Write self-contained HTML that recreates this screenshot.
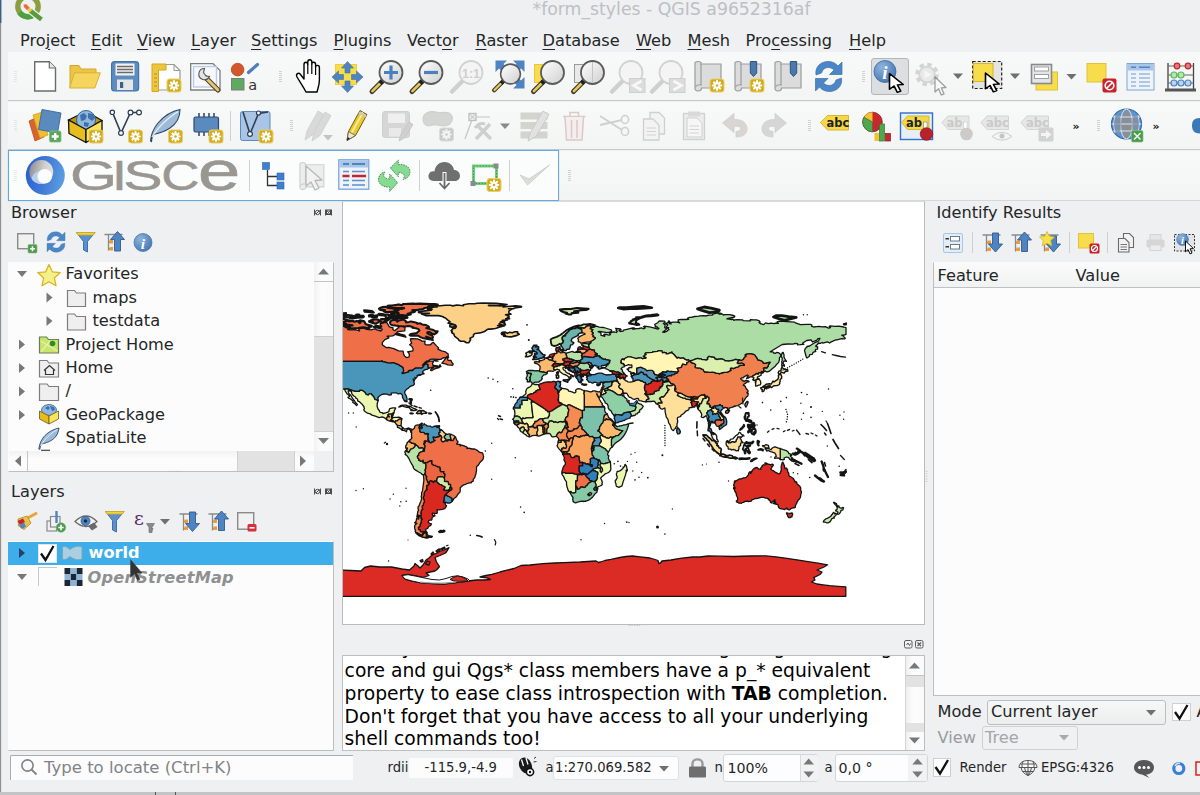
<!DOCTYPE html>
<html><head><meta charset="utf-8"><title>QGIS</title>
<style>
html,body{margin:0;padding:0}
body{width:1200px;height:795px;position:relative;overflow:hidden;background:#eff0f1;font-family:"DejaVu Sans","Liberation Sans",sans-serif;font-size:16.2px;color:#232627}
.a{position:absolute}
.t{position:absolute;white-space:nowrap;line-height:1}
svg{position:absolute;left:0;top:0;overflow:visible}
u{text-decoration-thickness:1px;text-underline-offset:3px}
.view{position:absolute;background:#fcfcfc;border:1px solid #bcbebf;box-sizing:border-box}
.tb{position:absolute;background:linear-gradient(#f8f9f9,#f3f4f4)}
.dots{position:absolute;width:3px;height:11px;background:repeating-linear-gradient(#cfd1d2 0 1px,transparent 1px 2px)}
.sep{position:absolute;width:1px;background:#cfd0d1}
</style></head><body>
<svg width="0" height="0"><defs>
<linearGradient id="gLens" x1="0" y1="0" x2="1" y2="1"><stop offset="0" stop-color="#ffffff"/><stop offset="1" stop-color="#cfcfcf"/></linearGradient>
<linearGradient id="gScroll" x1="0" y1="0" x2="1" y2="0"><stop offset="0" stop-color="#c9c9c9"/><stop offset=".3" stop-color="#ececec"/><stop offset="1" stop-color="#d6d6d6"/></linearGradient>
<radialGradient id="gBlue" cx=".35" cy=".3" r=".8"><stop offset="0" stop-color="#8fb4dc"/><stop offset="1" stop-color="#3f73b0"/></radialGradient>
<g id="star"><rect x="0" y="0" width="14" height="13" rx="2.5" fill="#d4ad1e" stroke="#e8cf6a" stroke-width="1"/><g stroke="#fff" stroke-width="2.2" stroke-linecap="round"><path d="M7 2.2V10.8M2.8 6.5H11.2M4 3.5L10 9.5M10 3.5L4 9.5"/></g><circle cx="7" cy="6.5" r="1.3" fill="#d4ad1e"/></g>
<g id="starg"><rect x="0" y="0" width="14" height="13" rx="2.5" fill="#c9c9c9" stroke="#dcdcdc" stroke-width="1"/><g stroke="#f4f4f4" stroke-width="2.2" stroke-linecap="round"><path d="M7 2.2V10.8M2.8 6.5H11.2M4 3.5L10 9.5M10 3.5L4 9.5"/></g><circle cx="7" cy="6.5" r="1.3" fill="#c9c9c9"/></g>
<g id="mag"><path d="M-8.5 8.5L-19 19" stroke="#3a3a3a" stroke-width="5" stroke-linecap="round"/><path d="M-10.5 10.5L-18.6 18.6" stroke="#ecc94a" stroke-width="2.6" stroke-linecap="round"/><path d="M-8 8L-11 11" stroke="#222" stroke-width="4.5"/><circle r="11.5" fill="url(#gLens)" stroke="#5a5a5a" stroke-width="1.8"/></g>
<g id="magg"><path d="M-8.5 8.5L-19 19" stroke="#cfcfcf" stroke-width="4.5" stroke-linecap="round"/><circle r="11.5" fill="#f4f4f4" stroke="#d2d2d2" stroke-width="1.8"/></g>
<path id="dd" d="M-5 -2.5H5L0 3Z" fill="#6d6f71"/>
<g id="scroll"><path d="M1 1.5Q4 -.5 7 1.5V3H27V27H7.5Q7.5 30 4 30Q.5 30 1 26Z" fill="#dcdcdc" stroke="#9c9c9c" stroke-width="1.2"/><path d="M7 3V24Q3 23 1.3 26" fill="none" stroke="#9c9c9c" stroke-width="1.2"/></g>
<g id="curs"><path d="M0 0L0 15L3.6 11.8L6.3 18L9 16.8L6.3 10.8L11 10.5Z" fill="#fff" stroke="#000" stroke-width="1.3" stroke-linejoin="round"/></g>
</defs></svg>
<!-- left edge strip -->
<div class="a" style="left:0;top:0;width:1px;height:795px;background:#8e9092"></div>
<div class="a" style="left:1px;top:0;width:1px;height:795px;background:#e1e2e3"></div>
<div class="a" style="left:0;top:0;width:1px;height:23px;background:#3d5f86"></div>
<div class="a" style="left:1px;top:0;width:1px;height:23px;background:#9fb0c5"></div>
<!-- bottom strip -->
<div class="a" style="left:0;top:792px;width:1200px;height:3px;background:#c2c4c5"></div>
<!-- title -->
<div class="t" id="title" style="left:532.5px;top:.8px;font-size:17.3px;color:#bcc0c3">*form_styles - QGIS a9652316af</div>
<!-- menubar -->
<div id="menu">
<span class="t" style="left:20px;top:32.8px">Pro<u>j</u>ect</span>
<span class="t" style="left:91px;top:32.8px"><u>E</u>dit</span>
<span class="t" style="left:137px;top:32.8px"><u>V</u>iew</span>
<span class="t" style="left:191px;top:32.8px"><u>L</u>ayer</span>
<span class="t" style="left:251px;top:32.8px"><u>S</u>ettings</span>
<span class="t" style="left:333.5px;top:32.8px"><u>P</u>lugins</span>
<span class="t" style="left:407px;top:32.8px">Vect<u>o</u>r</span>
<span class="t" style="left:475.5px;top:32.8px"><u>R</u>aster</span>
<span class="t" style="left:542.5px;top:32.8px"><u>D</u>atabase</span>
<span class="t" style="left:636px;top:32.8px"><u>W</u>eb</span>
<span class="t" style="left:687.5px;top:32.8px"><u>M</u>esh</span>
<span class="t" style="left:745.5px;top:32.8px">Pro<u>c</u>essing</span>
<span class="t" style="left:849px;top:32.8px"><u>H</u>elp</span>
</div>
<!-- toolbars bg -->
<div class="tb" style="left:8px;top:52px;width:1192px;height:48px"></div>
<div class="a" style="left:8px;top:100px;width:1192px;height:1px;background:#c8c9ca"></div>
<div class="tb" style="left:8px;top:102px;width:1192px;height:47px"></div>
<div class="a" style="left:8px;top:149px;width:1192px;height:1px;background:#c8c9ca"></div>
<div class="tb" style="left:8px;top:151px;width:1192px;height:49px"></div>
<div class="a" style="left:8px;top:200px;width:1192px;height:1px;background:#d6d7d8"></div>

<!-- Q LOGO -->
<svg width="1200" height="795" viewBox="0 0 1200 795">
<defs><clipPath id="qc"><rect x="0" y="0" width="60" height="22"/></clipPath></defs>
<g clip-path="url(#qc)">
<circle cx="28" cy="6.500" r="10.200" fill="none" stroke="#8a9f3f" stroke-width="5.400"/>
<path d="M19.500 12.500A10.200 10.200 0 0 0 33.500 15" fill="none" stroke="#4da040" stroke-width="5.400"/>
<path d="M29.500 10L42 20" stroke="#eff0f1" stroke-width="6.800"/>
<path d="M30 10.500L41.500 19.500" stroke="#5a9a3c" stroke-width="4.600"/>
<path d="M27.500 8L31 11.300" stroke="#f3c846" stroke-width="3.600"/>
<path d="M24.800 5.400L28.300 8.700" stroke="#ee6a3a" stroke-width="3.600"/>
<path d="M23.500 4.200L26 4.600L24 6.600Z" fill="#ee6a3a"/>
</g>
</svg>

<!-- TOOLBAR 1 -->
<div class="dots" style="opacity:.45;left:14px;top:71px"></div>
<div class="dots" style="left:279px;top:71px"></div>
<div class="dots" style="left:862px;top:71px"></div>
<div class="a" style="left:871px;top:58px;width:38px;height:37px;box-sizing:border-box;background:#dddee0;border:1px solid #b4b6b8;border-radius:3px"></div>
<svg width="1200" height="795" viewBox="0 0 1200 795">
<!-- new -->
<path d="M34.7 61.7H49.3L55.5 68V91H34.7Z" fill="#fff" stroke="#6b6b6b" stroke-width="1.4"/><path d="M49.3 61.7V68H55.5" fill="#e8e8e8" stroke="#6b6b6b" stroke-width="1.2"/>
<!-- open -->
<path d="M70 87V65.5H79L81 69H96V74" fill="#ecc545" stroke="#d3a82a" stroke-width="1"/><path d="M69.6 88L74.5 72.8H100.3L94.8 88Z" fill="#f5d55e" stroke="#d9b033" stroke-width="1"/>
<!-- save -->
<rect x="111.6" y="61.6" width="27" height="29.4" rx="3" fill="#5d8cc0" stroke="#4672a6" stroke-width="1.2"/><rect x="115.5" y="63.5" width="19" height="12" fill="#f2f2f2"/><path d="M117 66.5H133M117 69.5H133M117 72.5H133" stroke="#6a6a6a" stroke-width="1.3"/><rect x="117" y="79.5" width="16" height="10.5" fill="#e6e6e6"/><rect x="120" y="82" width="3.2" height="6" fill="#3c5f8f"/>
<!-- new layout -->
<path d="M154 64.5H174L180 70.5V90H154Z" fill="#fff" stroke="#9a9a9a" stroke-width="1.2"/><path d="M174 64.5V70.5H180" fill="none" stroke="#9a9a9a"/><path d="M152 64H166V70H158.5V91.5H152Z" fill="#ecc63e" stroke="#d4a820" stroke-width="1"/><path d="M154 74h3M154 78h3M154 82h3M154 86h3" stroke="#b8901a" stroke-width="1"/><use href="#star" x="167" y="79"/>
<!-- layout manager -->
<path d="M190.7 63.7H213L220 70.5V90H190.7Z" fill="#fff" stroke="#7c7c7c" stroke-width="1.3"/><rect x="193.5" y="66.5" width="23" height="20.5" fill="#f6f8fb" stroke="#b8cbe6" stroke-width="1.4"/><path d="M206 78L218 90" stroke="#4a4234" stroke-width="5.2" stroke-linecap="round"/><path d="M206.5 78.5L217.8 89.8" stroke="#e8c66e" stroke-width="3" stroke-linecap="round"/><path d="M204.5 68.5A5.6 5.6 0 1 0 209.5 76.5L206 76L203.5 72.5Z" fill="#e4e4e4" stroke="#555" stroke-width="1.1"/>
<!-- style manager -->
<circle cx="237.6" cy="69.6" r="6.3" fill="#d2572b" stroke="#b8441f" stroke-width=".8"/><path d="M248.5 72.5L257.5 64.5" stroke="#4d7fb8" stroke-width="3.2" stroke-linecap="round"/><rect x="231.5" y="78.5" width="12.5" height="11.5" fill="#5eab60" stroke="#7c7c7c" stroke-width="1"/>
<text x="248.3" y="89.6" font-size="14.5" fill="#333" font-family="DejaVu Sans,Liberation Sans,sans-serif">a</text>
<!-- hand -->
<path d="M306 92C303 86 300 82 297 77C295.5 74 298.5 72 300.5 74.5L304 79V64.5C304 61.5 307.8 61.5 307.8 64.5V62C307.8 59 311.8 59 311.8 62V64C311.8 61.5 315.6 61.5 315.6 64.5V67C315.6 64.8 319.4 64.8 319.4 67.5V80C319.4 85 318 88 317 92Z" fill="#fff" stroke="#000" stroke-width="1.4" stroke-linejoin="round"/><path d="M307.8 64.5V74M311.8 64V74M315.6 67V75" stroke="#000" stroke-width="1.2"/>
<!-- pan to selection -->
<rect x="335.5" y="64.5" width="21" height="20" fill="#f7dc4b" stroke="#f0cf3a"/><g fill="#4f84c2" stroke="#3f70ab" stroke-width=".6"><path d="M347.5 61.5L353.5 68H350V73H345V68H341.5Z"/><path d="M347.5 92.5L353.5 86H350V81H345V86H341.5Z"/><path d="M332 77L338.5 71V74.5H343.5V79.5H338.5V83Z"/><path d="M363 77L356.5 71V74.5H351.5V79.5H356.5V83Z"/></g>
<!-- zoom in -->
<use href="#mag" x="391" y="72.5"/><path d="M391 65.5V79.5M384 72.5H398" stroke="#4a7fc0" stroke-width="3.2"/>
<!-- zoom out -->
<use href="#mag" x="431" y="72.5"/><path d="M424 72.5H438" stroke="#4a7fc0" stroke-width="3.2"/>
<!-- zoom 1:1 disabled -->
<use href="#magg" x="471" y="72.5"/><text x="471" y="77.5" text-anchor="middle" font-size="12.5" font-weight="bold" fill="#cfcfcf" font-family="Liberation Sans,sans-serif">1:1</text>
<!-- zoom full -->
<g fill="#4f84c2"><path d="M495.5 60.5H507L503.5 64L507.5 68L503 72.500L499 68.500L495.500 72Z"/><path d="M524.500 60.500H513L516.500 64L512.500 68L517 72.500L521 68.500L524.500 72Z"/><path d="M524.500 88.500H513L516.500 85L512.500 81L517 76.500L521 80.500L524.500 77Z"/></g>
<g transform="translate(510.5 74) scale(.86)"><use href="#mag"/></g>
<!-- zoom selection -->
<rect x="534.5" y="64.5" width="14" height="18" fill="#f7dc4b" stroke="#e8c83a"/><use href="#mag" x="552.5" y="72.5"/>
<!-- zoom layer -->
<rect x="574.5" y="64.5" width="16" height="18" fill="#e9e9e9" stroke="#9a9a9a"/><use href="#mag" x="592.5" y="72.5"/><path d="M592.5 62V83" stroke="#c4c4c4" stroke-width="1"/>
<!-- zoom last / next -->
<use href="#magg" x="631" y="72.5"/><rect x="629.5" y="78.5" width="15.5" height="14" fill="#dcdcdc" stroke="#cfcfcf"/><path d="M641.5 81L633.5 85.5L641.5 90" fill="none" stroke="#f8f8f8" stroke-width="2.6"/>
<use href="#magg" x="671" y="72.5"/><rect x="669.5" y="78.5" width="15.5" height="14" fill="#dcdcdc" stroke="#cfcfcf"/><path d="M673.5 81L681.5 85.5L673.5 90" fill="none" stroke="#f8f8f8" stroke-width="2.6"/>
<!-- new map view -->
<use href="#scroll" x="694" y="61"/><use href="#star" x="710" y="79"/>
<!-- new bookmark -->
<use href="#scroll" x="734" y="61"/><path d="M750.3 61.5H756.7V73L753.5 76.5L750.3 73Z" fill="#4a78ad" stroke="#2f5480" stroke-width="1"/><use href="#star" x="750" y="79"/>
<!-- bookmarks -->
<use href="#scroll" x="774" y="61"/><path d="M790.3 61.5H796.7V73L793.5 76.5L790.3 73Z" fill="#4a78ad" stroke="#2f5480" stroke-width="1"/>
<!-- refresh -->
<g fill="#4b86c6" stroke="#3c70aa" stroke-width=".7"><path d="M816 75C814.5 66 822 61 829 61.5C833 61.8 836 63.5 838 66L842 62V74.5H829.5L834 70C831 66.5 823.5 66 821.5 73Z"/><path d="M841.5 78C843 87 835.5 92 828.5 91.5C824.5 91.2 821.5 89.5 819.5 87L815.5 91V78.5H828L823.5 83C826.5 86.5 834 87 836 80Z"/></g>
<!-- identify -->
<circle cx="885" cy="71.5" r="11" fill="url(#gBlue)" stroke="#3a6aa3" stroke-width=".8"/><text x="885" y="79" text-anchor="middle" font-size="19" font-style="italic" font-weight="bold" fill="#fff" font-family="Liberation Serif,serif">i</text><g transform="translate(889.5 73.5) scale(1.25 1.05)"><use href="#curs"/></g>
<!-- feature action disabled -->
<g fill="none" stroke="#d4d4d4"><circle cx="927" cy="74.5" r="9.5" stroke-width="4.5" stroke-dasharray="4.2 3.26"/><circle cx="927" cy="74.5" r="7.8" stroke-width="1.8" fill="#e9e9e9"/></g><path d="M924.5 70.5L931.5 74.5L924.5 78.5Z" fill="#f6f6f6"/><g opacity=".35"><use href="#curs" x="935" y="77"/></g>
<use href="#dd" x="958" y="76"/>
<!-- select -->
<rect x="972.7" y="61.5" width="29" height="27" fill="#e4e4e4" stroke="#222" stroke-width="1.2" stroke-dasharray="3 2"/><rect x="973.5" y="63.5" width="19.5" height="18" fill="#f7dc4b" stroke="#d8b52c"/><g transform="translate(985.5 73) scale(1.25 1.05)"><use href="#curs"/></g>
<use href="#dd" x="1015" y="76"/>
<!-- select by value -->
<rect x="1036" y="72" width="21.5" height="18" fill="#f7dc4b" stroke="#e3c23a"/><rect x="1031.5" y="64.5" width="20" height="19" fill="#e2e6ea" stroke="#8a8a8a" stroke-width="1.6"/><rect x="1034.5" y="67" width="14" height="4" fill="#fff" stroke="#8a8a8a" stroke-width=".8"/><rect x="1034.5" y="74.5" width="14" height="4" fill="#fff" stroke="#8a8a8a" stroke-width=".8"/>
<use href="#dd" x="1071.5" y="76.5"/>
<!-- deselect -->
<rect x="1087" y="63.5" width="19" height="18.5" fill="#f7dc4b" stroke="#e3c23a"/><rect x="1102.5" y="78.5" width="14" height="14" rx="2" fill="#c8232c"/><circle cx="1109.5" cy="85.5" r="4.3" fill="none" stroke="#fff" stroke-width="1.6"/><path d="M1106.5 88.5L1112.5 82.5" stroke="#fff" stroke-width="1.6"/>
<!-- attribute table -->
<rect x="1127" y="63.5" width="27" height="26.5" fill="#eef3f9" stroke="#7ea6d3" stroke-width="1"/><rect x="1127.5" y="64" width="26" height="6.5" fill="#a9c6e8"/><path d="M1131 67.2H1136M1139 67.2H1150" stroke="#4f84c2" stroke-width="1.6"/><path d="M1131 74H1136M1139 74H1150M1131 78H1136M1139 78H1150M1131 82H1136M1139 82H1150M1131 86H1136M1139 86H1150" stroke="#6c9bd0" stroke-width="1.1"/>
<!-- statistics abacus -->
<path d="M1168 63V89M1193.5 63V89" stroke="#444" stroke-width="1.3"/><path d="M1168 66H1193.5M1168 75H1193.5M1168 83H1193.5" stroke="#666" stroke-width="1"/><rect x="1165" y="88.5" width="31" height="3" fill="#555"/><g stroke-width="1.2"><circle cx="1177" cy="66" r="2.8" fill="#e8767a" stroke="#c0272d"/><circle cx="1188" cy="66" r="2.8" fill="#e8767a" stroke="#c0272d"/><circle cx="1174" cy="75" r="3" fill="#b5e6b0" stroke="#5cb85c"/><circle cx="1181" cy="75" r="3" fill="#b5e6b0" stroke="#5cb85c"/><circle cx="1174" cy="83" r="3" fill="#b9d4ee" stroke="#4f84c2"/><circle cx="1181" cy="83" r="3" fill="#b9d4ee" stroke="#4f84c2"/><circle cx="1188" cy="83" r="3" fill="#b9d4ee" stroke="#4f84c2"/></g>
</svg>

<!-- TOOLBAR 2 -->
<div class="dots" style="opacity:.45;left:14px;top:120px"></div>
<div class="dots" style="left:290px;top:120px"></div>
<div class="dots" style="left:808px;top:120px"></div>
<div class="dots" style="left:1097px;top:120px"></div>
<div class="sep" style="left:230px;top:111px;height:30px"></div>
<svg width="1200" height="795" viewBox="0 0 1200 795">
<!-- data source manager -->
<path d="M29 121L38 117L44 137L35 141Z" fill="#d9632c" stroke="#b84e1e" stroke-width=".8"/><path d="M33 115L41 112.5L48 135L40 138Z" fill="#f0bf2f" stroke="#d3a320" stroke-width=".8"/><path d="M42 109.5L61 113L57.5 133L38.5 129.5Z" fill="#5b8abf" stroke="#426f9f" stroke-width="1"/><rect x="49.5" y="131" width="11.5" height="11" rx="1.5" fill="#5aa55a" stroke="#7fbf7f" stroke-width=".8"/><path d="M55.2 133V140M51.7 136.5H58.7" stroke="#fff" stroke-width="2.4"/>
<!-- new geopackage -->
<path d="M68.500 120L86 111.500L102 120.500L86 129.500Z" fill="#b8960f" stroke="#111" stroke-width="1.200"/><circle cx="86" cy="120" r="9.500" fill="#8fb8e0" stroke="#3a5f8c" stroke-width="1"/><path d="M80 115l4-2l3 3l-2 4l-4 1zM88 113l5 1l2 4l-3 3l-4-3zM84 122l5 1l-1 4l-4-1z" fill="#3f6fa8"/><path d="M68.5 120L86 129.5V142.5L69 133.5Z" fill="#e6bd1c" stroke="#111" stroke-width="1.3" stroke-linejoin="round"/><path d="M86 129.5L102 120.5V133L86 142.5Z" fill="#f8e55c" stroke="#111" stroke-width="1.3" stroke-linejoin="round"/><use href="#star" x="89" y="130"/>
<!-- new shapefile -->
<path d="M112.5 112.5L121 133L130.5 112.5H139" fill="none" stroke="#2b3f57" stroke-width="1.6"/><g fill="#fff" stroke="#2b3f57" stroke-width="1.2"><circle cx="112.3" cy="112.3" r="2.2"/><circle cx="130.5" cy="112.5" r="2.4"/><circle cx="139" cy="112.5" r="2.4"/><circle cx="121" cy="133" r="2.4"/></g><use href="#star" x="128.5" y="130"/>
<!-- new spatialite feather -->
<path d="M150.5 141C151 134 154 128 158 123C164 116 172 111 180 109.5C180 117 176 124 170 128C164 132 158 133.5 153.5 134.5C152 137 151.5 139 151.5 141.5Z" fill="#9dbbd8" stroke="#2e4a68" stroke-width="1.1"/><path d="M152 137C158 127 168 118 178 111.5" fill="none" stroke="#e9f1f8" stroke-width="1.2"/><use href="#star" x="168.5" y="130"/>
<!-- scratch layer chip -->
<path d="M199 113V117M204 113V117M209 113V117M214 113V117M199 132V136M204 132V136M209 132V136M214 132V136" stroke="#23364f" stroke-width="1.4"/><rect x="194" y="117" width="24.5" height="15" rx="1.5" fill="#5b8abf" stroke="#2d4a6e" stroke-width="1.2"/><use href="#star" x="209" y="130"/>
<!-- virtual layer -->
<rect x="240.5" y="111.5" width="29.5" height="29" rx="2" fill="#a9c4e4" stroke="#5b8abf" stroke-width="1"/><path d="M243 112L250 134L258.5 113.5L268 112" fill="none" stroke="#2b3f57" stroke-width="1.6"/><g fill="#fff" stroke="#2b3f57" stroke-width="1.2"><circle cx="250" cy="134" r="2.4"/><circle cx="258.5" cy="113" r="2"/></g><use href="#star" x="259" y="130"/>
<!-- current edits disabled -->
<g fill="#d9d9d9" stroke="#cdcdcd" stroke-width=".8"><path d="M305 140L307 131L318 111L324 114.5L313 134.5Z"/><path d="M312 141L314 132L325 112L331 115.5L320 135.5Z"/></g><path d="M323 135H333L328 140.5Z" fill="#c4c4c4"/>
<!-- toggle editing -->
<path d="M347 140.5L348.5 131.5L360 110.5L367 114.5L355.5 135.5Z" fill="#ecc92e" stroke="#6b5a14" stroke-width="1"/><path d="M351.5 133L363 112.5" stroke="#fbf0a0" stroke-width="1.6"/><path d="M347 140.5L348.5 131.5L355.5 135.5Z" fill="#f2e6c8" stroke="#555" stroke-width=".8"/><path d="M347 140.5L347.6 137L350 138.6Z" fill="#222"/><path d="M359 112.5L366 116.5" stroke="#c8c8c8" stroke-width="2.5"/>
<!-- save edits disabled -->
<rect x="382.5" y="111.5" width="27" height="26" rx="2.5" fill="#d6d6d6" stroke="#cfcfcf"/><rect x="388" y="113.5" width="17" height="9.5" fill="#efefef"/><rect x="389" y="128" width="12" height="8.5" fill="#e9e9e9"/><path d="M399 141L400.5 135L409 122L413 124.5L404.5 138Z" fill="#d0d0d0" stroke="#c4c4c4" stroke-width=".8"/>
<!-- add feature disabled -->
<path d="M423 119C423 113 429 110.5 436 112C442 113.5 446 111 450 113.5C454 116 453 124 447 125.5C441 127 437 123.500 431 125.500C426 127 423 124 423 119Z" fill="#d3d6d3" stroke="#cdcdcd"/><use href="#starg" x="439.500" y="128"/>
<!-- vertex tool disabled -->
<rect x="469" y="113.500" width="7" height="7" fill="#efefef" stroke="#bdbdbd" stroke-width="1.300"/><path d="M470 114.500L475 119.500M475 114.500L470 119.500" stroke="#bdbdbd"/><path d="M476 117H490M471.500 121L465 139" stroke="#c4c4c4" stroke-width="1.200"/><path d="M476 139L490 124M478 126L491 139" stroke="#cfcfcf" stroke-width="3.500"/><path d="M475 128Q479 122 485 124" stroke="#cdcdcd" stroke-width="3" fill="none"/>
<use href="#dd" x="505" y="126" opacity=".8"/>
<!-- modify attributes disabled -->
<g fill="#d4d4cf"><rect x="520.500" y="112.500" width="27" height="7"/><rect x="520.500" y="122" width="27" height="7"/><rect x="520.500" y="131.500" width="27" height="7"/></g><path d="M528 141L530 133L543 111L549 114.500L536 136.500Z" fill="#e2e2e2" stroke="#c6c6c6" stroke-width=".9"/>
<!-- trash disabled -->
<g fill="none" stroke="#d9c9c9" stroke-width="1.500"><path d="M563 116.500H585.500M570 116V112.500H578.500V116"/><path d="M565 117L566.500 140H582L583.500 117" fill="#f4eeee"/><path d="M571.500 120V138M577 120V138"/></g>
<!-- scissors disabled -->
<path d="M600 116L622 130M600 125L622 120" stroke="#cfcfcf" stroke-width="1.800"/><ellipse cx="625" cy="131.500" rx="3.600" ry="4" fill="none" stroke="#cfcfcf" stroke-width="1.600"/><ellipse cx="625" cy="119.500" rx="3.600" ry="4" fill="none" stroke="#cfcfcf" stroke-width="1.600"/>
<!-- copy disabled -->
<g fill="#f3f3f3" stroke="#cfcfcf" stroke-width="1.300"><path d="M650 112.500H659L664.500 118V134H650Z"/><path d="M643.500 119H653L659 125V140H643.500Z"/></g><path d="M646.500 128H656M646.500 131.500H656M646.500 135H656" stroke="#d4d4d4" stroke-width="1.200"/>
<!-- paste disabled -->
<rect x="683.500" y="113.500" width="21" height="26" fill="#ececec" stroke="#cfcfcf" stroke-width="1.300"/><rect x="688" y="111.500" width="12" height="5" fill="#d9d9d9"/><path d="M687 118H697L702 123V137H687Z" fill="#f6f6f6" stroke="#cfcfcf"/><path d="M689.500 126H699M689.500 129.500H699M689.500 133H699" stroke="#d4d4d4" stroke-width="1.200"/>
<!-- undo / redo disabled -->
<path d="M722.500 123L734 113.500V119.500C742 119 747 123 747 129C747 134 743 137 736 137V131.500C739 131.500 740.500 130 740.500 128.500C740.500 126.500 738 126 734 126.500V132.500Z" fill="#d9d5d5" stroke="#cfcaca" stroke-width=".7"/>
<path d="M786.500 123L775 113.500V119.500C767 119 762 123 762 129C762 134 766 137 773 137V131.500C770 131.500 768.500 130 768.500 128.500C768.500 126.500 771 126 775 126.500V132.500Z" fill="#d6d6d6" stroke="#cccccc" stroke-width=".7"/>
<!-- label abc -->
<path d="M820.500 122.500L827.500 115.500H848.500V130H827.500Z" fill="#f4d84a" stroke="#d9b62a" stroke-width="1"/><text x="837.800" y="127.200" text-anchor="middle" font-size="11.500" font-weight="bold" fill="#222" font-family="DejaVu Sans,Liberation Sans,sans-serif">abc</text>
<!-- diagram -->
<circle cx="872.500" cy="122" r="9.800" fill="#c8272d" stroke="#8a1a1f" stroke-width=".8"/><path d="M872.500 122V112.200A9.800 9.800 0 0 0 864 117.200Z" fill="#f2c22f"/><path d="M872.500 122L864 117.200A9.800 9.800 0 0 0 872.500 131.800Z" fill="#4fa84f" stroke="#2e7a2e" stroke-width=".6"/><rect x="874.500" y="133" width="4.500" height="8" fill="#f2c22f"/><rect x="879.500" y="124" width="5" height="17" fill="#4fa84f" stroke="#2e7a2e" stroke-width=".7"/><rect x="885.500" y="133.500" width="5" height="7.500" fill="#c8272d" stroke="#8a1a1f" stroke-width=".7"/>
<!-- pinned labels highlight -->
<rect x="900.500" y="113" width="32" height="26.500" fill="#e6eef8" stroke="#2f6fd0" stroke-width="1.400"/><path d="M901.500 122.500L907.500 116H929V129.500H907.500Z" fill="#f4d84a" stroke="#d9b62a" stroke-width="1"/><text x="906" y="127" font-size="11.500" font-weight="bold" fill="#222" font-family="DejaVu Sans,Liberation Sans,sans-serif">ab</text><rect x="923.500" y="122" width="3.600" height="7" fill="#fff" stroke="#888" stroke-width=".7"/><circle cx="926.500" cy="134" r="6.300" fill="#b8232a" stroke="#8a1a1f" stroke-width=".7"/>
<!-- disabled pin -->
<path d="M942 122.500L948 116H969V129.500H948Z" fill="#e7e7e7" stroke="#d4d4d4"/><text x="946.500" y="127" font-size="11.500" font-weight="bold" fill="#cacaca" font-family="DejaVu Sans,Liberation Sans,sans-serif">ab</text><rect x="963.500" y="122" width="3.600" height="7" fill="#fff" stroke="#ccc" stroke-width=".7"/><circle cx="966.500" cy="134" r="6.300" fill="#cfcaca"/>
<!-- disabled show/hide -->
<path d="M981 122.500L987 116H1008.500V129.500H987Z" fill="#e7e7e7" stroke="#d4d4d4"/><text x="997.500" y="127" text-anchor="middle" font-size="11.500" font-weight="bold" fill="#cacaca" font-family="DejaVu Sans,Liberation Sans,sans-serif">abc</text><path d="M992 136.500Q1002 128 1012 136.500Q1002 144 992 136.500Z" fill="#f4f4f4" stroke="#cdcdcd"/><circle cx="1002" cy="136" r="2.500" fill="#c4c4c4"/>
<!-- disabled move -->
<path d="M1021 122.500L1027 116H1048.500V129.500H1027Z" fill="#e7e7e7" stroke="#d4d4d4"/><text x="1037.500" y="127" text-anchor="middle" font-size="11.500" font-weight="bold" fill="#cacaca" font-family="DejaVu Sans,Liberation Sans,sans-serif">abc</text><rect x="1038.500" y="127.500" width="15" height="14" rx="1.500" fill="#d2d2d2"/><path d="M1041 133H1046V130L1051.500 134.500L1046 139V136H1041Z" fill="#f4f4f4"/>
<!-- chevrons -->
<text x="1072.500" y="130" font-size="11" font-weight="bold" fill="#111" font-family="DejaVu Sans,Liberation Sans,sans-serif">»</text>
<text x="1152.500" y="130" font-size="11" font-weight="bold" fill="#111" font-family="DejaVu Sans,Liberation Sans,sans-serif">»</text>
<!-- metasearch globe -->
<circle cx="1126.500" cy="124" r="15" fill="#5a96d6" stroke="#2f66a8" stroke-width="1.200"/><ellipse cx="1126.500" cy="124" rx="6" ry="15" fill="#8a8f96" stroke="#d6e6f6" stroke-width="1"/><path d="M1115 115Q1112.500 124 1115 133M1138 115Q1140.500 124 1138 133" fill="none" stroke="#d6e6f6" stroke-width="1"/><path d="M1113 117H1140M1111.500 124H1141.500M1113 131H1140" stroke="#d6e6f6" stroke-width="1"/><ellipse cx="1117.500" cy="124" rx="3.500" ry="10" fill="#8a8f96" opacity=".7"/><ellipse cx="1135.500" cy="124" rx="3.500" ry="10" fill="#8a8f96" opacity=".7"/><rect x="1131.500" y="130.500" width="11.500" height="11.500" rx="1.500" fill="#4d9a4d" stroke="#7fbf7f" stroke-width=".7"/><path d="M1134 133L1140.500 139.500M1140.500 133L1134 139.500" stroke="#e8f5e8" stroke-width="1.600"/>
<!-- python partial -->
<path d="M1200 118C1194 118 1192 121 1192 125.500C1192 130 1194 133.500 1200 133.500Z" fill="#3b78b8"/>
</svg>

<!-- TOOLBAR 3 GISCE -->
<div class="a" style="left:8px;top:150px;width:551px;height:51px;box-sizing:border-box;background:#fbfcfc;border:1px solid #6aa7dc;box-shadow:0 0 1px #9cc6ea"></div>
<div class="dots" style="opacity:.45;left:14px;top:170px"></div>
<div class="dots" style="left:568px;top:170px"></div>
<div class="sep" style="left:249px;top:160px;height:31px"></div>
<div class="sep" style="left:419px;top:160px;height:31px"></div>
<div class="sep" style="left:509px;top:160px;height:31px"></div>
<svg width="1200" height="795" viewBox="0 0 1200 795">
<defs><linearGradient id="gSph" x1="0" y1=".4" x2="1" y2=".6"><stop offset="0" stop-color="#2a5fd0"/><stop offset=".45" stop-color="#3f78d8"/><stop offset="1" stop-color="#5c9fe0"/></linearGradient>
<linearGradient id="gRing" x1="0" y1=".3" x2="1" y2=".5"><stop offset="0" stop-color="#8e8e8e"/><stop offset=".6" stop-color="#cfcfcf"/><stop offset="1" stop-color="#e2e2e2"/></linearGradient></defs>
<circle cx="45.300" cy="175.500" r="19.500" fill="url(#gSph)"/>
<clipPath id="bowl"><circle cx="41.300" cy="172" r="11.900"/></clipPath><circle cx="41.300" cy="172" r="11.900" fill="url(#gRing)"/><g clip-path="url(#bowl)"><circle cx="40.500" cy="180" r="9" fill="#b5cff0"/></g>
<circle cx="44.700" cy="176.300" r="7.300" fill="#fbfcfc"/>
<text transform="translate(69.96 190.1) scale(1.427 1)" font-size="42.4" fill="#9a9792" stroke="#9a9792" stroke-width=".5" font-family="Liberation Sans,sans-serif">G</text>
<text transform="translate(112.05 190.1) scale(1.264 1)" font-size="42.4" fill="#9a9792" stroke="#9a9792" stroke-width=".5" font-family="Liberation Sans,sans-serif">I</text>
<text transform="translate(123.32 190.1) scale(1.393 1)" font-size="42.4" fill="#9a9792" stroke="#9a9792" stroke-width=".5" font-family="Liberation Sans,sans-serif">S</text>
<text transform="translate(161.31 190.1) scale(1.248 1)" font-size="42.4" fill="#9a9792" stroke="#9a9792" stroke-width=".5" font-family="Liberation Sans,sans-serif">C</text>
<text transform="translate(197.74 190.0) scale(1.400 1)" font-size="54.8" fill="#9a9792" stroke="#9a9792" stroke-width=".5" font-family="Liberation Sans,sans-serif">e</text>
<!-- tree icon -->
<path d="M267.500 170V185.500H277M267.500 176.500H277" fill="none" stroke="#333" stroke-width="1.300"/><g fill="#3f7fd0" stroke="#2f66b0" stroke-width=".6"><rect x="262.500" y="162.500" width="7" height="7"/><rect x="277" y="173" width="7" height="7"/><rect x="277" y="182" width="7" height="7"/></g>
<!-- disabled select cursor -->
<g opacity=".45"><use href="#scroll" x="299" y="162" transform="translate(299 162) scale(.92) translate(-299 -162)"/></g><path d="M306 166L306 186L311 182L315 190L319 188L315 180.500L322 180Z" fill="#f2f2f2" stroke="#b8b8b8" stroke-width="1.300" stroke-linejoin="round"/>
<!-- table red -->
<rect x="338.800" y="159.800" width="30" height="29.400" fill="#eef3f9" stroke="#6f9fd6" stroke-width="1.200"/><rect x="339.500" y="160.500" width="28.600" height="7" fill="#a9c6e8"/><path d="M343 164H349M352 164H365" stroke="#4f84c2" stroke-width="2"/><path d="M343 171.500H349M352 171.500H365M343 180.500H349M352 180.500H365M343 185H349M352 185H365" stroke="#5b8fd0" stroke-width="1.400"/><path d="M342.500 176H349.500M352 176H366" stroke="#c8232c" stroke-width="2.600"/>
<!-- green refresh -->
<g fill="#86db92" stroke="#4a8f58" stroke-width="1" stroke-dasharray="1.6 1" stroke-linejoin="round"><path d="M390.3 168L398.3 160V164.500C405 164 410 167 410 171.500C410 176 406.500 179 403 179.500C405 177 405.500 173 398.300 172.500V176.700Z"/><path d="M397.700 182.700L389.700 191.500V187C383 187.500 378.500 184 378.500 179.500C378.500 175.500 381.500 172.500 385 172C383 174.500 382.500 178.500 389.700 179V174Z"/></g>
<!-- cloud download -->
<path d="M434 181C429 181 427.500 177 429 174C430 171.500 433 171 434.500 171.500C435 166 439 162 444.500 162C450 162 453.500 166 454 170C457.500 170 460 172.500 460 176C460 179 457.500 181 454.500 181Z" fill="#6f6f6f"/><path d="M444.500 172V187M439.500 182.500L444.500 188L449.500 182.500" fill="none" stroke="#fbfcfc" stroke-width="4"/><path d="M444.500 173V188M439.500 183L444.500 188.500L449.500 183" fill="none" stroke="#6a6a6a" stroke-width="1.800"/>
<!-- green rect star -->
<rect x="473.500" y="166" width="23" height="17.500" fill="#fbfcfc" stroke="#6fcf7a" stroke-width="3"/><rect x="473.500" y="166" width="23" height="17.500" fill="none" stroke="#3d8a4a" stroke-width=".8" stroke-dasharray="1.500 1.500"/><rect x="493.500" y="163.500" width="5" height="5" fill="#8a8a8a"/><rect x="470.500" y="181" width="5" height="5" fill="#8a8a8a"/><use href="#star" x="487" y="178.500"/>
<!-- check disabled -->
<path d="M520 175L527.500 185L549.500 165L529 179Z" fill="#dcdcdc" stroke="#c9d6c9" stroke-width="1" stroke-linejoin="round"/>
</svg>

<!-- BROWSER -->
<div class="t" style="left:11px;top:204.500px">Browser</div>
<div class="view" style="left:8px;top:262px;width:326px;height:210px;border-color:#fcfcfc #bcbebf #bcbebf #fcfcfc"></div>
<!-- scrollbars -->
<div class="a" style="left:314px;top:262px;width:19px;height:189px;background:linear-gradient(90deg,#f2f2f2,#fdfdfd 40%,#fafafa)"></div>
<div class="a" style="left:314px;top:280.500px;width:19px;height:1px;background:#c4c4c4"></div>
<div class="a" style="left:314px;top:336px;width:19px;height:96px;background:#e2e2e2;border-top:1px solid #d0d0d0;border-bottom:1px solid #d0d0d0;box-sizing:border-box"></div>
<div class="a" style="left:9px;top:451px;width:305px;height:20px;background:linear-gradient(#f2f2f2,#fdfdfd 40%,#fafafa)"></div>
<div class="a" style="left:27px;top:451px;width:1px;height:20px;background:#c4c4c4"></div>
<div class="a" style="left:237px;top:451px;width:58px;height:20px;background:#e2e2e2;border-left:1px solid #d0d0d0;border-right:1px solid #d0d0d0;box-sizing:border-box"></div>
<div class="a" style="left:314px;top:451px;width:19px;height:20px;background:#eff0f1"></div>
<div class="t" style="left:65.500px;top:266.2px">Favorites</div>
<div class="t" style="left:92.500px;top:290.0px">maps</div>
<div class="t" style="left:92.500px;top:313.2px">testdata</div>
<div class="t" style="left:65.500px;top:336.5px">Project Home</div>
<div class="t" style="left:65.500px;top:359.9px">Home</div>
<div class="t" style="left:65.500px;top:383.4px">/</div>
<div class="t" style="left:65.500px;top:406.7px">GeoPackage</div>
<div class="t" style="left:65.500px;top:430.4px">SpatiaLite</div>
<div class="t" style="left:168px;top:466px;font-size:8px;color:#b0b2b3;letter-spacing:0">.....</div>
<svg width="1200" height="795" viewBox="0 0 1200 795">
<!-- float/close -->
<g fill="none" stroke="#4a4c4e" stroke-width="1"><path d="M314.500 209.500V215.500M320.500 209.500V215.500"/><circle cx="317.500" cy="212.500" r="2.200"/><path d="M316 214L319.500 210.500"/><path d="M325.500 209.500V215.500M331.500 209.500V215.500"/><path d="M326.500 210L330.500 215M330.500 210L326.500 215"/><rect x="326.500" y="210" width="4" height="4.500"/></g>
<!-- toolbar: add layer -->
<rect x="17.700" y="233.700" width="16" height="15" fill="#f1f1f1" stroke="#8a8a8a" stroke-width="1.400"/><rect x="28" y="244.500" width="9" height="8.500" rx="1.200" fill="#4d9a4d" stroke="#7fbf7f" stroke-width=".6"/><path d="M32.500 246.200V251.200M30 248.700H35" stroke="#fff" stroke-width="1.600"/>
<!-- refresh -->
<g fill="#4b86c6" stroke="#3c70aa" stroke-width=".5" transform="translate(56 242) scale(.68) translate(-828.700 -76.500)"><path d="M816 75C814.500 66 822 61 829 61.500C833 61.800 836 63.500 838 66L842 62V74.500H829.500L834 70C831 66.500 823.500 66 821.500 73Z"/><path d="M841.500 78C843 87 835.500 92 828.500 91.500C824.500 91.200 821.500 89.500 819.500 87L815.500 91V78.500H828L823.500 83C826.500 86.500 834 87 836 80Z"/></g>
<!-- filter -->
<path d="M76.500 232.500H95L87.500 241.500V252L83.500 250V241.500Z" fill="#5b8fd0" stroke="#3f70aa" stroke-width="1"/><path d="M76.500 232.500H95L93.500 235H78Z" fill="#f2d13a" stroke="#d3ae20" stroke-width=".8"/>
<!-- collapse all -->
<path d="M104.500 234.500H122.500M108.500 234.500V250.500M108.500 242H113M108.500 249H113" fill="none" stroke="#8a8a8a" stroke-width="1.300"/><rect x="109.500" y="240" width="3.500" height="3.500" fill="#f29a2e"/><rect x="109.500" y="247" width="3.500" height="3.500" fill="#f29a2e"/><path d="M117.500 231.500L124.500 239.500H120.500V251H114.500V239.500H110.500Z" fill="#4f84c2" stroke="#2f5a94" stroke-width=".9"/>
<!-- info -->
<circle cx="143" cy="242.500" r="9" fill="url(#gBlue)" stroke="#3a6aa3" stroke-width=".7"/><text x="143" y="248.500" text-anchor="middle" font-size="15.500" font-style="italic" font-weight="bold" fill="#fff" font-family="Liberation Serif,serif">i</text>
<!-- scrollbar arrows -->
<g fill="#76787a"><path d="M318 274.500H329L323.500 268.500Z"/><path d="M318 438H329L323.500 444Z"/><path d="M21 455.500V466.500L15 461Z"/><path d="M300 455.500V466.500L306 461Z"/></g>
<!-- tree arrows -->
<g fill="#76787a"><path d="M17 271H27L22 277Z"/><path d="M46.500 292.500V302.500L52.500 297.500Z"/><path d="M46.500 316V326L52.500 321Z"/><path d="M19 339.500V349.500L25 344.500Z"/><path d="M19 363V373L25 368Z"/><path d="M19 386.500V396.500L25 391.500Z"/><path d="M19 410V420L25 415Z"/></g>
<!-- star -->
<path d="M49 264.500L52.300 271.800L60.300 272.600L54.300 277.900L56 285.700L49 281.700L42 285.700L43.700 277.900L37.700 272.600L45.700 271.800Z" fill="#f6f08c" stroke="#d9b520" stroke-width="1.300" stroke-linejoin="round"/>
<!-- folders -->
<g fill="#efefef" stroke="#7d7d7d" stroke-width="1.200"><path d="M67.500 306.500V290.500H74.500L76.500 293H85.500V306.500Z"/><path d="M67.500 330V314H74.500L76.500 316.500H85.500V330Z"/><path d="M39.500 377V360.500H47L49 363H58.500V377Z"/><path d="M39.500 400.500V384H47L49 386.500H58.500V400.500Z"/></g>
<path d="M44 370.500L49.500 365.500L55 370.500M45.500 370V374.500H53.500V370" fill="none" stroke="#333" stroke-width="1.200"/>
<!-- project home -->
<path d="M39.500 353V337H46.500L48.500 339.500H58.500V353Z" fill="#c6e86a" stroke="#6f7a5a" stroke-width="1.200"/><path d="M40.500 341L57.500 351M41 352L50 341" stroke="#f4e8b0" stroke-width="1.300"/><circle cx="52.500" cy="343.500" r="2.800" fill="#2e8a2e"/>
<!-- geopackage -->
<ellipse cx="49" cy="410" rx="7.500" ry="5.500" fill="#8fb8e0" stroke="#3a5f8c" stroke-width=".8"/><path d="M45 408l3-2l2 2l-2 2zM50 406l4 1l1 3l-3 1z" fill="#3f6fa8"/><path d="M39.500 411L49 416V424L39.500 419Z" fill="#e6bd1c" stroke="#6b5a14" stroke-width=".8"/><path d="M49 416L58.500 411V419L49 424Z" fill="#f8e55c" stroke="#6b5a14" stroke-width=".8"/>
<!-- spatialite feather -->
<path d="M38.800 449C39.500 443 42 438.500 45 435.500C49 431.500 54 429 59 428C58.500 433 56 437.500 52 440C48 442.500 44 443.500 41.500 444C40.500 446 40 447.500 39.800 449.500Z" fill="#9dbbd8" stroke="#2e4a68" stroke-width=".9"/><path d="M40.500 446C45 438.500 51 433 57.500 429.500" fill="none" stroke="#e9f1f8" stroke-width=".9"/>
<path d="M41 450.300H50" stroke="#444" stroke-width="1.200"/>
</svg>

<!-- LAYERS -->
<div class="t" style="left:11px;top:483.700px">Layers</div>
<div class="view" style="left:8px;top:541px;width:326px;height:210px;border-color:#fcfcfc #bcbebf #bcbebf #fcfcfc"></div>
<div class="a" style="left:8px;top:541.500px;width:325px;height:23px;background:#3daee9"></div>
<div class="a" style="left:38px;top:543.500px;width:18.500px;height:19px;background:#fff;border:1px solid #e6e6e6;box-sizing:border-box"></div>
<div class="a" style="left:38px;top:567px;width:18.500px;height:19px;background:#fcfcfc;border-top:1px solid #c9c9c9;border-left:1px solid #c9c9c9;box-sizing:border-box"></div>
<div class="t" style="left:88.500px;top:544.500px;font-weight:bold;color:#fff">world</div>
<div class="t" style="left:87.500px;top:569.700px;font-weight:bold;font-style:italic;color:#8e9091;letter-spacing:.22px">OpenStreetMap</div>
<svg width="1200" height="795" viewBox="0 0 1200 795">
<g fill="none" stroke="#4a4c4e" stroke-width="1"><path d="M314.500 488.500V494.500M320.500 488.500V494.500"/><circle cx="317.500" cy="491.500" r="2.200"/><path d="M316 493L319.500 489.500"/><path d="M325.500 488.500V494.500M331.500 488.500V494.500"/><path d="M326.500 489L330.500 494M330.500 489L326.500 494"/><rect x="326.500" y="489" width="4" height="4.500"/></g>
<!-- style brush -->
<path d="M24 520L36 513.500" stroke="#e8a53a" stroke-width="3" stroke-linecap="round"/><path d="M18 519L27 516L31 523L24 529.500L18.500 526Z" fill="#e9c24a" stroke="#b8861e" stroke-width=".8"/><path d="M17.500 521L23 518.500L25 522L20 525Z" fill="#c8232c"/><path d="M19 525L24 522.500L26 526.500L22 529Z" fill="#4f84c2"/>
<!-- add group -->
<rect x="47" y="521" width="9.500" height="10" fill="#f1f1f1" stroke="#8a8a8a" stroke-width="1.200"/><rect x="50.500" y="516.500" width="9.500" height="10.500" fill="#f1f1f1" stroke="#8a8a8a" stroke-width="1.200"/><path d="M56.500 511V523" stroke="#4f84c2" stroke-width="2.400"/><circle cx="61" cy="527.500" r="4.800" fill="#4d9a4d" stroke="#7fbf7f" stroke-width=".6"/><path d="M61 524.800V530.200M58.300 527.500H63.700" stroke="#fff" stroke-width="1.600"/>
<!-- eye -->
<path d="M75 521.500Q86 510.500 97 521.500Q86 531.500 75 521.500Z" fill="#f4f4f4" stroke="#6a6a6a" stroke-width="1.300"/><circle cx="85.500" cy="521" r="4.500" fill="#4f84c2" stroke="#2f5a94" stroke-width=".8"/><circle cx="85.500" cy="521" r="1.800" fill="#1a2a40"/><path d="M88 526L94 522.500L97.500 527L92 530.500Z" fill="#6a6a6a"/>
<!-- filter -->
<path d="M105.500 511.500H124L116.500 520.500V532L112.500 530V520.500Z" fill="#5b8fd0" stroke="#3f70aa" stroke-width="1"/><path d="M105.500 511.500H124L122.500 514H107Z" fill="#f2d13a" stroke="#d3ae20" stroke-width=".8"/>
<!-- expression filter -->
<path d="M147.500 528H153.500L152 532H149V528" fill="#8a8a8a"/><path d="M146.500 523.500H154.500L152 527.500V532.500H149V527.500Z" fill="#8a8a8a" stroke="#6a6a6a" stroke-width=".6"/>
<use href="#dd" x="165" y="521.500"/>
<!-- expand all -->
<path d="M179.500 514H197.500M183.500 514V530.500M183.500 521.500H188M183.500 528.500H188" fill="none" stroke="#8a8a8a" stroke-width="1.300"/><rect x="184.500" y="519.500" width="3.500" height="3.500" fill="#f29a2e"/><rect x="184.500" y="526.500" width="3.500" height="3.500" fill="#f29a2e"/><path d="M192.500 531.500L199.500 523.500H195.500V512H189.500V523.500H185.500Z" fill="#4f84c2" stroke="#2f5a94" stroke-width=".9"/>
<!-- collapse all -->
<path d="M208.500 514H226.500M212.500 514V530.500M212.500 521.500H217M212.500 528.500H217" fill="none" stroke="#8a8a8a" stroke-width="1.300"/><rect x="213.500" y="519.500" width="3.500" height="3.500" fill="#f29a2e"/><rect x="213.500" y="526.500" width="3.500" height="3.500" fill="#f29a2e"/><path d="M221.500 511L228.500 519H224.500V530.500H218.500V519H214.500Z" fill="#4f84c2" stroke="#2f5a94" stroke-width=".9"/>
<!-- remove -->
<rect x="237.700" y="512.700" width="16" height="16.500" fill="#f1f1f1" stroke="#8a8a8a" stroke-width="1.400"/><rect x="247.500" y="524" width="9" height="7.500" rx="1.500" fill="#d62f3a"/><path d="M249.500 527.800H254.500" stroke="#fff" stroke-width="1.600"/>
<!-- tree arrows -->
<path d="M19 548V558L25 553Z" fill="#2a3f6a"/><path d="M17 574H27L22 580Z" fill="#76787a"/>
<!-- check -->
<path d="M41 553.500L45.500 560L53.500 546" fill="none" stroke="#111" stroke-width="2.300"/>
<!-- world icon -->
<path d="M62.500 547C65 545.500 67 547 70 549.500C73 547 78 545 82 547V559C78 561 73 559 70 556.500C67 559 65 560.500 62.500 559Z" fill="#a9cfe0" stroke="#7aa6bc" stroke-width="1"/>
<!-- osm checker -->
<g fill="#1d2733"><rect x="64.500" y="568" width="6" height="6"/><rect x="76.500" y="568" width="6" height="6"/><rect x="70.500" y="574" width="6" height="6"/><rect x="64.500" y="580" width="6" height="6"/><rect x="76.500" y="580" width="6" height="6"/></g><g fill="#8fb4dc"><rect x="70.500" y="568" width="6" height="6"/><rect x="64.500" y="574" width="6" height="6"/><rect x="76.500" y="574" width="6" height="6"/><rect x="70.500" y="580" width="6" height="6"/></g>
<!-- mouse cursor -->
<path d="M130.500 559.500V577.500L134.500 574L137.500 580.500L140 579.300L137 573H142Z" fill="#333" stroke="#444" stroke-width=".5"/>
</svg>
<div class="t" style="left:134px;top:509px;font-size:19px;color:#5a2a6a;font-family:'DejaVu Serif','Liberation Serif',serif">ε</div>

<!-- MAP -->
<div class="a" style="left:342px;top:201px;width:583px;height:424px;background:#fff;border:1px solid #b9bbbc;border-top-color:#d8dadb;box-sizing:border-box"></div>
<svg width="1200" height="795" viewBox="0 0 1200 795"><defs><clipPath id="mc"><rect x="343" y="202" width="581" height="422"/></clipPath></defs>
<g clip-path="url(#mc)" stroke="#141414" stroke-width="1.3" stroke-linejoin="round">
<path d="M329.5 361.4L381.5 361.4L382.2 360.9L382.5 361.7L385.2 362.1L387.7 362.9L391 363.1L393 362.6L398.9 364.9L399.6 365.6L401.1 366.3L402.9 367.6L403.6 370.5L402.9 372.2L401.9 373L402.6 373.7L408.8 371.9L408.5 370.8L409.4 370.5L412.6 370.5L413.4 369.5L415.6 368.1L421.5 368.1L422.7 367.5L423.5 366.1L424 365.3L425.4 364L427.1 364.2L427.8 364.6L427.8 367L428.9 368L430.8 367.6L432.8 367.1L433.5 367.6L431.1 369L430.6 370.3L431.8 370.7L433.8 369.3L435.3 368.6L439.2 367.6L437.7 366.6L435.9 366.8L433.3 366.1L432.8 364.8L432.5 363.2L433.7 361.7L432.3 361.1L429.9 361.2L426.6 362.4L423.7 364.8L422.4 365.1L424.2 363.1L426.4 361.2L428.8 360.5L430.1 359.4L432.5 359.2L434.5 359.2L438.1 359.5L440.9 359.4L442.9 358L445.8 357.3L448.2 356.2L448.2 354.1L445.5 351.9L441.6 350.9L437.9 349.1L438.6 347.9L436.5 345.9L433.2 342.3L432.1 343L430.5 344.8L426.7 344.8L425.2 344.7L424.7 342.5L425.2 341.1L421.7 341L421.2 340.3L417.6 338.8L411.5 338.6L410.4 338.9L410.9 341.5L411.7 343L409.7 344.8L411.7 346.2L413.1 348.7L412.9 350.8L407.5 351.8L408.7 352.8L409.5 355.3L408.7 357.2L406.5 357.5L404.8 356.2L403.6 354.1L403.1 351.1L398.7 350.8L393.7 348.7L388.8 347.4L386.4 347.7L382.3 344.7L382.3 342.7L384.9 339.6L388.9 337.8L387.1 336.2L390.3 336.1L392.8 335.9L394.8 334.7L397 332.7L397.4 331.7L404.8 330.8L405 327.3L402.8 326.4L397.9 326.1L398.9 327.6L397.9 328L394.7 330.7L392.8 329.5L393.1 327.8L389.4 326.8L386.9 322.7L383 322.6L380 323.9L381.5 326.4L379.3 328.5L382.3 329.1L381 331L376.1 329.7L375.8 328.6L370.9 329.9L366.6 329.3L363.3 328L358.5 328.8L359.6 331L355.2 329.7L349.9 329.8L347.6 329.5L349.9 328.6L347.6 327.8L344.2 326L339 327L334.4 326.6L329.5 326.8Z" fill="#ef7048"/>
<path d="M441.9 363.2L445.5 363.8L447.8 364.9L450.7 365.1L452.6 365.3L453.2 363.9L451.7 362.2L451 360.5L448 360.4L447.5 358.5L448.7 357L446.3 357.5L443.6 361.2Z" fill="#ef7048"/>
<path d="M433.5 365.3L437.5 365.8L436 366.5L434.2 365.8Z" fill="#ef7048"/>
<path d="M438.6 367.1L440.9 366.6L440.1 364.8L438.9 365.9Z" fill="#ef7048"/>
<path d="M433.3 359.9L437.9 361.2L435.9 361.1Z" fill="#ef7048"/>
<path d="M398.4 333.4L400.6 334.2L404.5 335.2L405.8 337.1L401.9 335.9L396.7 334.7L395.3 334L397.2 333.2Z" fill="#ef7048" stroke-width="1.6"/>
<path d="M433 340.1L430.8 339.4L427.4 338.9L422.4 337.9L420.3 337.1L418.3 335.7L415.9 335.4L411 335.7L409.5 335.1L410.7 333.9L416.8 333L417.5 332.2L419.5 330.5L418.5 329.1L415.9 328.3L412.4 327.8L413.6 327.5L410.2 326.3L408 326.1L405 326.4L398.9 326L395.2 325.4L392.5 325.3L391.1 324.6L390.4 323.9L389.9 322.2L391.3 320.7L393 320L397.4 319.5L396 320.5L397.4 321.7L398.9 320.4L403.3 319.5L406.1 321.4L406 322.4L409.2 321.9L410.9 321.4L414.6 322.2L417 322.9L417.1 323.7L420.3 323.2L422 324.4L426.1 325.1L427.6 325.8L429.2 327.3L426.1 328.1L430.1 329.1L432.6 329.7L435.2 331.2L437.7 331.2L437.2 332.4L434.3 334.4L432.3 333.7L429.6 332L427.4 332.2L427.2 333.2L428.9 334.2L431.3 335.1L432 335.4L433 337.1L432.5 338.3L430.3 337.9L426.1 336.6L428.4 337.9L430.3 338.9L430.5 339.6Z" fill="#ef7048" stroke-width="2"/>
<path d="M360.2 320.4L364.3 321.4L365.8 324.3L371.7 325.9L371.5 326.6L368.8 326.8L369.9 327.5L369.3 328L366.3 327.8L363.3 327.3L361.4 327.5L358.2 328L350.9 328.5L349.9 327.6L347.7 327.1L346.2 327.3L344.2 326L345.2 325.8L347.9 325.6L350.3 325.6L352.5 325.3L349.1 324.9L345.5 325.1L343.2 325.1L346.2 323.7L343.5 323.7L340.7 323.2L342 322.1L343.2 321.4L347.7 320.4L349.4 320.7L348.6 321.4L352.5 320.9L354.7 321.7L356.7 320.9L358.2 321.6L359.6 323.1L360.4 322.4L359.2 320.7Z" fill="#ef7048" stroke-width="2.2"/>
<path d="M334.6 318.7L331.4 318.7L329.5 322.7L331.2 324.3L333.6 323.7L336.3 323.4L340.7 323.2L344.7 321.7L347.7 320.4L343.9 318.9L339.5 318.9L337.1 318.5Z" fill="#ef7048" stroke-width="2.2"/>
<path d="M373.7 319.5L378.1 319.5L379.3 321.6L376.1 323.7L374.6 323.6L373.4 323.1L369.2 321.7L369.2 321.2L372.7 321.4L370.9 320.2Z" fill="#ef7048" stroke-width="2.2"/>
<path d="M384.9 321.2L383 322.6L381.2 322.4L380.2 320.2L381 319.2L386.2 319L389.4 319.4L386.9 320.9Z" fill="#ef7048" stroke-width="2.2"/>
<path d="M375.9 325.8L381.3 326.4L379.3 328L373.7 327Z" fill="#ef7048" stroke-width="2"/>
<path d="M359.6 315.5L361.8 315.8L363.4 315.9L363.8 316.7L362.8 317.5L357 317.7L352.8 318.5L350.3 318.5L349.9 318L353.5 317.2L345.9 317.5L343.5 317.2L345.9 315.5L347.4 315L352.1 315.6L355.2 316.7L358 316.7L355.7 315.1L357.2 314.5L359.1 314.6Z" fill="#ef7048" stroke-width="2.2"/>
<path d="M372.7 316.1L377.3 315.3L377.3 316.3L376.4 317.5L373.7 317.7L371.9 317.3L371.9 316.5L369.2 316.5L369 315.3L372.7 314.8Z" fill="#ef7048" stroke-width="2.2"/>
<path d="M382.3 314L384.2 314.5L387.6 314.5L389.1 315.1L388.6 315.6L390.6 316.1L391.6 316.5L394 316.5L396.4 316.7L399.1 316.3L402.4 316.1L405.3 316.3L407 317L407.5 317.7L406.3 318L404 318.5L401.8 318.2L396.9 318.5L393.3 318.5L390.6 318.3L386.2 317.8L385.6 316.8L385.4 316L383.7 315.3L380.2 315.1L378.3 314.5L379 313.8Z" fill="#ef7048" stroke-width="2.2"/>
<path d="M419.3 303.7L431.1 304L434.7 304.2L437.7 304.7L437.7 305L433.7 305.9L429.4 306.2L427.9 306.5L431.6 306.5L427.8 307.5L424.9 308L422 309.4L418.6 309.7L417.5 310.1L412.4 310.2L414.8 310.4L413.6 310.7L414.9 311.6L413.4 312.1L410.7 312.6L409.9 313.3L407.5 313.8L407.8 314.1L410.7 314.1L410.7 314.5L406.1 315.5L401.8 315L396.9 315.3L394.3 315.1L391.1 315L391 314.1L394 313.8L393.1 312.6L394.2 312.4L398.7 313.3L396.5 312.1L393.7 311.8L395 311.1L398 310.7L398.6 310.2L396.2 309.6L395.5 308.6L400.1 308.7L401.4 308.9L404.1 308.2L400.2 308L394.3 308.2L391.3 307.5L389.9 306.9L387.9 306.4L387.6 305.9L390.1 305.5L392.1 305.5L395.3 305.2L397.9 304.5L399.9 304.7L401.8 305.2L403.1 304.2L405.3 304L408.3 303.8L413.4 303.7L414.4 303.8Z" fill="#ef7048" stroke-width="2.2"/>
<path d="M386.2 306.9L388.4 307.9L391.1 308.2L394 308.6L395.3 309.6L397.4 310.2L395 310.7L392 311.9L388.9 312.1L385.4 311.9L383.6 311.2L383.7 310.6L385 310.1L381.8 310.1L380 309.6L379 308.7L380.2 308L381.3 307.5L383 307.4L382.3 307Z" fill="#ef7048" stroke-width="2.2"/>
<path d="M367.5 310.4L372 311.1L373.2 311.9L373.9 312.6L371.2 312.4L368.5 311.9L364.6 311.8L366.3 311.3L364.3 310.9L364.1 310.2Z" fill="#ef7048" stroke-width="2"/>
<path d="M337.6 314.3L341.2 313.3L343.7 313.3L346.1 313.1L345.9 314.3L344.5 315L343 315L339.8 315.6L337.1 316L334.7 315.6Z" fill="#ef7048" stroke-width="2"/>
<path d="M329.5 361.4L329.5 389.2L344.5 389.2L348.6 388.9L348.4 389.2L354.8 391.3L359.6 391.3L359.6 390.4L362.4 390.4L365.1 392.4L365.8 394.1L368.2 395.1L369.2 393.8L371 393.8L372.7 395.7L374.2 397.7L374.9 399.5L377.6 400.4L378.3 400.4L377.8 398L379.1 396.3L382.3 394.3L383.9 394L386.9 394.1L388.8 395L391.3 394.8L391.3 393.1L393 392.8L396.2 392.8L398.2 394L400.2 393.3L400.9 393.6L402.3 395L402.6 397.7L403.4 399L404.3 400.4L405.3 401.6L406.5 401.6L407 399.9L407 398.7L406.3 396L405 393.5L404.6 392.3L405.1 391.1L406.7 389.2L408.5 388.1L409.5 386.9L411.5 385.9L413.2 385.4L414.4 384L413.9 381.8L413.4 379.8L413.1 378.8L414.1 381.3L414.4 380.1L415.4 378.6L414.8 377.4L415.8 378.4L417 377.1L417.4 375.6L420.3 374.7L420.8 375.1L422.2 374L423 374L424 373.9L423.9 373.2L423 373.4L422.7 372.7L422.7 371.7L423.9 370.3L425.9 369.3L427.4 369.3L428.9 368L427.8 367L427.8 364.6L427.1 364.2L425.4 364L424 365.3L423.5 366.1L422.7 367.5L421.5 368.1L415.6 368.1L413.4 369.5L412.6 370.5L409.4 370.5L408.5 370.8L408.8 371.9L402.6 373.7L401.9 373L402.9 372.2L403.6 370.5L402.9 367.6L401.1 366.3L399.6 365.6L398.9 364.9L393 362.6L391 363.1L387.7 362.9L385.2 362.1L382.5 361.7L382.2 360.9L381.5 361.4Z" fill="#4a96bb"/>
<path d="M417.3 375.6L420.7 374.7L419.1 375.4Z" fill="#4a96bb" stroke-width="1.5"/>
<path d="M344.5 389.2L348.6 388.9L348.4 389.2L354.8 391.3L359.6 391.3L359.6 390.4L362.4 390.4L365.1 392.4L365.8 394.1L368.2 395.1L369.2 393.8L371 393.8L372.7 395.7L374.2 397.7L374.9 399.5L377.6 400.4L378.3 400.4L377.3 403.1L377.1 406.3L378.1 409.3L379.3 410.5L379.6 411.5L380.3 412.4L382.2 412.7L382.9 413.5L385.6 412.9L387.9 412.2L388.9 411.5L389.4 409.2L389.8 408.7L392.8 407.8L395.2 407.8L395.7 408.1L394.7 409.8L394.3 411L394 413.2L393.5 412.9L393.1 412.9L392.8 413.9L391.8 414.1L388.6 414.1L388.6 415L387.7 415L389.6 416.9L387.4 416.9L386.6 418.3L386.6 419.6L384.5 417.8L382.3 416.8L379.1 417.6L375.3 416.1L372 415.1L370.2 413.9L367.5 413.2L365 411.5L364.1 410.5L363.8 409.7L364.5 408.5L363.9 407.1L363.8 406.5L361.8 403.9L359.2 401.6L357.7 400.9L357.5 399L355.8 398.2L355.5 397L353.8 396L352.8 395.1L351.8 393.5L351.3 391.4L349.4 390.9L348.4 390.4L348.2 391.1L348.6 393.1L350.9 395.5L351.8 397.2L352.8 398.7L354.3 400.7L355.3 402.2L356.2 403.1L357.5 404.6L356.5 405.6L354.8 403.6L352.8 402.4L353 401.1L350.6 398.9L348.9 398.4L347.9 397.3L349.4 396.7L349.4 395.8L347.2 394.1L345.2 390.8Z" fill="#ebf7b1"/>
<path d="M386.6 419.6L386.6 418.3L387.4 416.9L389.6 416.9L387.7 415L388.6 415L388.6 414.1L391.8 414.1L391.6 417.3L392.6 417.6L393.3 417.6L391.8 418.8L391.3 419.8L390.1 421L388.3 420.6Z" fill="#fdb96e"/>
<path d="M391.8 414.1L392.8 413.9L393.1 412.9L393.5 413.2L393.1 415.4L392.1 417.3L391.6 417.3Z" fill="#ebf7b1"/>
<path d="M391.3 419.8L391.8 418.8L393.3 417.6L394.7 417.4L397 417.3L398.7 417.1L399.7 417.4L401.4 418.3L401.9 418.8L399.1 419.1L397.4 420.8L395.7 420.8L394.8 422.2L394 421.5L392.8 420.5Z" fill="#ebf7b1"/>
<path d="M390.1 421L391.3 419.8L392.8 420.5L394 421.5L392.8 421.8L391.5 421.3Z" fill="#fdb96e"/>
<path d="M394.8 422.2L395.7 420.8L397.4 420.8L399.1 419.1L401.9 418.8L401.3 421.1L401.3 423.2L400.9 425.7L398.9 425.6L397.5 425.4L396.2 424.2Z" fill="#fdb96e"/>
<path d="M397.5 425.4L398.9 425.6L400.9 425.7L402.9 427.9L402.3 428.1L402.3 430.4L401.1 429.2L399.2 427.9L397.5 427.4L397.4 426.5Z" fill="#cdeba7"/>
<path d="M402.3 428.1L402.9 427.9L404.8 429.2L407.3 428.4L408.8 428L411.5 429.4L411.9 430.8L410.7 431.9L410.2 430.1L408.7 428.9L407.8 429.1L406.8 430.1L406.5 431.8L405.3 430.9L403.6 430.3L402.3 430.4Z" fill="#cdeba7"/>
<path d="M398.9 407.1L400.4 405.8L402.4 405.3L404.8 405.1L406.1 405.1L408.3 406.3L410 406.1L412.1 407.5L413.6 408.3L414.6 408.7L417 409.8L414.6 410.5L410.9 410.5L412.1 409.7L410.4 409.2L409.4 407.6L406.8 407.3L404.1 406.6L402.4 405.8L400.6 406.6Z" fill="#fff6b6" stroke-width="1.4"/>
<path d="M409.9 413.4L410.9 412.9L413.2 413.4L412.4 413.9L410.9 413.9Z" fill="#ebf7b1" stroke-width="1.4"/>
<path d="M416.4 413.2L418.3 411L419.3 410.5L421.2 410.8L421.2 412.4L421.2 413.7L420 413.4L417.5 413.7Z" fill="#fdb96e" stroke-width="1.4"/>
<path d="M421.2 410.8L422.7 410.5L424.1 411L425.4 412L426.9 412.7L426.2 413.4L424 413.4L423.2 413.4L421.7 414.4L421.2 413.7Z" fill="#cdeba7" stroke-width="1.4"/>
<path d="M428.8 413L431.5 413.4L431.1 413.7L428.8 413.8Z" fill="#fdb96e" stroke-width="1.4"/>
<path d="M410.2 401.6L410.7 401.6L411.4 403.1L410.5 403.1Z" fill="#abdda4" stroke-width="1.6"/>
<path d="M410.9 398.7L412.2 399.2L411.9 400.4L410.7 398.9Z" fill="#abdda4" stroke-width="1.6"/>
<path d="M409 399.2L410.9 399.2L409.7 398.7Z" fill="#abdda4" stroke-width="1.6"/>
<path d="M438.1 425.9L439.4 425.7L439.4 427.1L437.9 427.2Z" fill="#fdb96e" stroke-width="1.5"/>
<path d="M463.2 304.7L468.9 303.7L474.8 303.7L477 303.2L483 303L496.5 303.2L507.1 304.5L503.9 305.2L497.5 305.2L488.4 305.3L489.2 305.7L495.1 305.5L500.3 306L503.5 305.5L504.9 306.2L503 307L507.4 306.5L515.5 305.9L520.6 306.2L521.6 306.9L514.7 308L513.7 308.6L508.4 308.7L512.3 308.9L510.3 310.1L508.9 311.1L508.9 313.1L511 314.1L508.4 314.3L505.6 314.8L508.8 315.6L509.1 317.2L507.3 317.2L509.5 318.7L505.7 318.9L507.8 319.5L507.1 320L504.7 320.4L502.4 320.4L504.6 321.6L504.6 322.2L501.2 321.6L500.3 322.1L502.7 322.4L504.9 323.4L505.4 324.8L502.5 325.1L501.2 324.4L499.2 323.6L499.7 324.6L497.6 325.6L502.2 325.6L504.6 325.8L500 327.1L495.4 328.5L490.4 329.1L488.5 329.1L486.8 329.8L484.5 331.5L480.8 332.7L479.7 332.9L477.4 333.2L475 333.5L473.5 334.7L473.5 335.9L472.7 336.9L470 338.3L470.6 339.6L469.8 341L468.9 342.7L466.6 342.8L464 341.3L460.7 341.3L459.2 340.5L458 338.8L455.1 336.7L454.3 335.6L453.9 334L451.6 332.5L452.2 331.3L451.1 330.7L452.8 328.6L455.3 328.1L455.9 327.5L456.3 326.1L454.4 326.6L453.4 327L451.9 327.1L449.9 326.6L449.8 325.4L450.4 324.6L452.1 324.6L455.4 324.9L452.6 323.9L451 323.4L449.4 323.6L448 323.1L449.9 321.6L448.9 320.9L447.5 319.9L445.5 318L443.3 317.3L443.3 316.7L438.7 315.6L435.2 315.5L430.6 315.6L426.6 315.6L424.5 315.1L421.7 314.1L426.1 313.6L429.4 313.4L422.4 313.1L418.5 312.4L418.6 311.8L425.1 310.9L431.3 310.1L432 309.4L427.4 308.9L428.8 308.2L434.7 307L437.2 306.9L436.4 306L440.4 305.7L445.6 305.3L450.9 305.3L452.7 305.9L457.1 305L461.2 305.5L463.5 305.7Z" fill="#fdd088" stroke-width="1.6"/>
<path d="M501.2 333.4L502.2 332.2L504.9 332L507.4 333.2L510 332.2L512.2 332.7L514.9 331.8L517.7 331.8L517.4 333L519.2 334.2L517 335.4L512.2 336.6L510.6 336.9L508.4 336.7L503.7 336.1L505.4 335.4L501.7 334.5L504.7 334.2L504.7 333.7Z" fill="#fdd088" stroke-width="1.6"/>
<path d="M411.5 429.4L412.6 429.6L414.4 428.2L414.8 426.2L415.8 425.4L417 425L418.3 425.2L420.3 424L421.8 423.2L422.2 423.7L420.8 424.5L419.8 425.4L419 427.7L419.5 428.7L420 429.9L420 431.6L420.8 432.3L423.9 432.3L425.1 433.8L427.9 433.5L428.6 433.8L427.8 436.5L428.6 438.2L427.8 439.4L428.8 440.2L429.3 441.9L428.9 442.2L427.6 441.2L424.4 441.2L424.4 442.2L425.4 442.4L425.1 443.1L424 443.3L424 444.4L424.7 444.9L425.1 446L424.2 451.4L423.4 450.5L422.9 450.3L424 448.7L422.7 448L421.7 448L420.2 448.2L418.8 448L417.8 446.3L417.1 445.8L414.9 444.4L415.3 444.1L414.2 443.9L413.4 443.4L411.5 443.4L411 442.7L409 441.7L408.8 441.2L409.5 441.1L409.9 439.7L410.7 439.5L412.1 437.7L411.4 437.2L411.7 435.7L411.4 434.6L411.7 432.6L410.7 431.9L411.9 430.8Z" fill="#f58b51"/>
<path d="M421.8 423.2L421.7 424.7L420.8 424.9L421.3 425.6L421.3 426.5L420.5 427.4L421.2 428.7L421.8 428.7L422.4 427.4L421.7 426.9L421.7 425.5L423.7 424.9L424.2 423.5L424.7 424.7L425.9 424.9L427.1 425.7L427.1 426.2L430.5 426.2L431.3 426.9L432.6 427.1L433.7 426.5L435.7 426L437.7 426L436.4 426.5L436.9 427.4L438.2 427.4L439.6 428.2L439.7 429.6L440.6 429.6L441.3 429.9L439.9 430.9L440.1 432.3L438.9 432.8L439.1 433.6L438.6 434L439.7 435.3L439.9 435.8L439.2 436.5L437.4 437L436.2 437.3L435.7 437.7L434.3 437.3L433.2 437.2L433.8 439.9L435.2 440.4L434 440.9L433.8 441.6L431.8 442.2L431.6 442.7L430.3 442.9L429.3 441.9L428.8 440.2L427.8 439.4L428.6 438.2L427.8 436.5L428.6 433.8L427.9 433.5L425.1 433.8L423.9 432.3L420.8 432.3L420 431.6L420 429.9L419.5 428.7L419 427.7L419.8 425.4L420.8 424.5L422.2 423.7Z" fill="#4a96bb"/>
<path d="M441.3 429.9L442.4 430.6L443.5 431.8L444.1 432.6L445.8 434L445.5 435.5L444.5 436L444.3 437.2L445 438.5L445.5 438.5L446.8 440.9L445.5 440.9L443.6 441.6L443.5 441.9L442.6 441.9L441.6 441.1L441.4 440.4L440.9 439.4L441.6 438L441.8 437.4L441.3 436.7L440.8 436.3L440.9 435.7L440.6 435.3L439.7 435.3L438.6 434L439.1 433.6L438.9 432.8L440.1 432.3L439.9 430.9Z" fill="#fdd088"/>
<path d="M445.8 434L447.8 434.3L448 434.1L449.4 434L451 434.3L450.2 435.8L450.4 437L451 438L450.7 438.7L450.5 439.5L450.2 440.2L449.2 439.9L448.3 440L447.7 439.9L447.5 440.4L447.7 441.1L446.8 440.9L445.5 438.5L445 438.5L444.3 437.2L444.5 436L445.5 435.5Z" fill="#86caa5"/>
<path d="M451 434.3L452.7 435L454.8 436.3L454.9 437L454.1 438.7L453.4 439.9L452.9 440.6L452.1 440.6L451.7 440.2L451.4 440L450.9 440.6L450.2 440.2L450.5 439.5L450.7 438.7L451 438L450.4 437L450.2 435.8Z" fill="#fdb96e"/>
<path d="M408.8 441.2L409 441.7L411 442.7L411.5 443.4L413.4 443.4L414.2 443.9L415.3 444.1L414.9 444.4L415.3 445.6L414.8 446.8L412.9 448.5L410.9 449.2L409.7 450.7L409.5 451.7L408.5 452.5L407.8 451.7L407.2 451.4L406.5 451.5L406.3 451L406.8 450.5L406.7 449.8L407.5 448.7L407.2 447.8L406.5 448.7L405.5 447.8L405.8 447.4L405.6 446L406.1 445.6L406.5 444.6L407.2 443.4L407 442.7Z" fill="#fdb96e"/>
<path d="M424.2 451.4L422.7 451.3L422.5 451.5L421.2 451.9L419.1 453L419 453.7L418.6 454.4L418.8 455.2L417.8 455.7L417.8 456.4L417.3 456.8L418 458.3L419 459.3L418.6 460.1L419.7 460.1L420.3 461.1L422.4 461.1L423.2 460.1L423.2 462.7L423.9 462.8L424.9 462.6L426.2 465.4L425.9 465.9L425.9 467.1L425.9 468.6L425.2 469.3L425.4 469.9L425.1 470.6L425.7 472L424.7 473.8L424.2 474.7L423.4 475L421.7 474.1L421.5 473.5L418.3 471.8L415.3 469.9L413.9 468.7L413.2 467.4L413.4 466.9L412.1 464.7L410.4 461.7L408.8 458.3L408.2 457.4L407.5 456.3L406.3 455.1L405.1 454.4L405.6 453.7L404.8 452L405.3 450.9L406.7 449.8L406.8 450.5L406.3 451L406.5 451.5L407.2 451.4L407.8 451.7L408.5 452.5L409.5 451.7L409.7 450.7L410.9 449.2L412.9 448.5L414.8 446.8L415.3 445.6L414.9 444.4L417.1 445.8L417.8 446.3L418.8 448L420.2 448.2L421.7 448L422.7 448L424 448.7L422.9 450.3L423.4 450.5Z" fill="#b9e3a6"/>
<path d="M424.9 462.6L426.1 462.7L426.9 462.7L427.4 462.2L428.8 461.5L429.8 460.8L432 460.6L431.8 461.8L432 462.5L431.8 463.7L433.7 465.2L435.5 465.4L436.2 466L437.4 466.4L438.1 466.9L439.1 466.9L440.1 467.4L440.1 468.4L440.4 468.7L440.5 469.6L440.1 469.6L440.6 471.6L444 471.6L443.6 472.6L443.8 473.3L444.8 473.8L445.1 474.8L444.8 476.1L444.5 477.8L444 478.2L444 477.7L442.4 476.8L440.9 476.7L437.9 477.2L437 478.7L437 479.7L436.4 481.6L436.2 481.2L434.2 481.2L433.5 482.6L432.5 481.4L430.3 480.9L428.9 482.4L427.8 482.8L427.1 480.4L426.1 478.5L426.7 476.8L425.8 476.1L425.6 475L424.7 473.8L425.7 472L425.1 470.6L425.4 469.9L425.2 469.3L425.9 468.6L425.9 467.1L425.9 465.9L426.2 465.4Z" fill="#ec6541"/>
<path d="M445 495.1L447.2 492.9L449 491.2L451.7 489.5L451.7 488.2L450.9 487.1L450 487.5L450.4 486.6L450.5 485.6L450.5 484.6L449.9 484.3L449.4 484.6L448.7 484.5L448.5 483.9L448.3 482.4L448 481.9L446.8 481.4L446.2 481.7L444.5 481.4L444.5 479L444 478.2L444.5 477.8L444.8 476.1L445.1 474.8L444.8 473.8L443.8 473.3L443.6 472.6L444 471.6L440.6 471.6L440.1 469.6L440.5 469.6L440.4 468.7L440.1 468.4L440.1 467.4L439.1 466.9L438.1 466.9L437.4 466.4L436.2 466L435.5 465.4L433.7 465.2L431.8 463.7L432 462.5L431.8 461.8L432 460.6L429.8 460.8L428.8 461.5L427.4 462.2L426.9 462.7L426.1 462.7L424.9 462.6L423.9 462.8L423.2 462.7L423.2 460.1L422.4 461.1L420.3 461.1L419.7 460.1L418.6 460.1L419 459.3L418 458.3L417.3 456.8L417.8 456.4L417.8 455.7L418.8 455.2L418.6 454.4L419 453.7L419.1 453L421.2 451.9L422.5 451.5L422.7 451.3L424.2 451.4L425.1 446L424.7 444.9L424 444.4L424 443.3L425.1 443.1L425.4 442.4L424.4 442.2L424.4 441.2L427.6 441.2L428.9 442.2L429.3 441.9L430.3 442.9L431.6 442.7L431.8 442.2L433.8 441.6L434 440.9L435.2 440.4L433.8 439.9L433.2 437.2L434.3 437.3L435.7 437.7L436.2 437.3L437.4 437L439.2 436.5L439.9 435.8L439.7 435.3L440.6 435.3L440.9 435.7L440.8 436.3L441.3 436.7L441.8 437.4L441.6 438L440.9 439.4L441.4 440.4L441.6 441.1L442.6 441.9L443.5 441.9L443.6 441.6L445.5 440.9L446.8 440.9L447.7 441.1L447.5 440.4L447.7 439.9L448.3 440L449.2 439.9L450.2 440.2L450.9 440.6L451.4 440L451.7 440.2L452.1 440.6L452.9 440.6L453.4 439.9L454.1 438.7L454.9 437L455.6 437L455.9 437.9L457 440.9L457.8 441.2L458 442.4L456.6 443.8L457.1 444.3L460.2 444.4L460.2 446.1L461.5 445.1L463.5 445.6L466.4 446.8L467.3 447.6L466.9 448.7L468.9 448.2L472.1 449L474.7 449L477.2 450.3L479.4 452.2L480.6 452.7L482.1 452.7L482.8 453.4L483.3 455.4L483.6 456.4L483 459.3L482.1 460.3L479.7 462.7L478.6 464.7L477.4 466L476.9 466.2L476.5 467.4L476.5 470.6L476 473.1L475.9 474.3L475.4 475L475 477.2L473.3 479.4L473.2 481.1L471.6 481.9L471.3 482.9L469.4 482.9L466.9 483.6L465.6 484.3L463.7 484.8L461.9 486.1L460.3 487.8L460.2 489L460.3 490L460 491.7L459.7 492.5L458.5 493.4L456.6 496.4L455.1 497.8L453.9 498.5L453.2 500.1L452.1 501.2L451.6 500.1L452.4 499.3L451.4 498.1L450 497.3L448.3 496.3L447.7 496.3L446 494.9Z" fill="#ef7048"/>
<path d="M436.4 481.6L437 479.7L437 478.7L437.9 477.2L440.9 476.7L442.4 476.8L444 477.7L444 478.2L444.5 479L444.5 481.4L446.2 481.7L446.8 481.4L448 481.9L448.3 482.4L448.5 483.9L448.7 484.5L449.4 484.6L449.9 484.3L450.5 484.6L450.5 485.6L450.4 486.6L450 487.5L449.7 489L448.2 490.4L446.8 490.5L445 490.4L443.3 489.8L445 487.3L444.6 486.6L442.9 486L440.9 484.6L439.6 484.4L436.4 481.6Z" fill="#cdeba7"/>
<path d="M445 495.1L446 494.9L447.7 496.3L448.3 496.3L450 497.3L451.4 498.1L452.4 499.3L451.6 500.1L452.1 501.2L451.4 502.2L449.5 503.1L448.2 502.8L447.3 503L445.8 502.2L444.6 502.3L443.6 501.3L443.8 500.3L444.1 499.8L444.1 498.1L444.5 496.4L445 495.1Z" fill="#4a96bb"/>
<path d="M432.5 481.4L433.5 482.6L434.2 481.2L436.2 481.2L436.4 481.6L439.6 484.4L440.9 484.6L442.9 486L444.6 486.6L445 487.3L443.3 489.8L445 490.4L446.8 490.5L448.2 490.4L449.7 489L450 487.5L450.9 487.1L451.7 488.2L451.7 489.5L449 491.2L447.2 492.9L445 495.1L444.5 496.4L444.1 498.1L444.1 499.8L443.8 500.3L443.5 502.2L445.6 503.7L445.3 504.8L446.5 505.5L446.3 506.4L444.8 508.6L442.3 509.4L438.9 509.8L437 509.6L437.4 510.6L437 512L437.4 512.8L436.4 513.3L434.5 513.6L433 513L432.3 513.5L432.5 515.2L433.7 515.7L434.5 515L435 516L433.5 516.5L432.1 517.5L432 519.2L431.5 520.1L429.9 520.1L428.6 521.1L428.1 522.3L429.8 523.4L431.5 523.8L430.8 525.3L428.8 526.3L427.8 528.3L426.2 529L425.6 529.7L426.1 531.5L427.2 532.4L426.4 532.4L424.9 532L420.8 531.9L420.2 530.9L420.2 529.7L419 529.7L418.5 529.2L418.3 527.3L419.7 526.6L420.2 525.5L420 524.6L420.8 523.3L421.3 521.1L421.2 520L422 519.7L421.8 519L421 518.7L421.5 518L420.8 517.4L420.5 515.5L421.2 515.2L420.8 513L421.2 511.3L421.7 509.8L422.7 509.3L422.2 507.6L422.2 506L423.4 504.9L423.4 503.5L424.4 501.8L424.4 500.3L423.9 500L423.2 497.1L424.2 495.2L424 493.7L424.5 492.2L425.7 490.5L426.9 489.5L426.4 488.8L426.7 488.3L426.7 485.5L428.6 484.6L429.1 482.9L428.9 482.4L430.3 480.9L432.5 481.4Z" fill="#d9281f"/>
<path d="M426.4 532.9L427 533.7L427.8 535L430 536L432.4 536.4L431.6 537.3L430 537.4L429.2 536.8L428.1 536.8L426.4 536.8Z" fill="#d9281f"/>
<path d="M424.7 473.8L425.6 475L425.8 476.1L426.7 476.8L426.1 478.5L427.1 480.4L427.8 482.8L428.9 482.4L429.1 482.9L428.6 484.6L426.7 485.5L426.7 488.3L426.4 488.8L426.9 489.5L425.7 490.5L424.5 492.2L424 493.7L424.2 495.2L423.2 497.1L423.9 500L424.4 500.3L424.4 501.8L423.4 503.5L423.4 504.9L422.2 506L422.2 507.6L422.7 509.3L421.7 509.8L421.2 511.3L420.8 513L421.2 515.2L420.5 515.5L420.8 517.4L421.5 518L421 518.7L421.8 519L422 519.7L421.2 520L421.3 521.1L420.8 523.3L420 524.6L420.2 525.5L419.7 526.6L418.3 527.3L418.5 529.2L419 529.7L420.2 529.7L420.2 530.9L420.8 531.9L424.9 532L426.4 532.4L424.9 532.4L424.2 532.7L422.7 533.4L422.4 534.9L421.7 535.1L419.7 534.4L417.8 533.2L415.8 532.4L415.1 531.2L415.6 530.2L414.8 529.2L414.6 526.3L415.3 524.6L417.1 523.3L414.6 522.8L416.1 521.4L416.6 518.5L418.6 519.2L419.5 515.7L418.3 515.2L417.8 517.4L416.8 517L417.3 514.7L417.8 511.5L418.6 510.4L418.1 508.8L418 506.9L418.6 506.7L419.7 504L420.8 501.3L421.7 498.8L421.2 496.3L421.7 494.9L421.5 492.9L422.5 490.7L422.9 487.5L423.4 483.9L423.9 480.2L423.7 477.5L423.4 475L424.2 474.7Z" fill="#f58b51"/>
<path d="M426.4 532.9L426.4 536.8L428.1 536.8L429.2 536.8L428.6 537.4L427.2 538L426.4 538L425.4 537.8L424.1 537.3L422.4 537.1L420.2 536.1L418.5 535.2L416.1 533.2L417.6 533.6L420 534.7L422.2 535.4L423 534.6L423.5 533.4L425.2 532.7Z" fill="#f58b51" stroke-width="1.6"/>
<path d="M438.9 531.6L440.9 530.6L442.4 531L443.4 530.4L444.7 531.1L444.2 531.7L441.9 532.2L441.2 531.6L439.7 532.4Z" fill="#d9281f" stroke-width="1.8"/>
<path d="M588.3 347L589 343.7L589.6 343.7L591.3 342.8L589.6 342L592.8 340.3L594.9 338.8L595.4 337.9L592.8 336.7L593.5 335.7L592 334.5L593.2 333L591.3 331.2L592.8 329.8L590.1 328.6L590.5 327.5L591.8 327.3L594.7 326.6L596.4 326.1L599.3 327.1L603.8 327.5L610.2 329.5L611.6 330.2L611.6 331.3L609.7 332.2L607 332.7L599.4 331.3L598.2 331.7L600.9 332.9L601.1 335.4L603.3 335.9L604.7 336.4L604.8 335.6L603.8 334.7L605 334.2L609 335.2L610.4 334.7L609.4 333.5L613.3 331.8L614.8 332L616.3 332.5L617.3 331.3L616 330.3L616.8 329.4L615.6 328.3L620.4 328.8L621.2 329.8L619.2 330L619.2 331L620.4 331.5L623.1 331.2L623.4 330.2L626.9 329.3L632.8 327.8L634.2 328L632.5 329L634.5 329.1L635.7 328.6L638.9 328.5L641.5 327.8L643.3 328.8L645.3 327.8L643.5 326.8L644.5 326.1L649.4 326.8L651.8 327.3L657.8 329.1L659 328.3L657.3 327.5L657.2 327L655.1 326.8L655.8 326.1L654.8 324.8L654.8 324.3L657.8 322.7L659 321.2L660.2 320.9L664.7 321.2L665.1 322.2L663.4 323.6L664.6 324.1L665.1 325.3L664.7 327.6L666.6 328.6L665.8 329.8L662.6 332.2L664.4 332.4L665.1 331.8L666.9 331.3L667.4 330.5L669 329.7L668 328.8L668.6 327.6L666.8 327.5L666.4 326.6L667.8 324.9L665.6 323.6L668.6 322.4L668.3 321.2L669.1 321L670 322.1L669.3 323.7L671.2 323.9L670.3 322.7L673.2 322.1L676.7 322.1L679.8 323L678.3 321.6L678.1 319.9L681.1 319.4L685.2 319.5L688.7 319.4L687.4 318.3L689.4 317.3L691.3 317.3L694.6 316.5L699 316.1L699.5 315.8L704.1 315.6L705.4 316L709.1 315.1L712.4 315.1L712.7 314.3L714.4 313.6L718.4 312.9L721.3 313.4L718.9 314L722.8 314.2L723.2 315L724.8 314.6L729.7 314.6L733.5 315.5L734.8 316.1L734.5 317L732.6 317.5L728.2 318.3L726.9 318.9L728.9 319.2L731.4 319.5L732.9 319.2L733.8 320.4L734.6 319.9L737.3 319.6L742.7 319.9L743.1 320.7L750.2 320.9L750.3 319.7L753.9 319.9L756.6 319.9L759.3 320.9L760.1 321.9L759.1 322.6L761.1 323.9L763.8 324.6L765.5 322.9L768.2 323.6L771.1 323.1L774.3 323.7L775.5 323.2L778.4 323.4L777 321.9L779.4 321.2L794.6 322.2L796.1 323.2L800.4 324.6L807.2 324.3L810.6 324.4L811.9 325.1L811.8 326.4L813.8 327L816.2 326.6L819.2 326.4L822.2 326.8L825.4 326.6L828.5 328.1L830.5 327.6L829.2 326.4L830 325.8L835.2 326.3L838.8 326.1L843.7 327L846 327.7L846 334.4L846 334.4L843.8 335.2L841.7 335.1L843.2 335.9L844.2 337.2L845 337.8L845.2 338.4L844.7 338.9L841.7 338.6L836.9 339.8L835.4 340L832.9 341.2L830.3 342.3L829.7 343L827.3 341.8L822.9 343.2L822.1 342.5L820.6 343.3L818.2 343L817.7 344.2L815.7 345.9L815.8 346.5L817.7 346.9L817.5 349.2L815.8 349.4L815.1 350.8L815.8 351.4L813 352.4L812.3 354.3L809.7 354.7L809.2 356.5L806.9 358L806.2 356.8L805.5 354.3L804.5 350.6L805.4 348.2L806.9 347.2L806.9 346.5L809.6 346L812.6 344L815.5 342.3L818.5 341L819.9 338.4L817.9 338.6L816.8 340.1L812.4 342L811.1 339.8L806.7 340.5L802.5 343.2L803.8 344.3L800.1 344.7L797.6 344.8L797.6 343.7L795.1 343.3L792.9 344.2L787.8 344L782.2 344.5L776.8 347.7L770.2 351.8L772.9 351.9L773.8 353L775.5 353.3L776.5 352.4L778.4 352.6L780.7 354.5L780.9 356L779.5 357.7L779.4 359.7L778.7 362.4L776.2 364.8L775.5 365.9L769.9 370.8L767.5 371.9L766.5 371.9L765.5 371L763.2 372.2L763 372.9L762.7 372.5L762.7 371.7L763.5 371.7L763.8 369.7L763.3 368.2L764.8 367.6L766.9 368L768.1 366.3L768.6 364.4L769.2 363.8L770.1 362.2L767.4 362.7L765.9 363.4L763.3 363.4L762.7 361.9L760.6 360.7L757.8 360L757.1 358.5L756.4 357.3L755.9 356.7L754.7 355L753.4 354.3L750.8 353.8L748.5 354L746.4 354.1L745.1 355L745.9 355.5L745.9 356.4L745.1 357L743.6 358.7L743.6 359.5L741.2 360.5L739.2 359.9L737.2 360L736.3 359.5L735.3 359.4L732.8 360.5L730.6 360.7L729.1 361.2L726.9 360.9L725.3 360.9L724.3 360L722.6 359.2L721 359L718.8 359.2L717.2 359.5L714.9 358.9L714.5 357.5L712.5 357.2L711 357L709.1 356.3L707.3 358L708 359L706.4 360.2L703.9 359.7L702.2 359.7L701 358.9L699.4 358.9L697.8 358.3L695.3 359.2L692.1 360.5L690.3 360.9L689.7 361.1L688.7 360L686.5 360.2L685.8 359.5L684.7 359.2L683.8 358.2L683 357.8L680.4 358.3L678.3 357.3L677.2 358.2L673.5 354L671.3 352.6L672 352.1L667.8 353.8L666.1 353.8L666.3 352.9L664.1 352.3L662.4 352.8L661.9 350.9L658.8 350.6L657.3 351.3L653.1 351.9L652.3 352.4L645.8 352.9L645.1 353.5L646.3 354.7L644.7 355.1L645 355.6L643.4 356.4L646.2 357.5L645.7 358.3L643.3 358.3L642.8 358.9L640.8 357.8L638.1 358L636.2 358.7L634.2 358L630.5 356.8L628 356.8L624.4 358.7L624.2 359.9L622.4 358.9L621.1 360.7L621.5 362.2L620.7 362.4L622 363.6L623.4 363.6L624.4 365.3L624.2 366.8L622.7 367.1L621 368.8L622.5 370.3L622.4 371.5L624.2 373.5L623.2 374.2L622.9 374.6L622.2 374.6L621 373.5L620.5 373.4L619.5 373L619 372.4L617.3 372L616.3 372.3L616.1 372L613.8 371.2L611.2 370.8L609.9 370.6L609.7 370.8L607.5 369.3L605.5 368.6L604.1 367.8L605.3 367.5L606.7 366.1L605.8 365.4L608.2 364.8L608.2 364.3L606.7 364.6L606.9 363.9L609.2 363.2L609.6 362.7L609.2 361.4L609.9 360.9L609.9 360.4L607.4 359.9L606.3 359.9L605.3 359L604 359.4L602 358.7L602 358.3L601.3 357.7L599.9 357.5L599.8 357L600.3 356.7L599.2 355.8L597.4 356L596.9 355.8L596.6 356.2L595.9 356.2L595.4 355.1L595 354.5L595.4 354.3L596.7 354.5L597.4 354L596.9 353.6L595.7 353.3L595.9 353L595.2 352.6L594.2 351.6L594.5 351.1L594.4 350.2L592.7 349.9L591.8 350.1L591.5 349.7L589.8 349.2L589.3 348.2L589.1 347.5Z" fill="#abdda4"/>
<path d="M575.5 352.3L577.5 350.8L580.5 351.4L580.5 352.4L575.5 352.3Z" fill="#abdda4"/>
<path d="M783.1 352.3L784.1 355.1L783.9 356.7L784.6 358.5L786.5 361.4L783.9 360.9L782.9 363.2L784.4 365.1L784.4 366.3L783.1 365.3L782.1 366.5L781.7 365.1L781.9 363.4L781.7 361.6L782.1 360.4L782.2 358.1L781.2 356.5L781.4 354.1L782.9 353.3L782.2 352.6Z" fill="#abdda4"/>
<path d="M629.1 322.7L629.3 323.4L632.3 323.9L636.1 324.9L639.3 324.8L638.2 323.7L635.7 323.2L636.1 321.9L636.1 320.4L639.3 318.7L641.6 317.7L645.5 316.5L651.2 316.3L657.3 315.5L658.5 315L657.3 314.3L651.1 315.1L646.2 315.4L640.9 317L636.1 317.3L636.6 318.2L632.5 319.6L634 319.9L630.7 321.2L630.8 322.2Z" fill="#abdda4" stroke-width="2"/>
<path d="M702.6 310.7L709.3 312.6L717.8 311.9L719.4 310.2L711 308.2L704.2 307L697.5 308.9Z" fill="#abdda4" stroke-width="2.8"/>
<path d="M773.5 317L780.2 319.2L784.4 320.4L796.2 317.5L788.6 316.7L781.9 315.6L776.5 315.6Z" fill="#abdda4" stroke-width="2.8"/>
<path d="M843.8 324.1L846 323.4L846 324.6L844.2 324.6Z" fill="#abdda4" stroke-width="2"/>
<path d="M618.2 308L623.2 309.1L630 308.6L636.7 308.6L645.2 308.2L651.9 307.7L643.5 306.2L635 306.7L626.6 307.5L619.8 307.5Z" fill="#abdda4" stroke-width="2.6"/>
<path d="M559.9 309.6L564.5 309.1L570.9 309L576.8 308L583.9 308.6L588.5 308.9L585.9 309.9L581 310.1L578.5 310.8L574.1 311.4L578.3 312.6L571.9 313.1L571.1 314.5L569 314.5L565.5 313.4L567 312.9L564.5 312.4L561.1 310.9Z" fill="#cdeba7" stroke-width="2.2"/>
<path d="M589.8 323.9L595 325.1L592.8 325.6L594.7 326.6L591.8 327.3L590.5 327.5L591.2 326.3L589 325.6L586.4 326.3L585.6 327.5L583.9 328.3L582.2 327.8L580 328L578 327L577 327.5L576 327.5L575.8 328.6L572.6 328.3L572.1 329.3L570.6 329.3L569.4 330.5L567.7 332.4L565.2 334.7L565.7 335.4L565.2 336.1L563.5 335.9L562.3 337.6L562.5 339.8L563.5 340.6L563 342.7L561.6 343.8L560.8 344.7L559.8 343.7L556.4 345.7L554 346L551.8 345.2L551.1 343.3L550.6 339.4L552.2 338.4L556.7 336.9L559.9 335.2L563.1 332.9L567.2 329.7L569.9 328.3L574.6 326.3L578.3 325.4L581 325.6L583.6 324.3L586.8 324.3Z" fill="#cdeba7" stroke-width="1.8"/>
<path d="M579.7 333.2L578 334.4L578.3 335.4L575.6 336.7L572.2 338.3L571.1 340.6L572.2 341.8L573.9 342.7L572.4 344.6L570.6 345L569.9 347.9L569 349.4L567 349.2L566 350.6L564 350.6L563.5 349.1L562.1 347.2L560.8 344.7L561.6 343.8L563 342.7L563.5 340.6L562.5 339.8L562.3 337.6L563.5 335.9L565.2 336.1L565.7 335.4L565.2 334.7L567.7 332.4L569.4 330.5L570.6 329.3L572.1 329.3L572.6 328.3L575.8 328.6L576 327.5L577 327.5L579.3 328.3L581.9 329.5L582 332L582.5 332.7Z" fill="#6bb4ae" stroke-width="1.4"/>
<path d="M590.5 327.5L590.1 328.6L592.8 329.8L591.3 331.2L593.2 333L592 334.5L593.5 335.7L592.8 336.7L595.4 337.9L594.9 338.8L592.8 340.3L589.6 342L586.6 342.1L583.6 342.7L580.9 343.2L579.8 342.1L578.2 341.6L578.5 340L577.8 338.4L578.5 337.4L580 336.4L583.9 334.5L585.1 334.2L584.9 333.5L582.5 332.7L582 332L581.9 329.5L579.3 328.3L577 327.5L578 327L580 328L582.2 327.8L583.9 328.3L585.6 327.5L586.4 326.3L589 325.6L591.2 326.3Z" fill="#fdb96e"/>
<path d="M555.9 348.7L556.2 347.7L558.1 347.5L560.1 346.7L559.9 347.5L559.5 348.1L559.8 348.6L560.6 348.7L560.3 349.4L559.8 349.2L558.5 350.4L558.9 351.3L557.9 351.6L556.5 351.3L555.9 350.4L555.9 349.4Z" fill="#d9281f" stroke-width="1.5"/>
<path d="M563.1 349.4L563.6 350.2L562.6 351.6L560.8 350.6L560.6 349.9Z" fill="#d9281f" stroke-width="1.5"/>
<path d="M532.6 359.5L536.1 359.4L538 358.9L540.8 358.3L544.6 357.5L543.1 356.7L544 356.7L545.1 355.1L543 354.6L542 353.5L542.5 354.1L540.3 351.9L538.8 349.7L537 349.6L538.7 348.1L538.5 346.7L537 346.7L535.3 346.9L537 345.2L533.8 345.2L532.7 347L531.9 348.2L532.4 349.1L532.7 350.8L534.1 350.4L533.6 351.6L536.1 351.9L537.1 352.9L537 354L534.4 353.8L535.1 355.8L533.3 356.3L536.5 357.3L533.8 357L533.3 358L534.9 359.2Z" fill="#4a96bb" stroke-width="1.5"/>
<path d="M532.6 351.9L531.7 353.1L530.5 352.8L529.4 352.8L529.7 351.9L529.4 351.1L530.9 350.9Z" fill="#4a96bb"/>
<path d="M531.7 353.1L532.1 354.3L530.7 355.8L527.7 356.8L525.4 356.7L526.7 354.8L525.8 353.1L528.2 351.8L529.4 351.1L529.7 351.9L529.4 352.8L530.5 352.8Z" fill="#fff6b6" stroke-width="1.5"/>
<path d="M534.4 361.9L536.6 361.6L539.5 362.1L539 360L540.5 360.9L544.4 359.5L544.9 358.2L546.4 357.8L546.7 358.3L547.4 358.3L548.3 359L549.5 359.9L550.3 359.7L551.8 360.5L552.2 360.7L552.7 360.5L553.5 361.1L555.9 361.4L555 362.6L554.9 363.8L554.4 364L553.5 363.9L553.7 364.3L552.3 365.3L552.3 365.9L553.2 365.8L553.7 366.5L553.7 367L554.2 367.6L553.5 368.1L554 369.4L554.9 369.7L554.7 370.3L553.2 371.3L550 370.8L547.4 371.3L547.2 372.4L545.2 372.7L543.4 371.9L542.7 372.2L539.7 371.5L539 370.8L539.8 369.8L540.2 366.5L538.5 364.6L537.2 363.8L534.6 363.2Z" fill="#fdb96e"/>
<path d="M558.4 372.9L557.7 374.2L557.1 373.9L556.5 372.7L558.1 371.5Z" fill="#fdb96e" stroke-width="1.5"/>
<path d="M527 373.4L527 372.2L526.3 371.5L528.7 370.3L530.8 370.5L533.1 370.5L534.9 370.8L536.3 370.7L539 370.8L539.7 371.5L542.7 372.2L543.4 371.9L545.2 372.7L547.2 372.4L547.3 373.4L545.7 374.6L543.6 374.9L543.4 375.4L542.4 376.4L541.7 377.8L542.4 378.8L541.4 379.4L541 380.6L539.8 381L538.7 382.2L536.5 382.2L534.8 382.2L533.8 382.8L533.1 383.4L532.2 383.3L531.7 382.7L531.2 381.8L529.6 381.5L529.5 381L530 380.3L530.4 379.8L529.7 379.3L530.2 378.3L529.5 377.3L530.2 377.1L530.4 376.2L530.6 376.1L530.6 374.7L531.4 374.2L530.9 373.4L530 373.4L529.7 373.5L528.7 373.5L528.2 372.7Z" fill="#86caa5"/>
<path d="M527 373.4L528.2 372.7L528.7 373.5L529.7 373.5L530 373.4L530.9 373.4L531.4 374.2L530.6 374.7L530.6 376.1L530.4 376.2L530.2 377.1L529.5 377.3L530.2 378.3L529.7 379.3L530.4 379.8L530 380.3L529.5 381L529.6 381.5L528.9 382L528 381.6L527.2 381.8L527.4 380.5L527.3 379.4L526.5 379.3L526.2 378.8L526.3 377.6L526.9 376.9L527 376.2L527.3 375.2L527.3 374.6Z" fill="#9bd3a6"/>
<path d="M558.9 351.3L558.9 351.9L560.7 352.3L560.6 352.9L562.4 352.6L563.3 352.1L565.2 352.8L566 353.3L566.4 354.3L566 354.7L566.5 355.3L567 356.2L566.8 356.8L567.5 357.8L566.8 358L566.3 357.8L566 358.2L564.7 358.5L564.1 358.9L562.8 359.2L563.1 359.8L563.3 360.5L564.1 360.9L565.2 361.6L564.5 362.4L564 362.6L564.1 363.8L563.5 363.6L562.6 363.6L561.4 363.9L559.9 363.8L559.8 364.3L558.9 363.8L558.4 363.9L556.5 363.4L556.2 363.8L554.9 363.8L555 362.6L555.9 361.4L553.5 361.1L552.7 360.5L552.7 359.9L552.3 359.5L552.7 358.3L552.3 356.5L553.3 356.6L553.7 356L554.2 354.5L553.8 353.8L554.2 353.5L555.5 353.4L555.9 353.8L557.1 352.9L556.7 352.3L556.5 351.3L557.9 351.6Z" fill="#fdb96e"/>
<path d="M552.4 353.8L553.8 353.8L554.2 354.5L553.7 356L553.3 356.6L552.3 356.5L552.7 358.3L551.7 358L550.6 357.2L549 357.5L547.8 357.4L548.6 357L550.1 354.5Z" fill="#d9281f"/>
<path d="M547.8 357.4L549 357.5L550.6 357.2L551.7 358L552.7 358.3L552.3 359.5L552 359.5L551.8 360.5L550.3 359.7L549.5 359.9L548.3 359L547.4 358.3L546.7 358.3L546.4 357.8Z" fill="#ebf7b1"/>
<path d="M558.4 363.9L558.4 364.2L558.2 364.6L558.9 364.9L559.8 364.9L559.8 365.6L558.9 365.9L557.7 365.8L557.3 366.5L556.5 366.5L556.2 366.1L555.4 366.8L554.5 366.8L553.7 366.5L553.2 365.8L552.3 365.9L552.3 365.3L553.7 364.3L553.5 363.9L554.4 364L554.9 363.8L556.2 363.8L556.5 363.4Z" fill="#d9281f"/>
<path d="M570.9 362.9L570.7 363.6L569.7 363.6L570.1 363.9L569.5 365L569.2 365.3L567.7 365.3L566.8 365.8L565.5 365.6L563.1 365.1L562.7 364.6L561.1 364.9L560.8 365.2L559.8 364.9L558.9 364.9L558.2 364.6L558.4 364.2L558.4 363.9L558.9 363.8L559.8 364.3L559.9 363.8L561.4 363.9L562.6 363.6L563.5 363.6L564.1 363.8L564 362.6L564.5 362.4L565.2 361.6L566.3 362.1L567.4 361.5L567.9 361.4L569.2 361.9L570.1 361.7L570.8 362.1Z" fill="#d9281f"/>
<path d="M570.8 362.1L570.1 361.7L569.2 361.9L567.9 361.4L567.4 361.5L566.3 362.1L565.2 361.6L564.1 360.9L563.3 360.5L563.1 359.8L562.8 359.2L564.1 358.9L564.7 358.5L566 358.2L566.3 357.8L566.8 358L567.5 357.8L568.4 358.3L569.5 358.5L569.5 359L570.4 359.4L570.7 358.9L571.8 359L572 359.7L573.3 359.7L574 360.5L573.5 360.5L573.3 360.9L572.9 360.9L572.8 361.4L572.4 361.4L571.7 361.7L571.1 361.7Z" fill="#c8322a"/>
<path d="M567.5 357.8L566.8 356.8L567 356.2L566.5 355.3L566 354.7L566.4 354.3L566 353.3L567.2 352.9L569.9 352.1L571.9 351.5L573.6 351.8L573.8 352.3L575.5 352.3L577.5 352.4L580.5 352.4L581.9 353.1L581.9 353.8L582.4 354.5L582.4 355.1L581.4 355.5L581.9 356.3L581.9 357L582.7 358.5L582.5 359L581.7 359.2L580.2 360.5L580.7 361.4L580.3 361.2L578.7 360.5L577.5 360.9L576.6 360.7L575.6 361.1L574.8 360.4L574.1 360.7L574 360.5L573.3 359.7L572 359.7L571.8 359L570.7 358.9L570.4 359.4L569.5 359L569.5 358.5L568.4 358.3Z" fill="#b9e3a6"/>
<path d="M574 360.5L574.1 360.7L574.8 360.4L575.6 361.1L576.6 360.7L577.5 360.9L578.7 360.5L580.3 361.2L579.8 361.7L579.5 362.4L579.2 362.6L577.3 362.1L576.8 362.1L576.3 362.6L575.6 362.7L575.5 362.6L574.6 362.9L573.9 362.9L573.8 363.2L572.4 363.4L571.7 363.2L570.9 362.9L570.8 362.1L571.1 361.7L571.7 361.7L572.4 361.4L572.8 361.4L572.9 360.9L573.3 360.9L573.5 360.5Z" fill="#6bb4ae"/>
<path d="M569.5 365L570.1 363.9L569.7 363.6L570.7 363.6L570.9 362.9L571.7 363.2L572.4 363.4L573.8 363.2L573.9 362.9L574.6 362.9L575.5 362.6L575.6 362.7L576.3 362.6L576.8 362.1L577.3 362.1L579.2 362.6L579.5 362.4L580.3 362.8L580.5 363.2L579.5 363.6L578.7 364.8L577.6 365.9L576.3 366.3L575.3 366.1L573.9 366.6L573.4 366.8L571.9 366.5L570.7 365.8L570.2 365.6L569.9 365.1Z" fill="#f58b51"/>
<path d="M565.5 365.6L566.8 365.8L567.7 365.3L569.2 365.3L569.5 365L569.9 365.1L570.2 365.6L568.9 366.1L568.7 366.8L568 367L568 367.4L567.4 367.3L566.8 367.1L566.5 367.3L565.3 367.3L565.7 367.1L565.3 366.5L564.8 365.9Z" fill="#fdb96e"/>
<path d="M573.9 366.6L574.4 367.3L574.9 367.8L574.3 368.3L573.5 368L572.4 368L570.9 367.8L570.1 367.8L569.7 368.1L569.1 367.8L568.8 368.5L569.5 369.2L570.1 369.8L570.7 370.3L571.4 370.8L572.1 371.5L573.6 372.1L573.4 372.4L571.7 371.8L570.7 371.2L569.2 370.7L567.9 369.5L568.2 369.3L567.4 368.6L567.4 368L566.3 367.8L565.7 368.5L565.3 368L565.3 367.3L566.5 367.3L566.8 367.1L567.4 367.3L568 367.4L568 367L568.7 366.8L568.9 366.1L570.2 365.6L570.7 365.8L571.9 366.5L573.4 366.8Z" fill="#d9281f"/>
<path d="M574.3 368.3L574.9 368.3L574.4 369.2L575.3 369.8L575 370.5L574.6 370.7L574.3 370.8L573.8 371.2L573.5 372.1L572.1 371.5L571.4 370.8L570.7 370.3L570.1 369.8L569.5 369.2L568.8 368.5L569.1 367.8L569.7 368.1L570.1 367.8L570.9 367.8L572.4 368L573.5 368Z" fill="#4a96bb"/>
<path d="M577.5 367.5L578.5 367.8L578.7 368.5L579.5 369L580.2 369.2L580.5 368.8L580.2 369.5L580 369.8L580.5 370.2L580 370.5L581 371.2L580.3 371.7L580 372.2L580.2 372.4L580 372.7L579.2 372.7L578.7 372.8L578.5 372.7L578.8 372L578.7 372.5L577.3 371L576.5 371.7L576.8 371.7L576.5 371.9L576 372.2L574.8 371.2L575 370.5L575.3 369.8L574.4 369.2L574.9 368.3L574.3 368.3L574.9 367.8L574.4 367.3L573.9 366.6L575.3 366.1L576.3 366.3Z" fill="#2f7fba"/>
<path d="M575.6 372.4L575.5 372L574.8 372.9L574.9 373.4L574.6 373.3L574.1 372.7L573.3 372.4L573.5 372.1L573.8 371.2L574.3 370.8L574.6 370.7L575.1 370.9L575.3 371.2L575.9 371.3L576.5 371.7L576.1 372.2Z" fill="#ebf7b1"/>
<path d="M577.3 371L578.7 372.5L578.8 372L578.5 372.7L578.7 372.8L578.3 372.9L577.1 373.5L577 373.4L576.8 372.9L576.5 372.7L576.1 372.2L576.5 371.9L576.8 371.7L577 371.2Z" fill="#fdb96e"/>
<path d="M577.6 375.2L577.6 375.6L577.1 375.9L577 376.4L576.2 377.3L575.9 377.1L575.9 376.7L574.9 376.2L574.8 375.4L574.9 374.2L575.1 373.7L574.9 373.4L574.8 372.9L575.5 372L575.6 372.4L576.1 372.2L576.5 372.7L576.8 372.9L577 373.4L576.8 374L577 374.7Z" fill="#d9281f"/>
<path d="M577 374.7L576.8 374L577 373.4L577.1 373.5L578.3 372.9L578.7 372.8L579.2 372.7L580 372.7L580.9 373.2L580.9 374.4L580.7 374.4L580.3 374.7L579.5 374.6L578.8 375.1L577.6 375.2Z" fill="#fdb96e"/>
<path d="M586.6 373.5L587.1 373.9L586.3 374.4L586.3 375.2L585.1 375.1L584.2 375L582.2 375.4L583.4 376.4L582.5 376.6L581.5 376.6L580.7 375.7L580.3 376.1L580.8 377.1L581.6 377.9L581 378.3L581.9 379.1L582.7 379.6L582.7 380.5L581.2 380.1L581.7 381L580.7 381.1L581.3 382.7L580.2 382.7L578.8 381.9L578.2 380.6L577.8 379.4L577.1 378.6L576.3 377.8L576.2 377.3L577 376.4L577.1 375.9L577.6 375.6L577.6 375.2L578.8 375.1L579.5 374.6L580.3 374.7L580.7 374.4L580.9 374.4L582.2 374.4L583.6 373.9L584.7 374.6L586.3 374.4L586.3 373.5Z" fill="#2f7fba" stroke-width="1.5"/>
<path d="M582.2 383.8L583 384.3L584.4 384.3L585.8 384.4L585.6 384.7L586.6 384.5L586.4 385L583.9 385.2L583.9 384.9L581.9 384.5Z" fill="#2f7fba" stroke-width="1.6"/>
<path d="M580.5 369.5L580.9 370.2L581.5 370L582.9 370.3L585.4 370.3L586.3 369.8L588.1 369.5L589.4 370.2L590.5 370.3L589.5 371L589 372.2L589.5 373.2L587.9 373L586.3 373.5L586.3 374.4L584.7 374.6L583.6 373.9L582.2 374.4L580.9 374.4L580.9 373.2L580 372.7L580.2 372.4L580 372.2L580.3 371.7L581 371.2L580 370.5L580.5 370.2L580 369.8Z" fill="#d9281f"/>
<path d="M580.5 363.2L581.2 362.9L582.4 363.1L583.4 363.1L584.2 363.6L584.7 363.2L585.9 363.1L586.4 362.7L587.1 362.7L587.6 362.9L588.1 363.4L588.7 364.1L589.6 365.1L589.8 367.3L590.6 367.6L591.4 367.3L592.2 367.6L592.2 368.1L591.3 368.5L590.8 368.3L590.5 370.3L589.4 370.2L588.1 369.5L586.3 369.8L585.4 370.3L582.9 370.3L581.5 370L580.9 370.2L580.5 369.5L580.2 369.2L580.5 368.8L580.2 369.2L579.5 369L578.7 368.5L578.5 367.8L577.5 367.5L577.3 367L576.3 366.3L577.6 365.9L578.7 364.8L579.5 363.6Z" fill="#abdda4"/>
<path d="M587.1 362.7L587.6 362.4L588.6 362.2L590 362.7L590.6 362.9L591.3 363.3L591.2 363.9L591.8 364.2L592.2 364.9L592.7 365.3L592.5 365.6L592.8 365.8L592.5 365.9L591.5 365.8L591.3 365.6L591 365.9L590.6 366.6L590.3 367.1L589.8 367.3L589.6 365.1L588.7 364.1L588.1 363.4L587.6 362.9Z" fill="#fdb96e"/>
<path d="M595.9 356.2L596.6 356.2L596.9 355.8L597.4 356L599.2 355.8L600.3 356.7L599.8 357L599.9 357.5L601.3 357.7L602 358.3L602 358.7L604 359.4L605.3 359L606.3 359.9L607.4 359.9L609.9 360.4L609.9 360.9L609.2 361.4L609.6 362.7L609.2 363.2L606.9 363.9L606.7 364.6L605.3 364.8L604.3 365.3L602.6 365.4L601.3 365.9L601.3 367L602.1 367.5L603.8 367.3L603.5 368L601.6 368.3L599.4 369.2L598.4 368.8L598.7 368.1L597.1 367.6L597.2 367.3L598.9 366.7L598.4 366.3L595.7 365.9L595.7 365.3L594.1 365.4L593.5 366.5L592.2 367.6L591.4 367.3L590.6 367.6L589.8 367.3L590.3 367.1L590.6 366.6L591 365.9L591.3 365.6L591.5 365.8L592.5 365.9L592.8 365.8L592.5 365.6L592.7 365.3L592.2 364.9L591.8 364.2L591.2 363.9L591.3 363.3L590.6 362.9L590 362.7L588.6 362.2L587.6 362.4L587.1 362.7L586.4 362.7L585.9 363.1L584.7 363.2L584.2 363.6L583.4 363.1L582.4 363.1L581.2 362.9L580.5 363.2L580.3 362.8L579.5 362.4L579.8 361.7L580.3 361.2L580.7 361.4L580.2 360.5L581.7 359.2L582.5 359L582.7 358.5L581.9 357L582.7 357L583.6 356.5L584.9 356.5L586.6 356.7L588.5 357L589.8 357L590.5 357.3L591.1 357L591.6 357.3L593.2 357.3L593.8 357.5L593.9 356.7L594.4 356.3L595.9 356.2Z" fill="#4a96bb"/>
<path d="M581.9 353.1L583.5 353.1L585.2 352.4L585.8 351.5L587.1 350.9L586.9 350.2L587.9 349.9L589.8 349.2L591.5 349.7L591.8 350.1L592.7 349.9L594.4 350.2L594.5 351.1L594.2 351.6L595.2 352.6L595.9 353L595.7 353.3L596.9 353.6L597.4 354L596.7 354.5L595.4 354.3L595 354.5L595.4 355.1L595.9 356.2L594.4 356.3L593.9 356.7L593.8 357.5L593.2 357.3L591.6 357.3L591.1 357L590.5 357.3L589.8 357L588.5 357L586.6 356.7L584.9 356.5L583.6 356.5L582.7 357L581.9 357L581.9 356.3L581.4 355.5L582.4 355.1L582.4 354.5L581.9 353.8Z" fill="#ec6541"/>
<path d="M580.5 352.4L580.4 351.9L580.6 351.5L579.8 351.3L578.2 350.9L577.7 349.6L579.7 349.1L582.5 349.1L584.2 348.9L584.4 349.2L585.2 349.4L586.9 350.2L587.1 350.9L585.8 351.5L585.2 352.4L583.5 353.1L581.9 353.1Z" fill="#fdb96e"/>
<path d="M577.7 349.6L577.8 348.2L578.7 347.2L580.2 346.6L581.5 347.9L582.9 347.9L583.2 346.5L584.7 346.2L585.4 346.4L586.9 347L588.3 347L589.1 347.5L589.3 348.2L589.8 349.2L587.9 349.9L586.9 350.2L585.2 349.4L584.4 349.2L584.2 348.9L582.5 349.1L579.7 349.1Z" fill="#d9281f"/>
<path d="M583.2 346.5L583.4 345.5L582.9 345.7L581.7 345.2L581.5 344.2L583.7 343.7L585.9 343.5L587.6 343.8L589.4 343.7L589.6 344L588.5 345L589 346.5L588.3 347L586.9 347L585.4 346.4L584.7 346.2Z" fill="#cdeba7"/>
<path d="M554 369.4L553.5 368.1L554.2 367.6L553.7 367L553.7 366.5L554.5 366.8L555.4 366.8L556.2 366.1L556.5 366.5L557.3 366.5L557.7 365.8L558.9 365.9L559.8 365.6L559.8 364.9L560.8 365.2L561.1 364.9L562.7 364.6L563.1 365.1L565.5 365.6L564.8 365.9L565.3 366.5L565.7 367.1L564.3 367L563 367.5L563.1 368.3L563 368.8L563.5 369.7L565 370.5L565.8 371.9L567.7 373.3L569 373.3L569.5 373.7L569 374L570.6 374.6L571.7 375.1L573.3 375.9L573.4 376.2L573.1 376.9L572.1 376.1L570.7 375.9L569.9 376.9L571.2 377.6L571 378.4L570.2 378.6L569.4 380L568.7 380.1L568.7 379.6L569 378.7L569.4 378.3L568.7 377.4L568.2 376.5L567.5 376.2L567 375.6L565.9 375.2L565.2 374.6L564 374.5L562.6 373.7L561.1 372.6L559.9 371.7L559.4 370L558.6 369.8L557.2 369.2L556.4 369.5L555.5 370.2L554.7 370.3L554.9 369.7Z" fill="#fff6b6"/>
<path d="M568.4 379.6L567.9 381L568 381.5L567.7 382.3L566.3 381.6L565.5 381.5L563.1 380.6L563.5 379.8L565.3 380L568.4 379.6Z" fill="#fff6b6" stroke-width="1.5"/>
<path d="M557.7 374.6L558.7 375.7L558.6 377.9L557.7 377.9L557.1 378.4L556.4 377.9L556.4 375.9L556 374.9L556.9 375.1Z" fill="#fff6b6" stroke-width="1.5"/>
<path d="M604.5 374.4L606.9 375L608.9 374.7L610.4 374.9L612.3 374L614.1 373.9L615.8 374.7L616.1 375.4L615.9 376.2L617.1 376.6L617.8 377.1L616.6 377.6L617.1 379.4L616.8 380L617.8 381.3L617 381.7L616.3 381.1L614.4 381L613.7 381.3L611.7 381.5L610.9 381.5L608.9 382.2L607.5 382.2L606.7 381.8L604.8 382.3L604.1 382.8L604.1 382L603.2 383.7L602.6 382.8L603.3 382.2L602.2 382.3L600.8 382L599.6 383L597.1 383.2L595.7 382.3L593.9 382.2L593.5 382.8L592.3 383.2L590.6 382.2L588.8 382.2L587.8 380.5L586.6 379.6L587.4 378.3L586.4 377.4L588.3 375.9L590.8 375.7L591.5 374.6L594.7 374.7L596.7 373.7L598.7 373.2L601.6 373.2L604.5 374.4Z" fill="#4a96bb"/>
<path d="M586.3 373.5L587.9 373L589.5 373.2L589.6 373.9L591.2 374.4L590.8 374.8L588.8 374.9L588.1 375.4L586.8 376.3L586.1 375.6L586.2 375.2L586.6 375.1L587.1 373.9Z" fill="#4a96bb"/>
<path d="M596.7 384.9L597.9 385.7L599.6 385L600.6 383.8L599.1 384.3L597.7 384.3Z" fill="#fdb96e" stroke-width="1.5"/>
<path d="M609.7 370.8L609.9 370.6L611.2 370.8L613.8 371.2L616.1 372L616.3 372.3L617.3 372L619 372.4L619.5 373L620.5 373.4L620 373.7L620.9 374.6L620.7 374.8L619.8 374.7L618.5 374.2L618.1 374.5L615.8 374.7L614.1 373.9L612.3 374L612.6 373.3L612.2 372.1L611.2 371.5L610.2 371.3Z" fill="#d9281f"/>
<path d="M615.8 374.7L618.1 374.5L618.5 374.9L619.2 375.2L618.8 375.6L619.7 376.2L619.2 376.7L619.8 377.3L620.7 377.4L620.7 378.6L620 378.8L619.3 377.8L619.3 377.4L618.7 377.4L618.2 377.1L617.8 377.1L617.1 376.6L615.9 376.2L616.1 375.4Z" fill="#d9281f"/>
<path d="M620.5 373.4L621 373.5L622.2 374.6L622.9 374.6L623.2 374.2L624.2 373.5L625.1 374.4L625.9 375.6L626.8 375.7L627.3 376.1L625.9 376.2L625.6 377.6L625.2 378.3L624.7 378.6L624.7 379.4L624.2 379.4L623.2 378.6L623.9 377.8L623.3 377.3L622.7 377.4L620.7 378.6L620.7 377.4L619.8 377.3L619.2 376.7L619.7 376.2L618.8 375.6L619.2 375.2L618.5 374.9L618.1 374.5L618.5 374.2L619.8 374.7L620.7 374.8L620.9 374.6L620 373.7Z" fill="#d9281f"/>
<path d="M532.2 383.7L533.4 383.8L534.4 384.5L536.1 384.3L537.8 384.7L538.5 384.7L539.2 385.9L539.3 386.9L539.8 388.6L540.3 389L540 389.6L537.8 389.9L537 390.6L536 390.8L536 391.9L533.9 392.6L533.4 393.5L531.9 394L530.2 394.1L527.5 395.5L527.5 397.4L520 397.4L520.9 396.8L522.5 396.7L523.8 395.5L524.6 395L526 393.6L525.7 391.4L526.3 390.1L526.5 389.1L527.5 388.1L529.3 387.2L530.6 386.5L531.7 384.9Z" fill="#ebf7b1"/>
<path d="M527.5 397.4L520 397.4L518.9 399.2L517.9 399.8L517.2 400.9L517.2 401.7L516.7 402.7L516.2 402.9L515.2 404.1L514.7 405.3L514.7 405.8L514.2 406.6L513.5 407.1L513.4 408.7L513.8 408.1L520.3 408.1L520.1 405.6L520.4 404.8L522.1 404.6L521.9 400.4L527.5 400.4Z" fill="#3f8cba"/>
<path d="M539.2 385.9L538.5 384.7L540.2 383.8L542 383.5L543 382.8L544.7 382.3L547.6 382L550.3 381.8L551.1 382.2L552.8 381.5L554.5 381.5L555.2 381.8L556.4 381.8L556 382.7L556.4 384.2L555.9 385.5L554.9 386.5L555 387.9L556.4 388.9L556.4 389.2L557.6 389.9L558.2 393L558.7 394.5L558.8 395.2L558.6 396.7L558.7 397.3L558.4 398.4L558.6 399.4L557.9 400L558.9 401.2L559 402.1L559.6 402.9L560.4 402.6L561.8 403.4L562.5 404.4L556.7 407.6L551.8 411L549.5 411.7L547.5 411.9L547.5 410.8L546.8 410.6L545.7 410.2L545.2 409.3L539.6 405.6L533.9 402L527.5 397.8L527.5 397.3L527.5 395.5L530.2 394.1L531.9 394L533.4 393.5L533.9 392.6L536 391.9L536 390.8L537 390.6L537.8 389.9L540 389.6L540.3 389L539.8 388.6L539.3 386.9Z" fill="#d9281f"/>
<path d="M558.2 393L557.6 389.9L556.4 389.2L556.4 388.9L555 387.9L554.9 386.5L555.9 385.5L556.4 384.2L556 382.7L556.4 381.8L558.2 381.1L559.4 381.3L559.4 382.2L560.8 381.5L560.9 381.8L560.1 382.7L560.1 383.5L560.6 383.8L560.4 385.4L559.3 386.2L559.7 387L560.5 387L560.9 387.9L561.6 388.2L561.4 389.4L560.6 389.9L560.1 390.4L559 391.1L559.2 391.8L559 392.6Z" fill="#4a96bb"/>
<path d="M562.5 404.4L561.8 403.4L560.4 402.6L559.6 402.9L559 402.1L558.9 401.2L557.9 400L558.6 399.4L558.4 398.4L558.7 397.3L558.6 396.7L558.8 395.2L558.7 394.5L558.2 393L559 392.6L559.2 391.8L559 391.1L560.1 390.4L560.6 389.9L561.4 389.4L561.6 388.2L563.6 388.7L564.3 388.6L565.7 388.9L567.9 389.6L568.7 391.1L570.2 391.4L572.6 392.1L574.4 393L575.3 392.6L576 391.8L575.6 390.5L576.1 389.7L577.4 388.9L578.5 388.7L580.9 389.1L581.4 389.7L582 389.7L582.5 390.1L584.2 390.3L584.7 390.8L584.1 391.6L584.3 392.3L583.9 393.5L584.4 394.8L584.4 400.7L584.4 407L584.4 410.3L582.5 410.3L582.4 411L575.7 407.8L569 404.6L567.3 405.5L566 406.1L565.2 405.3Z" fill="#fff6b6"/>
<path d="M584.4 407L584.4 400.7L584.4 394.8L583.9 393.5L584.3 392.3L584.1 391.6L584.7 390.8L586.9 390.8L588.6 391.3L590.2 391.8L591 391.9L592.3 391.4L593 390.9L594.5 390.8L595.7 391.1L596.1 391.9L596.6 391.3L597.9 391.8L599.3 391.8L600.1 391.4L601.1 394.3L600.6 395L600.3 396.3L599.8 397.2L599.4 397.4L598.9 396.9L598.1 396.2L596.9 393.7L596.7 393.9L597.4 395.7L598.5 397.3L599.8 400L600.4 400.9L600.9 401.9L602.5 403.8L602.1 404L602.1 405.1L604.1 406.6L604.5 407L597.7 407L591.2 407Z" fill="#fdb96e"/>
<path d="M513.5 408L513.5 409L514.7 410.2L514.5 411L514.8 411.9L514.9 413.5L514.7 415.1L514.3 415.9L514.7 416.9L514.4 416.9L515 416.2L515.9 416.4L516.7 416.1L517.6 416.1L518.4 416.6L519.6 417.1L520.6 418.3L521.6 419.5L522.3 419.1L522.5 418.1L523 418.1L524.2 418.6L525.2 418.3L525.8 418.3L526.1 417.9L532.9 417.9L533.3 416.8L532.9 416.6L531.3 402L533.9 402L527.5 397.8L527.5 400.4L521.9 400.4L522.1 404.6L520.4 404.8L520.1 405.6L520.3 408.1L513.8 408.1L513.4 408.7Z" fill="#ebf7b1"/>
<path d="M521.6 419.5L522.3 419.1L522.5 418.1L523 418.1L524.2 418.6L525.2 418.3L525.8 418.3L526.1 417.9L532.9 417.9L533.3 416.8L532.9 416.6L531.3 402L533.9 402L539.6 405.6L545.2 409.3L545.7 410.2L546.8 410.6L547.5 410.8L547.5 411.9L549.5 411.7L549.4 415.7L548.4 416.8L548.3 417.8L546.8 418.1L544.6 418.3L543.9 418.8L541.7 418.9L541.4 418.6L540.3 418.8L538.8 419.5L538.5 420.1L537.2 420.8L537 421.3L536.3 421.6L535.4 421.3L534.9 421.8L534.8 423L533.4 424.4L533.4 424.9L532.9 425.6L533.1 426.5L532.4 426.9L532 427.1L531.7 426.4L531.2 426.5L530.9 426.5L530.6 427.1L529.4 427L528.9 426.7L528.6 426.9L528.2 425.9L528 425.7L527.7 425.9L528 424.9L527.3 424.2L526.8 423.3L526.5 423.3L525.5 423.7L525 424.2L524.3 424L523.8 423.5L523.6 423.5L523.1 423.7L522.8 423.7L522.8 423.2L522.8 422.6L522.7 422L522.1 421.5L521.8 420.5L521.6 419.5Z" fill="#f6fbbd"/>
<path d="M514 421.1L513.3 419.8L512.5 419.3L513.2 418.9L514 417.8L514.4 416.9L515 416.2L515.9 416.4L516.7 416.1L517.6 416.1L518.4 416.6L519.6 417.1L520.6 418.3L521.6 419.5L521.8 420.5L522.1 421.5L522.7 422L522.8 422.6L522.8 423.2L522.5 423.2L521.6 423.1L521.4 423.3L521.1 423.3L519.9 422.8L519.1 422.8L516 422.8L515.5 423L514.9 422.9L514 423.2L513.8 421.9L515.4 422L515.7 421.6L516 421.6L516.7 421.3L517.4 421.6L518.1 421.6L518.9 421.3L518.5 420.8L517.9 421.1L517.4 421.1L516.7 420.6L516.2 420.7L515.9 421.1L514 421.1Z" fill="#abdda4"/>
<path d="M514 421.1L515.9 421.1L516.2 420.7L516.7 420.6L517.4 421.1L517.9 421.1L518.5 420.8L518.9 421.3L518.1 421.6L517.4 421.6L516.7 421.3L516 421.6L515.7 421.6L515.4 422L513.8 421.9Z" fill="#d9281f" stroke-width="0.8"/>
<path d="M514 423.2L514.9 422.9L515.5 423L516 422.8L519.1 422.8L519.1 423.5L518.9 424.2L517.9 424.7L517.4 424.7L516.7 425.5L515.8 424.7L515 424.7L514.7 424.2L514.7 423.9L514.2 423.5Z" fill="#cdeba7"/>
<path d="M519.1 422.8L519.9 422.8L521.1 423.3L521.4 423.3L521.6 423.1L522.5 423.2L522.8 423.2L522.8 423.7L523.1 423.7L523.6 423.5L523.8 423.5L524.3 424L525 424.2L525.5 423.7L526.5 423.3L526.8 423.3L527.3 424.2L528 424.9L527.7 425.9L528 425.7L528.2 425.9L528.6 426.9L528.4 427.1L528.2 427.6L528.5 428.2L529 429.6L528.4 429.8L528.2 430.1L528.4 430.4L528.2 431.1L528 431.1L527.5 431.1L527.2 431.8L526.7 431.8L526.3 431.4L526.5 430.8L525.7 429.8L525.3 429.9L525 429.9L524.5 430L524.5 429.4L524.2 428.9L524.3 428.4L524 427.7L523.5 427.1L522.1 427.2L521.7 427.5L521.3 427.5L520.9 427.9L520.8 428.4L519.8 429.1L519.1 428.1L518.4 427.4L518.1 427.2L517.6 426.9L517.4 426.1L517.2 425.7L516.7 425.5L517.4 424.7L517.9 424.7L518.9 424.2L519.1 423.5Z" fill="#fee09b"/>
<path d="M519.8 429.1L520.8 428.4L520.9 427.9L521.3 427.5L521.7 427.5L522.1 427.2L523.5 427.1L524 427.7L524.3 428.4L524.2 428.9L524.5 429.4L524.5 430L525 429.9L524.1 430.8L523.4 431.6L523.3 432.1L522.9 432.6L522.5 432.5L521.3 431.8L520.3 430.9L520.1 430.3Z" fill="#cdeba7"/>
<path d="M528 431.1L527.9 431.6L528 432.5L527.7 433.1L528.2 433.6L528.7 433.8L529.4 434.5L529.5 435.2L529.4 435.3L529.2 436.7L528.7 436.7L527 436L525.5 434.6L524 433.8L522.9 432.6L523.3 432.1L523.4 431.6L524.1 430.8L525 429.9L525.3 429.9L525.7 429.8L526.5 430.8L526.3 431.4L526.7 431.8L527.2 431.8L527.5 431.1Z" fill="#ebf7b1"/>
<path d="M537.4 435.7L536.6 435.7L535.4 435.3L534.4 435.3L532.4 435.7L531.2 436.2L529.5 436.8L529.2 436.7L529.4 435.3L529.5 435.2L529.4 434.5L528.7 433.8L528.2 433.6L527.7 433.1L528 432.5L527.9 431.6L528 431.1L528.2 431.1L528.4 430.4L528.2 430.1L528.4 429.8L529 429.6L528.5 428.2L528.2 427.6L528.4 427.1L528.6 426.9L528.9 426.7L529.4 427L530.6 427.1L530.9 426.5L531.2 426.5L531.7 426.4L532 427.1L532.4 426.9L533.1 426.5L533.8 427L534.1 427.6L534.9 427.9L535.5 427.5L536.3 427.4L537.5 427.9L537.9 430.3L537.2 431.6L536.8 433.6L537.5 435Z" fill="#fdb96e"/>
<path d="M537.5 427.9L536.3 427.4L535.5 427.5L534.9 427.9L534.1 427.6L533.8 427L533.1 426.5L532.9 425.6L533.4 424.9L533.4 424.4L534.8 423L534.9 421.8L535.4 421.3L536.3 421.6L537 421.3L537.2 420.8L538.5 420.1L538.8 419.5L540.3 418.8L541.4 418.6L541.7 418.9L542.8 418.9L542.7 419.8L542.9 420.5L543.9 421.6L543.9 422.4L545.9 422.8L545.8 424L545.5 424.5L544.6 424.6L544.2 425.4L543.7 425.5L542.2 425.5L541.5 425.4L540.9 425.7L540.2 425.5L537.3 425.6L537.2 426.5L537.5 427.9Z" fill="#f58b51"/>
<path d="M544 434.1L541.4 435.2L540.4 435.7L538.9 436.2L537.4 435.7L537.5 435L536.8 433.6L537.2 431.6L537.9 430.3L537.5 427.9L537.2 426.5L537.3 425.6L540.2 425.5L540.9 425.7L541.5 425.4L542.2 425.5L542.1 426L542.8 426.9L542.8 428.1L543 429.4L543.4 430.1L543 431.6L543.2 432.5L543.6 433.5Z" fill="#fee09b"/>
<path d="M545.4 433.7L544 434.1L543.6 433.5L543.2 432.5L543 431.6L543.4 430.1L543 429.4L542.8 428.1L542.8 426.9L542.1 426L542.2 425.5L543.7 425.5L543.5 426.4L544 426.9L544.6 427.6L544.7 428.4L545 428.7L544.9 432.6Z" fill="#c8322a"/>
<path d="M546.8 433.5L545.4 433.7L544.9 432.6L545 428.7L544.7 428.4L544.6 427.6L544 426.9L543.5 426.4L543.7 425.5L544.2 425.4L544.6 424.6L545.5 424.5L545.8 424L546.4 423.5L547 423.5L548.3 424.4L548.2 425L548.6 426L548.3 426.7L548.4 427.1L547.6 428.2L547.1 428.7L546.8 429.8L546.8 430.8Z" fill="#f58b51"/>
<path d="M546.8 433.5L546.8 430.8L546.8 429.8L547.1 428.7L547.6 428.2L548.4 427.1L548.3 426.7L548.6 426L548.2 425L548.3 424.4L548.4 422.9L548.9 422.2L549.1 421.3L549.6 420.9L551.3 420.7L553.1 421.3L553.7 422L554.5 422L555.4 421.6L557.4 422.5L558.2 422.4L559.2 421.6L560.3 421.7L560.8 421.5L561.6 421.6L563 422.1L564.3 421.1L564.7 421.2L565.8 423.1L566.2 423L566.8 423.7L566.6 424L566.5 424.6L565.1 425.9L564.7 426.9L564.4 427.9L564.1 428.2L563.7 429.4L562.8 430.1L562.6 430.9L562.1 431.6L562 432.3L560.9 432.9L559.9 432.2L559.2 432.2L558.2 433.2L557.7 433.2L557 434.8L556.5 436L554.8 436.7L554.2 436.6L553.5 436.9L552.2 436.9L551.2 435.8L550.7 434.6L549.5 433.5Z" fill="#cdeba7"/>
<path d="M545.8 424L545.9 422.8L543.9 422.4L543.9 421.6L542.9 420.5L542.7 419.8L542.8 418.9L543.9 418.8L544.6 418.3L546.8 418.1L548.3 417.8L548.4 416.8L549.4 415.7L549.5 411.7L551.8 411L556.7 407.6L562.5 404.4L565.2 405.3L566 406.1L567.3 405.5L567.7 408.1L568.3 408.6L568.4 409.2L569 409.7L568.7 410.4L568 413.9L567.9 416.1L565.8 417.6L565.1 419.8L565.8 420.5L565.7 421.6L566.8 421.6L566.7 422.4L566.2 422.5L566.2 423L565.8 423.1L564.7 421.2L564.3 421.1L563 422.1L561.6 421.6L560.8 421.5L560.3 421.7L559.2 421.6L558.2 422.4L557.4 422.5L555.4 421.6L554.5 422L553.7 422L553.1 421.3L551.3 420.7L549.6 420.9L549.1 421.3L548.9 422.2L548.4 422.9L548.3 424.4L547 423.5L546.4 423.5Z" fill="#c9eaa8"/>
<path d="M566.7 422.4L566.8 421.6L565.7 421.6L565.8 420.5L565.1 419.8L565.8 417.6L567.9 416.1L568 413.9L568.7 410.4L569 409.7L568.4 409.2L568.3 408.6L567.7 408.1L567.3 405.5L569 404.6L575.7 407.8L582.4 411L582.5 417.8L581.1 417.6L580.3 418.9L579.8 420L580.2 420.3L579.6 420.8L579.8 421.5L579.4 422.2L579.2 422.8L579.8 422.7L580.2 423.4L580.2 424.4L580.9 424.9L580.8 425.3L579.7 425.6L578.8 426.3L577.6 428.1L576.1 428.9L574.4 428.8L573.9 428.9L574.1 429.6L573.3 430.1L572.5 430.8L570.4 431.4L570 431.1L569.7 431L569.4 431.4L568 431.6L568.3 431.1L567.7 429.9L567.5 429.2L566.7 429L565.7 428L566.1 427.2L566.9 427.4L567.4 427.2L568.3 427.3L567.4 425.7L567.5 424.6L567.4 423.5L566.7 422.4Z" fill="#f58b51"/>
<path d="M582.7 429.4L582.4 429.5L581.8 429L581.7 428.5L582 427.8L582 427.1L581 426L580.8 425.3L580.9 424.9L580.2 424.4L580.2 423.4L579.8 422.7L579.2 422.8L579.4 422.2L579.8 421.5L579.6 420.8L580.2 420.3L579.8 420L580.3 418.9L581.1 417.6L582.5 417.8L582.4 411L582.5 410.3L584.4 410.3L584.4 407L591.2 407L597.7 407L604.5 407L605 408.7L604.6 409L604.8 410.7L605.5 412.7L606.1 413L607 413.7L606.2 414.7L604.9 415L604.4 415.5L604.2 416.6L603.5 419.1L603.6 419.8L603.4 421.2L602.7 422.9L601.7 423.7L600.9 425L600.8 425.7L600 426.2L599.5 427.9L599.5 429.4L599.3 429.9L598.4 430L597.8 430.9L598.9 431.1L599.7 431.9L600 432.6L600.8 433L601.8 434.8L600.6 435.9L599.6 436.9L598.6 437.7L597.4 437.7L596 438.1L595 437.7L594.2 438.2L592.8 437.1L592.3 436.3L591.4 436.7L590.6 436.6L590.1 436.8L589.4 436.7L588.4 435.3L588.1 434.7L586.9 434.1L586.4 433L585.8 432.3L584.6 431.4L584.6 430.9L583.7 430.2Z" fill="#7cc2aa"/>
<path d="M613.7 422.9L613.1 422.4L612.4 421.4L611.7 420.9L611.2 420.3L609.8 419.6L608.6 419.6L608.2 419.3L607.2 419.6L606.2 418.8L605.7 420.1L603.6 419.8L603.5 419.1L604.2 416.6L604.4 415.5L604.9 415L606.2 414.7L607 413.7L608 415.7L608.5 417.2L609.4 418.1L611.7 419.6L612.6 420.6L613.6 421.6L614.1 422.2L614.9 422.7L614.4 423.1Z" fill="#fdb96e"/>
<path d="M614.9 422.7L615.3 423.2L615.3 423.9L614.3 424.4L615 424.8L614.4 425.7L614 425.4L613.6 425.5L612.7 425.4L612.7 424.9L612.5 424.5L613.1 423.7L613.7 422.9L614.4 423.1Z" fill="#d9281f"/>
<path d="M606.2 418.8L607.2 419.6L608.2 419.3L608.6 419.6L609.8 419.6L611.2 420.3L611.7 420.9L612.4 421.4L613.1 422.4L613.7 422.9L613.1 423.7L612.5 424.5L612.7 424.9L612.7 425.4L613.6 425.5L614 425.4L614.4 425.7L614 426.3L614.7 427.2L615.3 428L615.9 428.6L621.5 430.6L622.9 430.6L618.1 435.7L615.9 435.7L614.4 436.9L613.3 437L612.9 437.5L611.7 437.5L611 436.9L609.5 437.6L609 438.3L607.8 438.2L607.5 438L607.1 438L606.5 438L604.4 436.6L603.2 436.6L602.7 436L602.7 435.1L601.8 434.8L600.8 433L600 432.6L599.7 431.9L598.9 431.1L597.8 430.9L598.4 430L599.3 429.9L599.5 429.4L599.5 427.9L600 426.2L600.8 425.7L600.9 425L601.7 423.7L602.7 422.9L603.4 421.2L603.6 419.8L605.7 420.1Z" fill="#fdb96e"/>
<path d="M614.4 425.7L615 424.8L615.6 425.1L616.6 426.5L617.5 426.5L619.1 426L620.9 425.9L622.4 425.3L623.3 425.2L623.9 424.9L624.8 424.9L625.4 424.8L626.1 424.6L627 424.4L627.8 423.8L628.5 423.8L628.5 424.3L628.4 425.2L628.4 426.1L628 426.7L627.5 428.6L626.7 430.5L625.7 432.6L624.2 435.1L622.8 437L620.8 439.3L619.1 440.6L616.6 442.3L615 443.6L613.2 445.7L612.8 446.5L612.4 446.9L611.4 445.6L611.4 439.4L612.9 437.5L613.3 437L614.4 436.9L615.9 435.7L618.1 435.7L622.9 430.6L621.5 430.6L615.9 428.6L615.3 428L614.7 427.2L614 426.3Z" fill="#86caa5"/>
<path d="M611.4 445.6L612.4 446.9L611.2 447.6L610.8 448.3L610.2 448.4L609.9 449.6L609.4 450.3L609 451.4L608.4 452L606 450.3L605.8 449.3L599.7 445.9L599.4 445.7L599.4 443.9L599.9 443.2L600.7 442.1L601.3 440.9L600.6 439L600.4 438.1L599.6 436.9L600.6 435.9L601.8 434.8L602.7 435.1L602.7 436L603.2 436.6L604.4 436.6L606.5 438L607.1 438L607.5 438L607.8 438.2L609 438.3L609.5 437.6L611 436.9L611.7 437.5L612.9 437.5L611.4 439.4Z" fill="#fff6b6"/>
<path d="M596 445.8L594.1 445.8L593.5 446L592.5 446.5L592.1 446.4L592.1 445.1L592.5 444.4L592.6 443.1L593 442.3L593.6 441.4L594.3 441L594.8 440.4L594.1 440.2L594.2 438.2L595 437.7L596 438.1L597.4 437.7L598.6 437.7L599.6 436.9L600.4 438.1L600.6 439L601.3 440.9L600.7 442.1L599.9 443.2L599.4 443.9L599.4 445.7Z" fill="#4a96bb"/>
<path d="M593.5 446L594.2 447L594.1 448L593.6 448.2L592.7 448.1L592.2 449L591.2 448.9L591.4 448L591.6 447.8L591.6 446.8L592.1 446.4L592.5 446.5Z" fill="#d9281f"/>
<path d="M593.6 448.2L593.7 448.8L594.1 449.2L594.1 449.8L593.7 450.1L593 451L592.4 451.6L591.7 451.7L591.6 449.7L591.2 448.9L592.2 449L592.7 448.1Z" fill="#2f7fba"/>
<path d="M599.4 445.7L599.7 445.9L605.8 449.3L606 450.3L608.4 452L607.6 454.1L607.7 455L608.8 455.6L608.8 456.1L608.4 457.1L608.5 457.6L608.4 458.4L608.9 459.5L609.6 461.1L610.3 461.5L608.9 462.5L607.1 463.2L606.1 463.1L605.4 463.6L604.3 463.7L603.8 463.9L601.8 463.4L600.5 463.5L600.1 461.3L599.5 460.5L599.2 460L597.5 459.7L596.5 459.2L595.5 458.9L594.8 458.6L594.1 458.2L593.2 456.1L592.2 455.1L591.9 454.1L592 453.2L591.7 451.7L592.4 451.6L593 451L593.7 450.1L594.1 449.8L594.1 449.2L593.7 448.8L593.6 448.2L594.1 448L594.2 447L593.5 446L594.1 445.8L596 445.8Z" fill="#7cc2aa"/>
<path d="M564.3 440.3L564.1 440.2L563.1 440.4L562 440.2L561.2 440.3L558.5 440.3L558.7 438.9L558.1 437.8L557.3 437.5L557 436.8L556.5 436.5L556.5 436L557 434.8L557.7 433.2L558.2 433.2L559.2 432.2L559.9 432.2L560.9 432.9L562 432.3L562.1 431.6L562.6 430.9L562.8 430.1L563.7 429.4L564.1 428.2L564.4 427.9L564.7 426.9L565.1 425.9L566.5 424.6L566.6 424L566.8 423.7L566.2 423L566.2 422.5L566.7 422.4L567.4 423.5L567.5 424.6L567.4 425.7L568.3 427.3L567.4 427.2L566.9 427.4L566.1 427.2L565.7 428L566.7 429L567.5 429.2L567.7 429.9L568.3 431.1L568 431.6L567.1 433.3L566.7 433.6L566.6 434.9L566.8 435.6L566.6 436.1L567.4 437L567.6 437.6L568.2 438.5L569 439L569 439.8L569.2 440.3L569.1 441.2L567.8 440.8L566.4 440.3Z" fill="#f58b51"/>
<path d="M568 431.6L569.4 431.4L569.7 431L570 431.1L570.4 431.4L572.5 430.8L573.3 430.1L574.1 429.6L573.9 428.9L574.4 428.8L576.1 428.9L577.6 428.1L578.8 426.3L579.7 425.6L580.8 425.3L581 426L582 427.1L582 427.8L581.7 428.5L581.8 429L582.4 429.5L582.7 429.4L583.7 430.2L584.6 430.9L584.6 431.4L585.8 432.3L586.4 433L586.9 434.1L588.1 434.7L588.4 435.3L587.8 435.4L586.8 435.4L585.5 435.2L584.9 435.4L584.6 435.8L584.1 435.8L583.4 435.5L581.5 436.3L580.8 436.1L580.5 436.3L580 437.3L578.8 437L577.5 436.8L576.4 436.2L575.1 435.6L574.2 436.1L573.5 437L573.3 438.2L572.2 438.1L571.1 437.8L570.1 438.7L569.2 440.3L569 439.8L569 439L568.2 438.5L567.6 437.6L567.4 437L566.6 436.1L566.8 435.6L566.6 434.9L566.7 433.6L567.1 433.3Z" fill="#f58b51"/>
<path d="M558.5 440.3L561.2 440.3L561.3 442.3L558.8 442.3L558.2 442.4L557.9 442.1Z" fill="#fdb96e"/>
<path d="M561.2 440.3L562 440.2L563.1 440.4L564.1 440.2L564.3 440.3L564.1 441L564.6 441.9L565.9 441.7L566.3 442.1L565.6 444L566.4 445L566.6 446.3L566.3 447.5L565.8 448.3L564.3 448.2L563.4 447.4L563.3 448.1L562.2 448.3L561.6 448.8L562.2 449.9L560.9 450.8L559.2 449.1L558.1 447.7L557.1 446L557.1 445.4L557.5 444.9L557.9 443.6L558.2 442.4L558.8 442.3L561.3 442.3Z" fill="#fdd088"/>
<path d="M564.1 452.2L563.5 451.6L563 451.9L562.3 452.6L560.9 450.8L562.2 449.9L561.6 448.8L562.2 448.3L563.3 448.1L563.4 447.4L564.3 448.2L565.8 448.3L566.3 447.5L566.6 446.3L566.4 445L565.6 444L566.3 442.1L565.9 441.7L564.6 441.9L564.1 441L564.3 440.3L566.4 440.3L567.8 440.8L569.1 441.2L569.2 440.3L570.1 438.7L571.1 437.8L572.2 438.1L573.3 438.2L573.2 439.2L572.7 440.1L572.4 441.2L572.2 442.6L572.3 443.6L572 444.2L572 444.8L571.8 445.3L570.7 446.2L569.9 447L569.2 448.7L569.2 450.1L568.8 450.6L567.8 451.4L566.8 452.5L566.2 452.2L566.1 451.7L565.2 451.7L564.6 452.3Z" fill="#f79a5a"/>
<path d="M594.2 438.2L594.1 440.2L594.8 440.4L594.3 441L593.6 441.4L593 442.3L592.6 443.1L592.5 444.4L592.1 445.1L592.1 446.4L591.6 446.8L591.6 447.8L591.4 448L591.2 448.9L591.6 449.7L591.7 451.7L592 453.2L591.9 454.1L592.2 455.1L593.2 456.1L594.1 458.2L593.4 458L591.2 458.3L590.7 458.5L590.2 459.6L590.6 460.3L590.3 462.3L590.1 464L590.5 464.3L591.7 465L592.2 464.7L592.3 466.5L591 466.5L590.3 465.5L589.7 464.8L588.4 464.6L588 463.7L587 464.2L585.7 464L585.1 463.2L584 463.1L583.2 463.1L583.2 462.6L582.6 462.5L581.8 462.4L580.8 462.7L580 462.7L579.6 462.8L579.7 460.8L579.1 460.2L579 459.1L579.3 458.1L578.9 457.5L578.9 456.4L576.8 456.4L577 455.8L576.1 455.8L576 456.1L575 456.2L574.6 457.2L574.3 457.6L573.4 457.4L572.8 457.6L571.7 457.7L571 456.8L570.7 456.3L570.2 455.3L569.8 454L564.8 454L564.2 454.2L563.7 454.2L563 454.4L562.8 453.9L563.2 453.7L563.2 453L563.5 452.5L564.1 452.2L564.6 452.3L565.2 451.7L566.1 451.7L566.2 452.2L566.8 452.5L567.8 451.4L568.8 450.6L569.2 450.1L569.2 448.7L569.9 447L570.7 446.2L571.8 445.3L572 444.8L572 444.2L572.3 443.6L572.2 442.6L572.4 441.2L572.7 440.1L573.2 439.2L573.3 438.2L573.5 437L574.2 436.1L575.1 435.6L576.4 436.2L577.5 436.8L578.8 437L580 437.3L580.5 436.3L580.8 436.1L581.5 436.3L583.4 435.5L584.1 435.8L584.6 435.8L584.9 435.4L585.5 435.2L586.8 435.4L587.8 435.4L588.4 435.3L589.4 436.7L590.1 436.8L590.6 436.6L591.4 436.7L592.3 436.3L592.8 437.1Z" fill="#f9a55f"/>
<path d="M569.8 454L570.2 455.3L570.7 456.3L571 456.8L571.7 457.7L572.8 457.6L573.4 457.4L574.3 457.6L574.6 457.2L575 456.2L576 456.1L576.1 455.8L577 455.8L576.8 456.4L578.9 456.4L578.9 457.5L579.3 458.1L579 459.1L579.1 460.2L579.7 460.8L579.6 462.8L580 462.7L580.8 462.7L581.8 462.4L582.6 462.5L582.7 463.1L582.5 463.9L582.8 464.7L582.6 465.3L582.7 465.9L579.2 465.9L579.2 471.2L580.3 472.6L581.4 473.7L578.3 474.4L574.2 474.1L573 473.3L566.2 473.4L565.9 473.5L564.9 472.7L563.8 472.7L562.8 473L562 473.3L561.8 472.2L562.1 470.8L562.7 469.2L562.8 468.5L563.3 467L563.7 466.3L564.7 465.2L565.2 464.4L565.4 463.2L565.3 462.2L564.8 461.6L564.3 460.6L563.9 459.6L564 459.2L564.5 458.5L564 456.9L563.7 455.8L562.8 454.7L563 454.4L563.7 454.2L564.2 454.2L564.8 454Z" fill="#d9281f"/>
<path d="M563.2 453.7L562.8 453.9L562.3 452.6L563 451.9L563.5 451.6L564.1 452.2L563.5 452.5L563.2 453Z" fill="#d9281f"/>
<path d="M594.1 458.2L594.8 458.6L595.5 458.9L596.5 459.2L597.5 459.7L598.3 460.4L598.7 461.9L598.4 462.3L598.1 463.7L598.4 465.1L597.9 465.7L597.4 467.2L598.3 467.7L593.1 469.1L593.3 470.3L592 470.5L591.1 471.2L590.9 471.8L590.3 471.9L588.8 473.3L587.8 474.4L587.3 474.4L586.7 474.2L584.8 474L584.5 473.9L584.5 473.8L583.9 473.4L582.8 473.3L581.4 473.7L580.3 472.6L579.2 471.2L579.2 465.9L582.7 465.9L582.6 465.3L582.8 464.7L582.5 463.9L582.7 463.1L582.6 462.5L583.2 462.6L583.2 463.1L584 463.1L585.1 463.2L585.7 464L587 464.2L588 463.7L588.4 464.6L589.7 464.8L590.3 465.5L591 466.5L592.3 466.5L592.2 464.7L591.7 465L590.5 464.3L590.1 464L590.3 462.3L590.6 460.3L590.2 459.6L590.7 458.5L591.2 458.3L593.4 458Z" fill="#2f7fba"/>
<path d="M600.5 463.5L600.1 464.8L600.5 467L601.1 467L601.7 467.5L602.4 468.8L602.6 470.9L601.9 471.3L601.3 472.5L600.2 471.4L600.1 470.2L600.5 469.4L600.4 468.8L599.7 468.3L599.2 468.5L598.3 467.7L597.4 467.2L597.9 465.7L598.4 465.1L598.1 463.7L598.4 462.3L598.7 461.9L598.3 460.4L597.5 459.7L599.2 460L599.5 460.5L600.1 461.3Z" fill="#cdeba7"/>
<path d="M600.5 463.5L601.8 463.4L603.8 463.9L604.3 463.7L605.4 463.6L606.1 463.1L607.1 463.2L608.9 462.5L610.3 461.5L610.5 462.3L610.5 464L610.7 465.4L610.7 468.1L611 468.9L610.5 470.1L609.9 471.3L608.8 472.3L607.3 473L605.3 473.8L603.4 475.6L602.8 475.9L601.6 477.1L600.9 477.5L600.8 478.7L601.6 480L601.9 481L601.9 481.5L602.2 481.4L602.2 483L601.9 483.8L602.3 484.1L602.1 484.8L601.3 485.4L600 486L597.9 486.9L597.2 487.5L597.3 488.2L597.8 488.4L597.6 489.2L596.3 489.2L596.2 488.5L595.9 487.7L595.8 487.1L596.1 485.2L595.7 484L594.8 481.7L596.6 479.8L597.1 478.5L597.3 478.4L597.5 477.4L597.2 476.9L597.3 475.6L597.7 474.5L597.7 472.3L596.8 471.8L596 471.6L595.6 471.2L594.8 470.9L593.4 470.9L593.3 470.3L593.1 469.1L598.3 467.7L599.2 468.5L599.7 468.3L600.4 468.8L600.5 469.4L600.1 470.2L600.2 471.4L601.3 472.5L601.9 471.3L602.6 470.9L602.4 468.8L601.7 467.5L601.1 467L600.5 467L600.1 464.8Z" fill="#ebf7b1"/>
<path d="M594.8 481.7L594 481.5L593.4 481.7L592.6 481.4L591.9 481.4L590.8 480.6L589.5 480.4L589 479.3L589 478.7L588.3 478.5L586.4 476.7L585.8 475.7L585.5 475.4L584.8 474L586.7 474.2L587.3 474.4L587.8 474.4L588.8 473.3L590.3 471.9L590.9 471.8L591.1 471.2L592 470.5L593.3 470.3L593.4 470.9L594.8 470.9L595.6 471.2L596 471.6L596.8 471.8L597.7 472.3L597.7 474.5L597.3 475.6L597.2 476.9L597.5 477.4L597.3 478.4L597.1 478.5L596.6 479.8Z" fill="#2f7fba"/>
<path d="M569.8 492.3L568.5 491.1L567.9 489.8L567.5 488.2L567.1 487L566.5 484.4L566.5 482.4L566.3 481.4L565.6 480.7L564.7 479.3L563.9 477.3L563.5 476.3L562.1 474.6L562 473.3L562.8 473L563.8 472.7L564.9 472.7L565.9 473.5L566.2 473.4L573 473.3L574.2 474.1L578.3 474.4L581.4 473.7L582.8 473.3L583.9 473.4L584.5 473.8L584.5 473.9L583.6 474.3L583.1 474.3L582 475L581.4 474.3L578.8 474.9L577.5 474.9L577.4 480.9L575.8 481L575.8 485.9L575.8 492.1L574.3 493L573.4 493.1L572.3 492.8L571.6 492.7L571.3 492L570.6 491.5Z" fill="#ebf7b1"/>
<path d="M585.5 475.4L585.8 475.7L586.4 476.7L588.3 478.5L589 478.7L589 479.3L589.5 480.4L590.8 480.6L591.9 481.4L589.5 482.6L588 483.9L587.4 485L586.9 485.7L586 485.8L585.7 486.6L585.5 487.1L584.5 487.5L583.1 487.4L582.3 487L581.5 486.8L580.7 487.1L580.3 488L579.5 488.5L578.7 489.2L577.5 489.4L577.1 488.8L577.2 487.8L576.2 486.2L575.8 485.9L575.8 481L577.4 480.9L577.5 474.9L578.8 474.9L581.4 474.3L582 475L583.1 474.3L583.6 474.3L584.5 473.9L584.8 474Z" fill="#ef7048"/>
<path d="M569.8 492.3L570.6 491.5L571.3 492L571.6 492.7L572.3 492.8L573.4 493.1L574.3 493L575.8 492.1L575.8 485.9L576.2 486.2L577.2 487.8L577.1 488.8L577.5 489.4L578.7 489.2L579.5 488.5L580.3 488L580.7 487.1L581.5 486.8L582.3 487L583.1 487.4L584.5 487.5L585.5 487.1L585.7 486.6L586 485.8L586.9 485.7L587.4 485L588 483.9L589.5 482.6L591.9 481.4L592.6 481.4L593.4 481.7L594 481.5L594.8 481.7L595.7 484L596.1 485.2L595.8 487.1L595.9 487.7L595.1 487.4L594.6 487.5L594.4 488L594 488.7L594 489.2L595 490.2L596 490L596.3 489.2L597.6 489.2L597.2 490.5L597 491.9L596.6 492.6L595.4 493.5L595.1 493.7L594.4 494.6L593.9 495.4L592.9 496.7L591 498.4L589.8 499.4L588.6 500.2L586.8 500.8L585.9 500.9L585.7 501.4L584.7 501.2L583.9 501.5L582 501.1L581 501.4L580.3 501.3L578.6 501.9L577.1 502.2L576.1 502.8L575.3 502.9L574.6 502.3L574 502.2L573.3 501.5L573.2 501.7L573 501.3L573 500.3L572.5 499.1L573 498.8L573 497.5L571.9 496L571 494.5L571 494.5L569.8 492.3Z" fill="#86caa5"/>
<path d="M591.1 493L591.7 493.5L591.2 494.3L590.9 494.9L590 495.1L589.6 495.7L589 495.8L587.8 494.5L588.7 493.5L589.6 492.8L590.4 492.5Z" fill="#fdb96e"/>
<path d="M596.3 489.2L596 490L595 490.2L594 489.2L594 488.7L594.4 488L594.6 487.5L595.1 487.4L595.9 487.7L596.2 488.5Z" fill="#4a96bb"/>
<path d="M625.8 465.1L626.3 465.9L626.7 467L627 469L627.4 469.8L627.2 470.6L626.9 471.1L626.4 470.1L626 470.6L626.4 471.9L626.2 472.6L625.8 473L625.7 474.4L625 476.4L624.2 478.7L623.1 481.9L622.5 484.2L621.7 486.2L620.3 486.6L618.9 487.3L617.9 486.9L616.5 486.3L616.1 485.4L616 483.9L615.4 482.6L615.2 481.3L615.5 480.1L616.3 479.8L616.3 479.3L617.1 478L617.2 476.9L616.9 476.1L616.5 475L616.4 473.5L617 472.5L617.2 471.5L618.1 471.4L619 471.1L619.6 470.8L620.4 470.7L621.3 469.8L622.7 468.7L623.2 467.9L623 467.2L623.7 467.4L624.7 466.2L624.7 465.2L625.2 464.4Z" fill="#ebf7b1"/>
<path d="M607.7 387.7L604.3 389.6L602.5 388.9L602.6 387.9L604 386.4L603.6 385.7L603 385.7L602.8 384.3L603.2 383.7L604.1 382.8L604.1 382L604.8 382.3L606.7 381.8L607.5 382.2L608.9 382.2L610.9 381.5L611.7 381.5L613.7 381.3L612.8 382.3L611.9 382.7L612.1 384L611.4 386Z" fill="#6bb4ae"/>
<path d="M602.6 387.9L602.2 387.9L601.4 388.2L602.1 386.9L603 385.7L603.6 385.7L604 386.4Z" fill="#d9281f" stroke-width="0.9"/>
<path d="M602.5 388.9L602.2 389.4L601.6 389.2L601.2 390.3L601.6 390.5L601.2 390.8L601.1 391.2L602 390.9L602 391.6L601.1 394.3L600.1 391.4L600.5 390.8L601.2 388.7L601.4 388.2L602.2 387.9L602.6 387.9Z" fill="#fdb96e" stroke-width="0.9"/>
<path d="M602.2 389.4L602.5 388.9L604.3 389.6L607.7 387.7L608.4 389.7L608 390.1L604.7 390.9L606.3 392.6L605.8 393L605.5 393.5L604.1 393.6L603.8 394.3L603.1 394.8L601.2 394.5L601.1 394.3L602 391.6L602 390.9L602.2 390.4Z" fill="#fee09b"/>
<path d="M618.8 383.4L620 383.8L620.1 384.9L619.3 385.4L618.8 386.8L620 388.4L622.1 389.3L623 390.6L622.7 391.8L623.2 391.8L623.2 392.7L624.2 393.6L623.2 393.5L622 393.4L620.8 395L617.7 394.8L612.9 391.4L610.4 390.3L608.4 389.7L607.7 387.7L611.4 386L612.1 384L611.9 382.7L612.8 382.3L613.7 381.3L614.4 381L616.3 381.1L617 381.7L617.8 381.3L618.8 383.4Z" fill="#fee09b"/>
<path d="M623.2 393.5L623.6 394.3L623.4 394.6L623.9 395.9L622.7 396L622.3 395.1L620.8 395L622 393.4Z" fill="#d9281f" stroke-width="0.9"/>
<path d="M614.4 416.5L614.2 415.8L613.7 415.3L613.6 414.6L612.7 414L611.8 412.6L611.3 411.2L610.1 410.1L609.4 409.8L608.3 408.2L608.1 407L608.2 406L607.2 404.1L606.4 403.5L605.5 403.1L604.9 402.1L605 401.8L604.5 400.9L604 400.5L603.4 399.2L602.4 397.9L601.5 396.7L600.7 396.7L600.9 395.8L601 395.2L601.2 394.5L603.1 394.8L603.8 394.3L604.1 393.6L605.5 393.5L605.8 393L606.3 392.6L604.7 390.9L608 390.1L608.4 389.7L610.4 390.3L612.9 391.4L617.7 394.8L620.8 395L622.3 395.1L622.7 396L623.9 395.9L624.6 397.3L625.4 397.7L625.7 398.3L626.9 399L627 399.7L626.8 400.3L627 400.9L627.5 401.3L627.7 401.9L628 402.3L628.5 402.6L628.9 402.5L629.3 403.2L629.3 403.6L630 405.3L635.1 406.1L635.4 405.8L636.2 407L635 410.3L630 412L625.1 412.7L623.5 413.4L622.3 415.2L621.5 415.5L621.1 414.9L620.5 415L618.8 414.8L618.5 414.7L616.6 414.7L616.1 414.9L615.4 414.4L615 415.3L615.2 416Z" fill="#8dd0a6"/>
<path d="M631.8 416L630.6 416.5L630.3 417.2L630.3 417.8L628.6 418.5L625.9 419.3L624.4 420.5L623.6 420.6L623.1 420.5L622.1 421.2L621.1 421.5L619.6 421.6L619.2 421.7L618.9 422.1L618.4 422.2L618.1 422.7L617.3 422.6L616.8 422.8L615.6 422.8L615.2 421.8L615.2 420.9L614.9 420.4L614.6 419.1L614.1 418.4L614.5 418.3L614.3 417.6L614.5 417.2L614.4 416.5L615.2 416L615 415.3L615.4 414.4L616.1 414.9L616.6 414.7L618.5 414.7L618.8 414.8L620.5 415L621.1 414.9L621.5 415.5L622.3 415.2L623.5 413.4L625.1 412.7L630 412L631.3 414.8Z" fill="#3f8cba"/>
<path d="M641.6 408.5L640.9 409.6L640.2 409.5L639.8 409.9L639.5 410.8L639.7 411.9L639.6 412.1L638.8 412.1L637.8 412.8L637.6 413.6L637.2 413.9L636.2 413.9L635.5 414.3L635.5 415L634.7 415.5L633.8 415.3L632.6 415.9L631.8 416L631.3 414.8L630 412L635 410.3L636.2 407L635.4 405.8L635.4 405.1L635.9 404.4L635.9 403.7L636.7 403.4L636.4 403.1L636.5 402L637.4 402L638.2 403.2L639.1 403.8L640.3 404L641.3 404.3L642.1 405.3L642.6 405.8L643.2 406.1L643.2 406.4L642.5 407.5L642.3 407.9Z" fill="#c9eaa8"/>
<path d="M629.3 403.2L629.6 403.1L629.6 403.6L631 403.3L632.3 403.3L633.4 403.4L634.5 402.2L635.8 401.2L636.8 400.1L637.2 400.7L637.4 402L636.5 402L636.4 403.1L636.7 403.4L635.9 403.7L635.9 404.4L635.4 405.1L635.4 405.8L635.1 406.1L630 405.3L629.3 403.6Z" fill="#2f7fba" stroke-width="0.9"/>
<path d="M628 402.3L627.8 401.1L628.3 400.2L628.8 400L629.3 400.5L629.3 401.5L628.9 402.5L628.5 402.6Z" fill="#d9281f" stroke-width="0.9"/>
<path d="M617.8 377.1L618.2 377.1L618.7 377.4L619.3 377.4L619.3 377.8L620 378.8L620.7 378.6L622.7 377.4L623.3 377.3L623.9 377.8L623.2 378.6L624.2 379.4L624.7 379.4L625.2 380.6L626.9 381L628 381.9L630.4 382.2L633.1 381.7L633.2 381.3L634.7 381L635.9 380L637 380.1L637.8 379.8L639 379.9L640.8 380.8L642.2 381L644.1 382.4L645.4 382.5L645.5 383.9L644.8 386L644.4 387.2L645.1 387.5L644.4 388.4L644.9 389.8L645.1 390.8L646.3 391.1L646.5 392.2L644.9 393.7L645.8 394.6L646.5 395.7L648.1 396.4L648.1 397.9L648.9 398.2L649.1 398.9L646.6 399.8L646 401.8L642.8 401.3L641 400.9L639.1 400.7L638.4 398.6L637.6 398.3L636.3 398.6L634.6 399.4L632.5 398.8L630.8 397.5L629.2 397.1L628 395.5L626.8 393.2L625.9 393.5L624.8 392.9L624.2 393.6L623.2 392.7L623.2 391.8L622.7 391.8L623 390.6L622.1 389.3L620 388.4L618.8 386.8L619.3 385.4L620.1 384.9L620 383.8L618.8 383.4L617.8 381.3L616.8 380L617.1 379.4L616.6 377.6Z" fill="#fee09b"/>
<path d="M645.5 383.9L645.4 382.5L644.1 382.4L642.2 381L640.8 380.8L639 379.9L637.8 379.8L637 380.1L635.9 380L634.7 381L633.2 381.3L632.9 380.1L633.1 378.4L631.8 377.8L632.3 376.6L631.1 376.5L631.5 375.1L633.1 375.5L634.6 375L633.4 374L632.9 373L631.5 373.4L631.3 374.7L630.8 373.6L631.6 373L633.5 372.7L634.6 373.1L635.8 374.5L636.7 374.4L638.6 374.4L638.3 373.5L639.7 372.9L641.2 371.9L643.4 372.8L643.6 374.2L644.3 374.5L646.1 374.4L646.7 374.8L647.5 376.5L649.4 377.7L650.5 378.5L652.3 379.3L654.5 380L654.5 381L654 381L653.2 380.5L652.9 381.1L651.5 381.5L651.2 382.8L650.2 383.3L648.9 383.6L648.5 384.3L647.2 384.6Z" fill="#4a96bb"/>
<path d="M636.7 374.4L636.6 368.1L640.9 367.1L641.3 367.3L643.9 368.5L645.3 369.1L646.9 370.7L648.9 370.4L651.8 370.3L653.8 371.5L653.6 373.2L654.5 373.2L654.8 374.6L657 374.7L657.4 375.5L658 375.4L658.8 374.3L661 373.1L662 372.7L662.5 372.9L661.1 374L662.3 374.7L663.5 374.2L665.5 375.1L663.3 376.3L662.1 376.2L661.4 376.2L661.1 375.7L661.5 375L659.2 375.3L658.7 376.4L657.9 377.4L656.5 377.3L656 378L657.3 378.4L657.6 379.7L656.7 381.4L655.4 381L654.5 381L654.5 380L652.3 379.3L650.5 378.5L649.4 377.7L647.5 376.5L646.7 374.8L646.1 374.4L644.3 374.5L643.6 374.2L643.4 372.8L641.2 371.9L639.7 372.9L638.3 373.5L638.6 374.4Z" fill="#5a93b4"/>
<path d="M620.7 362.4L621.5 362.2L621.1 360.7L622.4 358.9L624.2 359.9L624.4 358.7L628 356.8L630.5 356.8L634.2 358L636.2 358.7L638.1 358L640.8 357.8L642.8 358.9L643.3 358.3L645.7 358.3L646.2 357.5L643.4 356.4L645 355.6L644.7 355.1L646.3 354.7L645.1 353.5L645.8 352.9L652.3 352.4L653.1 351.9L657.3 351.3L658.8 350.6L661.9 350.9L662.4 352.8L664.1 352.3L666.3 352.9L666.1 353.8L667.8 353.8L672 352.1L671.3 352.6L673.5 354L677.2 358.2L678.3 357.3L680.4 358.3L683 357.8L683.8 358.2L684.7 359.2L685.8 359.5L686.5 360.2L688.7 360L689.7 361.1L688.4 362.1L687 362.3L686.9 364L686 364.8L682.6 364.2L681.4 367.2L680.5 367.6L677.2 368.3L678.7 371.2L677.5 371.7L677.7 372.6L676.6 372.4L675.8 371.8L673.3 371.6L670.5 371.5L669.9 371.7L667.5 371L666.5 371.4L666.3 372.4L663.5 371.8L662.4 372L662 372.7L661 373.1L658.8 374.3L658 375.4L657.4 375.5L657 374.7L654.8 374.6L654.5 373.2L653.6 373.2L653.8 371.5L651.8 370.3L648.9 370.4L646.9 370.7L645.3 369.1L643.9 368.5L641.3 367.3L640.9 367.1L636.6 368.1L636.7 374.4L635.8 374.5L634.6 373.1L633.5 372.7L631.6 373L630.8 373.6L630.7 373.2L631.1 372.5L630.8 371.9L628.9 371.3L628.1 369.8L627.2 369.4L627.1 368.8L628.8 369L628.8 367.7L630.3 367.4L631.7 367.7L632 366.1L631.7 365L630 365.1L628.6 364.7L626.7 365.4L625.1 365.8L624.2 365.5L624.4 364.6L623.3 363.5L622.1 363.5Z" fill="#fff6b6"/>
<path d="M662 372.7L662.4 372L663.5 371.8L666.3 372.4L666.5 371.4L667.5 371L669.9 371.7L670.5 371.5L673.3 371.6L675.8 371.8L676.6 372.4L677.7 372.6L677.4 373L674.8 373.9L674.2 374.6L672 374.8L671.4 375.9L669.6 375.6L668.4 376L666.8 376.8L667 377.2L666.6 377.5L663.4 377.8L661.3 377.3L659.4 377.4L659.6 376.4L661.5 376.7L662.1 376.2L663.3 376.3L665.5 375.1L663.5 374.2L662.3 374.7L661.1 374L662.5 372.9Z" fill="#2f7fba"/>
<path d="M662.1 376.2L661.5 376.7L659.6 376.4L659.4 377.4L661.3 377.3L663.4 377.8L666.6 377.5L667 379.1L667.6 378.9L668.6 379.3L668.5 380L668.8 380.9L667 380.9L665.9 380.8L664.8 381.6L664.1 381.7L663.5 382.1L662.8 381.5L663 380.1L662.5 380L662.6 379.5L661.7 379.1L661 379.7L660.8 380.4L660.6 380.6L659.5 380.6L659 381.4L658.4 381.1L657.2 381.6L656.7 381.4L657.6 379.7L657.3 378.4L656 378L656.5 377.3L657.9 377.4L658.7 376.4L659.2 375.3L661.5 375L661.1 375.7L661.4 376.2Z" fill="#4a96bb"/>
<path d="M645.5 383.9L647.2 384.6L648.5 384.3L648.9 383.6L650.2 383.3L651.2 382.8L651.5 381.5L652.9 381.1L653.2 380.5L654 381L654.5 381L655.4 381L656.7 381.4L657.2 381.6L658.4 381.1L659 381.4L659.5 380.6L660.6 380.6L660.8 380.4L661 379.7L661.7 379.1L662.6 379.5L662.5 380L663 380.1L662.8 381.5L663.5 382.1L664.1 381.7L664.8 381.6L665.9 380.8L667 380.9L668.8 380.9L669.1 381.4L668.1 381.6L667.2 381.9L665.3 382.1L663.5 382.5L662.5 383.2L662.9 383.9L663.1 384.8L662.3 385.5L662.3 386.1L661.8 386.7L660.2 386.7L660.9 387.8L659.8 388.2L659.1 389.2L659.2 390.3L658.6 390.7L657.9 390.6L656.6 390.8L656.4 391.3L655.2 391.3L654.2 392.2L654.2 393.6L652 394.4L650.8 394.2L650.5 394.6L649.5 394.4L647.8 394.6L644.9 393.7L646.5 392.2L646.3 391.1L645.1 390.8L644.9 389.8L644.4 388.4L645.1 387.5L644.4 387.2L644.8 386Z" fill="#d9281f"/>
<path d="M669.1 381.4L670.3 382.2L670.8 383.5L673.6 384.2L672 385.6L670.1 385.9L667.5 385.4L666.7 386.2L667.3 387.7L667.9 388.8L669.2 389.6L667.8 390.6L667.8 391.8L666.2 393.5L665.1 395.2L663.4 397L661.4 396.9L659.5 398.6L660.6 399.4L660.8 400.7L661.8 401.5L662.1 403L658.4 403L657.3 404.1L656 403.7L655.5 402.5L654.2 401.2L651.1 401.5L648.4 401.5L646 401.8L646.6 399.8L649.1 398.9L648.9 398.2L648.1 397.9L648.1 396.4L646.5 395.7L645.8 394.6L644.9 393.7L647.8 394.6L649.5 394.4L650.5 394.6L650.8 394.2L652 394.4L654.2 393.6L654.2 392.2L655.2 391.3L656.4 391.3L656.6 390.8L657.9 390.6L658.6 390.7L659.2 390.3L659.1 389.2L659.8 388.2L660.9 387.8L660.2 386.7L661.8 386.7L662.3 386.1L662.3 385.5L663.1 384.8L662.9 383.9L662.5 383.2L663.5 382.5L665.3 382.1L667.2 381.9L668.1 381.6Z" fill="#c9eaa8"/>
<path d="M673.6 384.2L675.4 386.2L675.2 387.5L675.9 388.4L675.9 389.3L674.6 389L675.1 390.9L676.8 392L679.1 393.2L678.1 393.9L677.4 395.5L679 396.1L680.6 397L682.8 397.9L685.1 398.1L686.1 399L687.4 399.1L689.4 399.5L690.8 399.5L691 398.8L690.8 397.8L690.9 397L692 396.7L692.1 398L692.2 398.4L693.7 399L694.7 398.7L696.2 398.8L697.5 398.8L697.7 397.8L697 397.2L698.3 397L699.9 395.8L701.8 394.7L703.2 395.1L704.5 394.4L705.2 395.4L704.7 396.1L706.5 396.4L706.6 397L706 397.3L706.2 398.4L705 398.1L702.8 399.2L702.8 400.2L701.9 401.6L701.8 402.4L701.1 403.8L699.7 403.5L699.7 405.2L699.3 405.8L699.5 406.5L698.6 406.9L697.7 404.2L697.3 404.2L697 405.3L696.1 404.4L696.6 403.5L697.4 403.4L698.1 401.9L697.2 401.6L695.6 401.7L694 401.4L693.8 400.3L693 400.2L691.7 399.5L691.1 400.6L692.3 401.5L691.3 402.1L690.9 402.7L691.9 403.2L691.6 404.2L692.2 405.5L692.5 406.9L692.2 407.5L691.1 407.5L689 407.8L689.1 409.1L688.2 410.1L685.8 411.2L683.9 413.2L682.6 414.3L680.9 415.4L680.9 416.1L680.1 416.6L678.6 417.2L677.8 417.3L677.3 418.5L677.6 420.7L677.7 422.1L677 423.7L677 426.6L676.1 426.7L675.4 428L675.9 428.5L674.3 429L673.8 430.2L673.1 430.6L671.5 429.1L670.7 426.7L670.1 425L669.5 424.2L668.6 422.6L668.2 420.5L667.9 419.4L666.3 417.1L665.6 413.8L665.1 411.7L665.1 409.6L664.8 408L662.4 409.1L661.2 408.9L658.9 406.8L659.8 406.2L659.3 405.5L657.3 404.1L658.4 403L662.1 403L661.8 401.5L660.8 400.7L660.6 399.4L659.5 398.6L661.4 396.9L663.4 397L665.1 395.2L666.2 393.5L667.8 391.8L667.8 390.6L669.2 389.6L667.9 388.8L667.3 387.7L666.7 386.2L667.5 385.4L670.1 385.9L672 385.6Z" fill="#fee09b"/>
<path d="M680.3 431.4L680 433.2L679.3 433.6L677.8 434L677 432.7L676.7 430.3L677.5 427.5L678.7 428.5L679.4 429.7Z" fill="#4a96bb" stroke-width="1.4"/>
<path d="M690.9 397L690.8 397.8L691 398.8L690.8 399.5L689.4 399.5L687.4 399.1L686.1 399L685.1 398.1L682.8 397.9L680.6 397L679 396.1L677.4 395.5L678.1 393.9L679.1 393.2L679.8 392.8L681.2 393.3L682.9 394.4L683.8 394.6L684.4 395.4L685.7 395.8L687.1 396.5L689 396.9Z" fill="#ebf7b1"/>
<path d="M697 397.2L697.7 397.8L697.5 398.8L696.2 398.8L694.7 398.7L693.7 399L692.2 398.4L692.1 398L693.2 396.8L694.2 396.3L695.4 396.7L696.2 396.8Z" fill="#d9281f"/>
<path d="M698.6 406.9L698.6 408.1L698 407.8L698.1 409.2L697.6 408.3L697.5 407.5L697.2 406.7L696.5 405.7L695 405.6L695.1 406.3L694.6 407.2L693.9 406.9L693.6 407.2L693.1 407L692.5 406.9L692.2 405.5L691.6 404.2L691.9 403.2L690.9 402.7L691.3 402.1L692.3 401.5L691.1 400.6L691.7 399.5L693 400.2L693.8 400.3L694 401.4L695.6 401.7L697.2 401.6L698.1 401.9L697.4 403.4L696.6 403.5L696.1 404.4L697 405.3L697.3 404.2L697.7 404.2Z" fill="#d9281f"/>
<path d="M757.7 360.1L760.6 360.6L762.6 361.8L763.3 363.4L765.9 363.4L767.3 362.8L770.1 362.3L769.2 363.8L768.6 364.4L768 366.2L766.9 367.9L764.8 367.6L763.4 368.2L763.8 369.6L763.6 371.6L762.7 371.7L762.7 372.5L761.6 371.5L761 372.5L758.3 373.2L758.6 374.1L757.1 374L756.4 373.5L755.2 374.7L753.3 375.6L752 376.7L749.6 377.2L748.4 378L746.5 378.4L747.4 377.7L747.1 377L748.4 375.9L747.5 375L746.1 375.6L744.2 376.7L743.1 377.8L741.5 377.9L740.6 378.7L741.5 379.9L742.9 380.1L742.9 380.9L744.3 381.4L746.1 380.2L747.6 380.8L748.7 380.9L749 381.8L746.6 382.2L745.8 383.1L744.2 384L743.3 385.2L745.1 386.1L745.8 387.8L746.8 389.3L748 390.6L748 391.9L746.9 392.3L747.3 393.2L748.3 393.7L748 395.1L747.6 396.4L746.7 396.6L745.4 398.4L744.1 400.7L742.5 402.7L740.2 404.2L737.8 405.6L735.9 405.8L734.9 406.6L734.3 406L733.3 406.9L731 407.7L729.2 408L728.6 409.8L727.7 409.9L727.3 408.6L727.6 408L725.4 407.4L724.6 407.7L722.9 407.3L722.1 406.6L722.4 405.6L720.8 405.3L720 404.7L718.6 405.6L716.9 405.8L715.6 405.8L714.7 406.2L713.8 406.4L714 408.4L713.1 408.3L713 407.9L712.9 407.2L711.7 407.7L711 407.4L709.7 406.8L710.2 405.4L709.1 405L708.7 403.5L706.9 403.8L707.2 401.8L708.8 400.3L708.8 399L708.8 397.7L708 397.3L707.5 396.3L706.5 396.4L704.7 396.1L705.2 395.4L704.5 394.4L703.2 395.1L701.8 394.7L699.9 395.8L698.3 397L697 397.2L696.2 396.8L695.4 396.7L694.2 396.3L693.2 396.8L692.1 398L692 396.7L690.9 397L689 396.9L687.1 396.5L685.7 395.8L684.4 395.4L683.8 394.6L682.9 394.4L681.2 393.3L679.8 392.8L679.1 393.2L676.8 392L675.1 390.9L674.6 389L675.9 389.3L675.9 388.4L675.2 387.5L675.4 386.2L673.6 384.2L670.8 383.5L670.3 382.2L669.1 381.4L668.8 380.9L668.5 380L668.6 379.3L667.6 378.9L667 379.1L666.6 377.5L667 377.2L666.8 376.8L668.4 376L669.6 375.6L671.4 375.9L672 374.8L674.2 374.6L674.8 373.9L677.4 373L677.7 372.6L677.5 371.7L678.7 371.2L677.2 368.3L680.5 367.6L681.4 367.2L682.6 364.2L686 364.8L686.9 364L687 362.3L688.4 362.1L689.7 361.1L690.3 360.9L690.8 362.1L692.2 363L694.6 363.6L695.8 364.9L695.1 366.9L695.7 367.7L697.7 367.9L700 368.2L702 369.2L703.1 369.4L703.8 371L704.8 372L706.7 371.9L710.2 372.3L712.4 372.1L714.1 372.3L716.6 373.4L718.6 373.4L719.4 373.9L721.3 373L724.1 372.4L726.6 372.3L728.6 371.7L729.8 370.8L731 370.3L730.7 369.7L730.2 369.1L731 368L732 368.1L733.7 368.5L735.4 367.6L738 366.9L739.2 365.8L740.4 365.3L742.9 365.1L744.2 365.3L744.4 364.7L742.9 363.5L741.5 363L740.2 363.6L738.5 363.3L737.6 363.5L737.1 362.8L738.3 361.2L739.2 359.9L741.2 360.5L743.6 359.5L743.5 358.7L745.1 356.9L746 356.4L746 355.4L745.1 355.1L746.4 354.2L748.6 353.9L750.8 353.9L753.3 354.4L754.8 355L755.8 356.7L756.5 357.4L757.1 358.5Z" fill="#f0804d"/>
<path d="M728.5 412.6L727 413.4L725.6 412.9L725.6 411.4L726.4 410.6L728.2 410.2L729.2 410.2L729.6 410.8L728.8 411.6Z" fill="#f0804d" stroke-width="1.4"/>
<path d="M747.8 402.9L746.8 405.6L746 407L745.1 405.6L744.9 404.3L745.9 402.7L747.3 401.4L748.1 401.9Z" fill="#ebf7b1" stroke-width="1.5"/>
<path d="M690.3 360.9L692.1 360.5L695.3 359.2L697.8 358.3L699.4 358.9L701 358.9L702.2 359.7L703.9 359.7L706.4 360.2L708 359L707.3 358L709.1 356.3L711 357L712.5 357.2L714.5 357.5L714.9 358.9L717.2 359.5L718.8 359.2L721 359L722.6 359.2L724.3 360L725.3 360.9L726.9 360.9L729.1 361.2L730.6 360.7L732.8 360.5L735.3 359.4L736.3 359.5L737.2 360L739.2 359.9L738.3 361.2L737.1 362.8L737.6 363.5L738.5 363.3L740.2 363.6L741.5 363L742.9 363.5L744.4 364.7L744.2 365.3L742.9 365.1L740.4 365.3L739.2 365.8L738 366.9L735.4 367.6L733.7 368.5L732 368.1L731 368L730.2 369.1L730.7 369.7L731 370.3L729.8 370.8L728.6 371.7L726.6 372.3L724.1 372.4L721.3 373L719.4 373.9L718.6 373.4L716.6 373.4L714.1 372.3L712.4 372.1L710.2 372.3L706.7 371.9L704.8 372L703.8 371L703.1 369.4L702 369.2L700 368.2L697.7 367.9L695.7 367.7L695.1 366.9L695.8 364.9L694.6 363.6L692.2 363L690.8 362.1Z" fill="#dcf0ad"/>
<path d="M762.7 372.5L763 372.8L762.3 372.7L761.6 373.3L761.1 373.9L761.2 375.1L760.3 375.5L760 375.8L759.3 376.3L758.2 376.5L757.5 377L757.4 377.7L757.2 377.9L757.9 378.2L758.9 378.9L758.6 379.3L757.9 379.4L756.7 379.5L756 380.3L755.3 380.2L755.2 380.4L754.4 380.1L754.2 380.4L753.7 380.5L753.6 380.2L753.2 380L752.7 379.8L753.2 379L753.6 378.8L753.4 378.5L753.9 377.6L753.7 377.3L752.8 377.2L752 376.7L753.3 375.6L755.2 374.7L756.4 373.5L757.1 374L758.6 374.1L758.3 373.2L761 372.5L761.6 371.5Z" fill="#fff6b6"/>
<path d="M758.9 378.9L760.3 380.9L760.7 382L760.7 384L760.1 384.9L758.6 385.2L757.2 385.9L755.7 386L755.5 385.1L755.8 383.9L755.1 382.1L756.3 381.8L755.2 380.4L755.3 380.2L756 380.3L756.7 379.5L757.9 379.4L758.6 379.3Z" fill="#fff6b6"/>
<path d="M780.2 381.4L779.5 382.8L779.8 383.6L778.9 384.8L776.8 385.6L773.8 385.7L771.4 387.6L770.3 387L770.2 385.7L767.3 386.1L765.3 386.9L763.3 386.9L765 388.1L763.9 391L762.8 391.7L762 391.1L762.4 389.5L761.3 389.1L760.6 387.9L762.2 387.4L763.1 386.3L764.8 385.4L766.1 384.3L769.4 383.8L771.2 384.1L773 381.1L774.1 381.9L776.6 380.2L777.6 379.6L778.6 377.5L778.3 375.6L779 374.6L780.8 374.3L781.7 376.6L781.7 378L780.1 379.7Z" fill="#fee9a4" stroke-width="1.4"/>
<path d="M785.1 369.5L786.3 369.9L787.5 369.2L787.9 371.1L785.4 371.5L783.9 373.2L781.2 372.1L780.3 373.9L778.5 373.9L778.2 372.3L779 371L780.8 370.9L781.3 368.5L781.8 367.2L783.8 369Z" fill="#fee9a4" stroke-width="1.4"/>
<path d="M769.5 386.5L769.7 387L768.7 388.1L768 387.5L767.2 387.9L766.7 388.9L765.6 388.4L765.6 387.6L766.6 386.6L767.5 386.8L768.2 386.1Z" fill="#fee9a4" stroke-width="1.4"/>
<path d="M710.2 410L709.2 410.8L708 410.8L707.3 412.7L706.6 413L707.4 414.4L708.5 415.7L709.1 416.8L708.5 418.3L707.9 418.6L708.3 419.4L709.5 420.8L709.7 421.7L709.6 422.5L710.3 424L709.4 425.6L708.6 427.3L708.4 426.1L708.9 424.8L708.3 423.8L708.5 422L707.8 421.1L707.3 419.1L706.9 416.9L706.2 415.5L705.1 416.4L703.2 417.6L702.2 417.4L701.2 417L701.8 414.9L701.4 413.4L700.1 411.4L700.3 410.8L699.3 410.6L698.1 409.2L698 407.8L698.6 408.1L698.6 406.9L699.5 406.5L699.3 405.8L699.7 405.2L699.7 403.5L701.1 403.8L701.8 402.4L701.9 401.6L702.8 400.2L702.8 399.2L705 398.1L706.2 398.4L706 397.3L706.6 397L706.5 396.4L707.5 396.3L708 397.3L708.8 397.7L708.8 399L708.8 400.3L707.2 401.8L706.9 403.8L708.7 403.5L709.1 405L710.2 405.4L709.7 406.8L711 407.4L711.7 407.7L712.9 407.2L713 407.9L711.6 409L711.2 409.6Z" fill="#dcf0ad"/>
<path d="M715.4 423.5L713.9 422.7L712.4 422.8L712.7 421.5L711.2 421.5L711 423.3L710.1 425.8L709.6 427.3L709.7 428.5L710.8 428.6L711.5 430.1L711.8 431.6L712.7 432.5L713.7 432.7L714.6 433.6L714.1 434.3L712.9 434.5L712.8 433.6L711.4 432.9L711.2 433.2L710.5 432.5L710.2 431.7L709.3 430.7L708.5 430L708.2 431L707.9 430L708.1 429L708.6 427.3L709.4 425.6L710.3 424L709.6 422.5L709.7 421.7L709.5 420.8L708.3 419.4L707.9 418.6L708.5 418.3L709.1 416.8L708.5 415.7L707.4 414.4L706.6 413L707.3 412.7L708 410.8L709.2 410.8L710.2 410L711.2 409.6L711.9 410.2L712 411.2L713.2 411.3L712.8 413L712.8 414.5L714.6 413.5L715.1 413.8L716.1 413.8L716.4 413.2L717.7 413.3L719 414.7L719.1 416.3L720.4 417.8L720.4 419.3L719.8 420L718.2 419.8L716 420.1L715 421.5Z" fill="#3f8cba"/>
<path d="M719.8 420L720.4 419.3L720.4 417.8L719.1 416.3L719 414.7L717.7 413.3L716.4 413.2L716.1 413.8L715.1 413.8L714.6 413.5L712.8 414.5L712.8 413L713.2 411.3L712 411.2L711.9 410.2L711.2 409.6L711.6 409L713 407.9L713.1 408.3L714 408.4L713.8 406.4L714.7 406.2L715.6 407.5L716.4 409L718.5 409.1L719.1 410.5L718.1 411L717.6 411.6L719.6 412.6L721 414.6L722.1 416.1L723.3 417.2L723.8 418.4L723.5 420.1L722 419.5L721.2 420.7L719.8 420Z" fill="#fee9a4"/>
<path d="M724.6 407.7L722.3 409.2L720.9 410.8L720.6 411.9L721.9 413.7L723.4 415.9L725 417L726 418.3L726.8 421.4L726.5 424.4L725.1 425.5L723.2 426.6L721.8 428L719.7 429.6L719.1 428.5L719.6 427.4L718.3 426.4L719.8 425.7L721.6 425.6L720.8 424.6L723.6 423.3L723.8 421.2L723.5 420.1L723.8 418.4L723.3 417.2L722.1 416.1L721 414.6L719.6 412.6L717.6 411.6L718.1 411L719.1 410.5L718.5 409.1L716.4 409L715.6 407.5L714.7 406.2L715.6 405.8L716.9 405.8L718.6 405.6L720 404.7L720.8 405.3L722.4 405.6L722.1 406.6L722.9 407.3Z" fill="#4a96bb"/>
<path d="M716.9 426.2L716.2 425.3L715.4 423.5L715 421.5L716 420.1L718.2 419.8L719.8 420L721.2 420.7L722 419.5L723.5 420.1L723.8 421.2L723.6 423.3L720.8 424.6L721.6 425.6L719.8 425.7L718.3 426.4Z" fill="#ef7048"/>
<path d="M712.8 433.6L712.9 434.5L714.1 434.3L714.6 433.6L715 433.8L716 434.8L716.7 435.9L716.8 437L716.6 437.8L716.8 438.4L716.9 439.4L717.5 439.8L718.2 441.3L718.1 441.9L716.9 442L715.3 440.8L713.3 439.4L713.1 438.6L712.2 437.4L711.9 436L711.3 435.1L711.5 433.9L711.2 433.2L711.4 432.9Z" fill="#ffffff"/>
<path d="M784.5 467.3L785.1 468.7L786.2 468L786.8 468.7L787.6 469.4L787.4 470.1L787.8 471.6L788 472.4L788.5 472.6L788.9 474.1L788.7 475L789.3 476.1L791.1 477L792.3 477.8L793.5 478.5L793.2 478.9L794.2 480L794.9 481.8L795.5 481.4L796.2 482.2L796.6 481.9L796.9 483.7L798.1 484.7L798.9 485.4L800.2 486.8L800.7 488.1L800.7 489.1L800.6 490.1L801.4 491.5L801.3 493L801 493.8L800.6 495.3L800.6 496.3L800.3 497.5L799.5 499L798.3 499.9L797.7 501.2L797.1 502L796.6 503.5L796 504.3L795.5 505.6L795.3 506.7L795.4 507.3L794.4 507.9L792.5 507.9L791 508.6L790.2 509.3L789.2 510L787.8 509.2L786.8 509L787 508.1L786.1 508.4L784.6 509.6L783.2 509.2L782.2 508.9L781.2 508.8L779.6 508.3L778.5 507.2L778.2 505.9L777.8 504.4L777 504.4L775.3 504.2L775.9 503.4L775.5 502.1L774.7 503.3L773.2 503.6L774 502.7L774.3 501.7L775 500.9L774.8 499.6L773.5 501.1L772.4 501.6L771.8 503L770.4 502.3L770.5 501.4L769.4 500.2L768.5 499.6L768.8 499.2L766.7 498.1L765.5 498.1L763.9 497.3L760.9 497.4L758.7 498L756.7 498.6L755.1 498.5L753.4 499.3L751.9 499.7L751.6 500.6L750.9 501.3L749.5 501.3L748.4 501.5L747 501.2L745.7 501.4L744.6 501.5L743.6 502.4L743.1 502.3L742.2 502.8L741.4 503.3L740.2 503.2L739.1 503.2L737.3 502.2L736.4 501.8L736.4 500.9L737.2 500.6L737.5 500.2L737.5 499.6L737.7 498.5L737.5 497.5L736.6 495.8L736.3 494.8L736.4 493.8L735.7 492.7L735.7 492.2L734.9 491.6L734.7 490.2L733.8 488.9L733.5 488.2L734.3 488.9L733.7 487.3L734.5 487.8L735 488.5L735 487.6L734.2 486.3L734 485.8L733.6 485.3L733.8 484.3L734.1 483.9L734.4 483L734.2 482L734.9 480.8L735 482.1L735.7 480.9L737.1 480.4L737.9 479.7L739.2 479L740 478.9L740.4 479.1L741.8 478.5L742.8 478.3L743.1 477.9L743.5 477.8L744.4 477.8L746.2 477.3L747.1 476.6L747.6 475.7L748.5 474.8L748.6 474.1L748.7 473.2L749.8 471.8L750.5 473.3L751.3 472.9L750.7 472.1L751.2 471.3L752 471.7L752.2 470.4L753.1 469.6L753.5 468.9L754.3 468.6L754.4 468.1L755.1 468.3L755.1 467.9L755.9 467.6L756.7 467.4L757.9 468.2L758.9 469.2L759.9 469.2L761 469.4L760.6 468.4L761.5 467.1L762.2 466.7L761.9 466.2L762.7 465.3L763.7 464.7L764.6 464.9L766 464.5L766 463.7L764.7 463.1L765.6 462.9L766.7 463.3L767.6 464L769.1 464.4L769.5 464.3L770.6 464.8L771.6 464.3L772.2 464.4L772.6 464.1L773.4 464.9L772.9 465.9L772.3 466.5L771.7 466.6L771.9 467.3L771.4 468.1L770.8 468.9L770.9 469.4L772.3 470.3L773.6 470.9L774.4 471.5L775.7 472.5L776.1 472.5L777 472.9L777.3 473.4L778.9 474L780 473.4L780.3 472.5L780.7 471.8L780.9 470.8L781.4 469.5L781.2 468.7L781.3 468.2L781.1 467.2L781.3 465.9L781.6 465.6L781.4 465L781.8 464.2L782.1 463.2L782.1 462.7L782.8 462.1L783.2 462.9L783.4 464L783.8 464.2L783.9 464.9L784.5 465.8L784.6 466.7Z" fill="#da2c22"/>
<path d="M787.6 513L789.3 513.5L790.2 513.3L791.5 513L792.5 513.1L792.6 515.1L792.1 515.7L791.9 517L791.3 516.6L790.1 517.7L789.8 517.7L788.7 517.6L787.7 516.2L787.5 515L786.5 513.6L786.5 512.8Z" fill="#da2c22"/>
<path d="M840.8 511.7L840.1 512.6L839.3 513.8L838 514.5L837.7 514L837 513.8L838 512.4L837.4 511.5L835.6 510.8L835.7 510.2L836.9 509.6L837.2 508.3L837.1 507.2L836.4 506.1L836.5 505.8L835.6 505.1L834.3 503.6L833.6 502.4L834.2 502.3L835.2 503.2L836.5 503.6L836.9 505.1L838.2 506.9L838.2 505.8L839 506.2L839.2 507.5L840.6 508L841.7 508.2L842.7 507.5L843.5 507.7L843.1 509.2L842.6 510.2L841.3 510.2L840.9 510.7Z" fill="#cdeba7"/>
<path d="M828.6 517.6L830 516.7L831.1 515.9L831.8 514.6L832.5 514.2L832.7 513.2L833.9 512.4L834.3 513.2L834.6 513.9L835.8 513.2L836.3 513.9L836.3 514.6L835.7 515.4L834.6 516.6L833.7 517.3L834.4 518.1L833.1 518.2L831.6 518.8L831.2 519.9L830.2 521.6L828.9 522.4L828 522.8L826.5 522.8L825.4 522.2L823.6 522.1L823.3 521.5L824.2 520.2L826.3 518.6L827.4 518.3Z" fill="#cdeba7"/>
<path d="M805.3 455.6L804.9 455.8L804.1 455.1L803.4 454.1L803 452.8L803.2 452.6L803.4 453.1L803.9 453.5L804.8 454.6L805.6 455.1Z" fill="#b9e3a6" stroke-width="1.8"/>
<path d="M780.2 448.5L783.1 449.7L786.3 450.6L787.4 451.5L788.4 452.3L788.6 453.3L791.4 454.4L791.8 455.3L790.3 455.4L790.7 456.6L792.2 457.7L793.3 459.5L794.2 459.4L794.2 460.2L795.5 460.4L795 460.8L796.8 461.5L796.6 462L795.5 462.1L795 461.6L793.6 461.5L791.9 461.2L790.6 460.1L789.6 459.2L788.7 457.7L786.5 457L785.1 457.5L784.1 458L784.3 459.3L783 459.8L782 459.6L780.3 459.5L780.2 454Z" fill="#b9e3a6"/>
<path d="M799 451.1L799.3 451.4L799.3 452.3L798.7 453.4L797.9 453.5L797.6 454L796.7 454.4L795.8 454.8L794.9 454.8L793.5 454.3L792.6 453.8L792.7 453.3L794.2 453.5L795.1 453.4L795.4 452.6L795.6 452.5L795.8 453.4L796.8 453.3L797.2 452.7L798.2 452.1L798 451.1Z" fill="#b9e3a6" stroke-width="1.8"/>
<path d="M800.7 451.7L800.2 452.2L799.9 451.2L799.5 450.5L798.7 449.9L797.7 449.2L796.5 448.7L797 448.3L797.9 448.8L798.5 449.2L799.2 449.6L799.9 450.3L800.5 450.8Z" fill="#b9e3a6" stroke-width="1.8"/>
<path d="M780.2 448.5L780.2 454L780.3 459.5L778.8 458.1L777.1 457.8L776.6 458.2L774.5 458.3L775.2 456.9L776.3 456.5L775.8 454.6L775 453.2L771.8 451.8L770.4 451.6L767.8 450.1L767.3 450.9L766.7 451L766.3 450.4L766.3 449.7L765 448.9L766.8 448.3L768 448.3L767.9 447.8L765.4 447.8L764.7 446.8L763.2 446.5L762.5 445.7L764.8 445.3L765.7 444.7L768.4 445.4L768.6 446L769.1 448.8L770.9 449.8L772.3 448L774.2 447L775.7 447L777.1 447.6L778.4 448.2Z" fill="#fee09b"/>
<path d="M703 434.8L706.7 435.2L708.2 436.9L709.5 438L710.5 438.7L712.1 440.6L713.8 440.6L715.2 441.7L716.2 443.2L717.5 443.9L716.8 445.3L717.8 445.9L718.4 445.9L718.7 447.1L719.3 448L720.5 448.2L721.3 449.3L720.9 451.4L720.8 454L719 454L717.5 452.6L715.4 451.2L714.6 450.2L713.4 448.8L712.5 447.6L711.2 445.2L709.8 443.8L709.3 442.3L708.6 441L707.1 440L706.2 438.5L705 437.6L703.2 435.7Z" fill="#fee09b" stroke-width="1.7"/>
<path d="M719.8 455.6L721.2 454.1L723.3 454.1L724.6 454.8L725.3 454.9L725.6 455.5L728.8 455.7L729.2 455L732.3 455.8L732.9 456.9L735.4 457.2L737.5 458.2L735.6 458.9L733.7 458.2L732.2 458.2L730.4 458.1L728.9 457.8L726.9 457.2L725.7 457L725 457.2L721.9 456.5L721.6 455.8Z" fill="#fee09b" stroke-width="1.7"/>
<path d="M741.2 437.1L740.2 438.6L741.5 440.2L741.2 441L743.1 442.6L741.1 442.8L740.5 443.9L740.6 445.5L739 446.6L738.9 448.3L738.3 450.9L738 450.3L736.1 451L735.4 450L734.2 449.9L733.4 449.4L731.4 450L730.7 449.1L729.7 449.2L728.3 449L728 446.8L727.2 446.3L726.3 444.9L726.1 443.4L726.3 441.8L727.3 440.7L727.6 441.8L728.7 442.8L729.8 442.4L730.9 442.6L731.9 441.7L732.7 441.6L734.3 442L735.7 441.7L736.5 439.3L737.2 438.7L737.8 436.8L739.7 436.8Z" fill="#fee09b"/>
<path d="M727.3 440.7L728.6 441.3L729.9 441L730.2 439.5L730.9 439.2L732.9 438.9L734.1 437.5L735 436.5L735.6 435.8L737.1 434.9L738.4 433.7L739.2 432.4L739.9 432.4L740.8 433.3L740.9 434L742 434.5L743.4 435L743.3 435.6L742.1 435.7L742.4 436.5L741.2 437.1L739.7 436.8L737.8 436.8L737.2 438.7L736.5 439.3L735.7 441.7L734.3 442L732.7 441.6L731.9 441.7L730.9 442.6L729.8 442.4L728.7 442.8L727.6 441.8Z" fill="#ffffff"/>
<path d="M744.8 453.6L744.4 451.7L743.9 450L743.2 450L742.7 448.8L743.4 447.7L743.6 446.4L744.5 443.8L744.8 443.1L746.3 441.9L747.6 442.4L749.7 442.6L751.6 442.5L753.3 441.3L753.6 441.7L752.3 443.4L751 443.7L749.4 443.4L746.5 443.5L745.1 443.7L744.8 445L746.3 446.5L747.3 445.7L750.4 445.1L750.3 445.9L749.5 445.7L748.8 446.7L747.3 447.3L748.9 449.5L748.6 450.1L750.1 452L750.1 453.1L749.2 453.6L748.5 453L749.4 451.6L747.7 452.3L747.3 451.8L747.5 451.2L746.3 450.2L746.4 448.5L745.3 449L745.4 451L745.5 453.4Z" fill="#ffffff" stroke-width="1.7"/>
<path d="M753.1 459.1L753.4 458.7L754.8 458.3L756 458.3L756.5 458.1L757.1 458.3L756.5 458.7L754.8 459.5L753.4 460L752.3 461.2L750.8 461.6L750.6 461.4L750.8 460.8L751.5 459.8Z" fill="#fee09b" stroke-width="1.4"/>
<path d="M739.2 458.3L741.9 458.2L744.6 458.3L747 458.4L749.7 457.8L749.5 458.7L746.9 459.2L744.6 459L743.2 458.8L741.3 459.1L739.3 459.3Z" fill="#fee09b" stroke-width="1.8"/>
<path d="M757.6 440.6L759.3 441.6L758.4 443.5L758.2 444.5L758.9 445.4L758.4 445.6L757.8 444.6L757.3 442.4L757.6 441Z" fill="#fee09b" stroke-width="1.8"/>
<path d="M758.3 449.5L760.8 448.8L763 449.5L763 450.6L761.6 449.9L760.2 449.8L759.3 449.9L758.1 449.8Z" fill="#fee09b" stroke-width="1.8"/>
<path d="M747 412.9L748 413.3L748.6 412.9L748.7 413.3L748.4 414L749 415.3L748.6 416.7L747.6 417.2L747.3 418.6L747.7 419.9L748.6 420.1L749.3 419.9L751.4 420.8L751.3 421.8L751.8 422.2L751.6 422.9L750.3 422.1L749.7 421.2L749.3 421.8L748.2 420.8L746.7 421.1L745.8 420.7L745.9 420L746.4 419.6L745.9 419.2L745.7 419.8L744.9 418.8L744.6 418.1L744.6 416.5L745.2 417L745.4 414.4L746 412.9Z" fill="#ffffff" stroke-width="2"/>
<path d="M755.5 429.9L755.7 431L755.8 432L755.2 433.5L754.6 431.8L753.8 432.6L754.3 433.9L753.9 434.7L751.9 433.7L751.4 432.5L751.9 431.7L750.9 430.9L750.3 431.6L749.5 431.5L748.3 432.5L748 432L748.7 430.5L749.7 430.1L750.7 429.4L751.2 430.2L752.5 429.7L752.8 429L754 428.9L753.9 427.6Z" fill="#ffffff" stroke-width="2"/>
<path d="M749.1 426.4L750.7 425.7L751.7 425.2L753.5 423L754.6 425.5L753.7 426.7L752.9 427.1L751.5 426.7L750.8 427.3L749.8 428.9L748.8 427.7L748.1 426.5L748.1 424.9L749.5 424.9Z" fill="#ffffff" stroke-width="2.5"/>
<path d="M743.9 424.9L744.2 426.3L743.1 427.2L742.2 428.4L740 430L740.8 428.8L742 427.8L743.1 426.6Z" fill="#ffffff" stroke-width="2"/>
<path d="M822 479.7L823.4 480.7L824.3 481.5L823.7 481.9L822.7 481.5L821.5 480.7L820.4 479.8L819.3 478.6L819.1 478L819.8 478.1L820.8 478.6L821.5 479.2Z" fill="#fdb96e" stroke-width="1.8"/>
<path d="M843.3 473.4L843.9 473.9L843.6 474.7L842.5 475L841.6 474.8L841.5 474L842.1 473.4Z" fill="#fdb96e" stroke-width="2"/>
<path d="M845 472.5L843.9 472.8L843.7 472.2L844.5 471.8L845 471.7L846 471.2L846 472.1Z" fill="#fdb96e" stroke-width="2"/>
<path d="M824.3 469.3L824.6 470.7L824.1 470.4L823.7 470.6L823.5 470.1L823.5 468.8Z" fill="#fdb96e" stroke-width="2"/>
<path d="M811.6 457.6L813.3 458.3L814 459.6L812.3 460.3L811.8 459.7Z" fill="#fdb96e" stroke-width="2.2"/>
<path d="M806.4 455.6L808.1 456.4L809.4 457.3L810.3 457.6L808.1 457.4Z" fill="#fdb96e" stroke-width="2.2"/>
<path d="M813.5 458.1L814.5 459.5L815.1 460.3L814.8 460.6Z" fill="#fdb96e" stroke-width="2.2"/>
<path d="M342.0 570.0L350.0 570.5L361.0 571.0L364.5 567.5L370.5 566.0L380.0 567.0L391.5 567.0L402.0 569.0L409.5 570.0L414.0 566.0L415.0 563.5L418.0 566.0L420.0 568.0L423.0 565.0L426.0 560.0L429.0 558.0L432.0 555.0L436.0 553.5L439.5 551.5L444.0 550.0L449.0 547.7L447.0 551.0L445.5 553.0L440.0 555.5L435.0 557.5L436.5 562.0L439.5 566.5L437.0 569.5L435.0 571.0L430.0 572.0L426.0 573.0L429.0 575.5L423.0 577.5L416.0 576.0L408.0 574.5L402.0 575.5L405.0 579.0L412.0 581.0L420.0 582.7L432.0 583.6L444.0 584.0L456.0 582.7L468.0 581.0L477.0 580.0L484.0 580.0L490.5 579.5L487.0 577.8L480.0 577.0L486.0 575.5L492.0 574.3L500.0 572.0L507.0 570.2L514.0 568.5L521.0 565.5L530.0 565.0L543.0 563.7L555.0 563.0L564.0 562.6L580.0 562.0L596.0 561.0L598.5 562.5L600.5 562.0L605.0 560.5L611.0 559.4L620.0 557.5L626.0 556.5L632.6 556.0L640.0 556.8L650.0 558.0L655.0 559.5L658.0 560.5L658.7 563.5L660.5 563.0L662.0 561.0L671.0 560.0L680.0 558.3L692.5 557.0L700.0 557.0L708.0 556.0L720.0 556.2L733.5 556.5L750.0 556.0L765.6 555.8L776.0 556.8L787.0 558.3L797.0 559.8L808.0 561.6L818.0 563.2L827.6 564.8L824.0 567.0L817.0 570.0L822.0 572.0L820.0 574.5L813.7 577.6L815.0 580.0L811.5 582.0L817.0 584.0L823.0 584.8L829.7 585.7L838.0 586.3L845.8 586.8L845.8 596.3L342.0 596.3Z" fill="#dc2b25" stroke-width="1.3"/>
<path d="M402.0 575.5L408.0 574.7L416.0 576.2L423.0 577.7L432.0 579.5L439.5 580.0L446.0 578.5L452.0 576.5L457.5 575.8L463.0 577.0L468.0 579.0L470.0 581.0L462.0 582.0L456.0 582.7L444.0 584.0L432.0 583.6L420.0 582.7L412.0 581.0L405.0 579.0Z" fill="#fff" stroke-width="1"/>
<path d="M450.0 579.5L453.0 577.5L457.5 576.0L462.0 577.0L466.0 579.0L468.0 581.0L460.0 581.3L454.0 581.0Z" fill="#dc2b25" stroke-width="1"/>
<path d="M420 582.2L432 583L444 583.2L456 582" fill="none" stroke="#9a9a9a" stroke-width="1.2"/>
<path d="M425.500 564l2-3 2.500 1-1 3zM420 560.500l2.500-1 .5 2-2 .5zM436 551l3-2 1 1.500-3 1.500zM441.500 548.500l3-1.500 .5 1.500-3 1zM446 546l2.500-1M431 554l2-2 1 1.500-2 1.500z" fill="#dc2b25" stroke-width="1.3"/>
<g fill="#141414" stroke="none"><circle cx="786.4" cy="397.6" r="0.8"/><circle cx="780.8" cy="401.4" r="0.8"/><circle cx="762.5" cy="402.6" r="0.8"/><circle cx="770.7" cy="410.0" r="0.8"/><circle cx="801.5" cy="392.6" r="0.8"/><circle cx="807.0" cy="394.5" r="0.8"/><circle cx="828.5" cy="389.0" r="0.8"/><circle cx="811.0" cy="407.0" r="1.0"/><circle cx="800.9" cy="403.3" r="0.7"/><circle cx="803.4" cy="413.3" r="0.8"/><circle cx="811.0" cy="417.4" r="0.8"/><circle cx="801.5" cy="419.2" r="0.7"/><circle cx="822.3" cy="411.4" r="0.7"/><circle cx="839.9" cy="415.2" r="0.7"/><circle cx="844.0" cy="412.0" r="0.7"/><circle cx="843.6" cy="419.2" r="0.7"/><circle cx="827.3" cy="446.0" r="0.7"/><circle cx="839.2" cy="466.2" r="0.8"/><circle cx="793.3" cy="472.8" r="0.7"/><circle cx="797.7" cy="473.7" r="0.7"/><circle cx="809.7" cy="477.5" r="0.8"/><circle cx="803.4" cy="314.8" r="0.7"/><circle cx="807.2" cy="314.8" r="0.7"/><circle cx="844.3" cy="324.2" r="1.0"/><circle cx="662.4" cy="455.2" r="1.0"/><circle cx="631.0" cy="454.3" r="0.7"/><circle cx="635.0" cy="452.6" r="0.7"/><circle cx="627.5" cy="461.4" r="0.7"/><circle cx="636.7" cy="462.3" r="0.7"/><circle cx="614.3" cy="463.7" r="0.8"/><circle cx="617.9" cy="461.4" r="0.8"/><circle cx="620.5" cy="466.1" r="0.8"/><circle cx="635.0" cy="479.9" r="0.8"/><circle cx="639.0" cy="477.2" r="0.8"/><circle cx="647.8" cy="477.7" r="0.9"/><circle cx="641.6" cy="472.5" r="0.7"/><circle cx="632.8" cy="471.0" r="0.7"/><circle cx="702.4" cy="464.9" r="0.7"/><circle cx="719.0" cy="462.3" r="0.8"/><circle cx="672.4" cy="508.9" r="0.7"/><circle cx="626.7" cy="522.1" r="0.9"/><circle cx="629.0" cy="522.5" r="0.7"/><circle cx="604.6" cy="523.5" r="0.7"/><circle cx="657.5" cy="526.9" r="1.5"/><circle cx="664.9" cy="534.1" r="0.8"/><circle cx="581.0" cy="539.7" r="0.7"/><circle cx="588.8" cy="494.8" r="1.2"/><circle cx="387.0" cy="444.0" r="1.2"/><circle cx="384.5" cy="443.0" r="0.8"/><circle cx="356.0" cy="490.5" r="0.7"/><circle cx="363.4" cy="488.8" r="0.7"/><circle cx="393.3" cy="494.2" r="0.7"/><circle cx="390.0" cy="499.0" r="0.7"/><circle cx="406.0" cy="488.2" r="0.7"/><circle cx="400.8" cy="501.7" r="0.8"/><circle cx="406.2" cy="501.2" r="0.8"/><circle cx="399.8" cy="506.0" r="0.7"/><circle cx="485.3" cy="451.0" r="0.8"/><circle cx="491.7" cy="443.3" r="0.7"/><circle cx="515.3" cy="457.8" r="0.8"/><circle cx="531.3" cy="471.0" r="0.8"/><circle cx="491.7" cy="479.2" r="0.7"/><circle cx="520.6" cy="507.0" r="0.8"/><circle cx="524.2" cy="512.4" r="0.8"/><circle cx="470.3" cy="535.2" r="0.8"/><circle cx="388.6" cy="561.0" r="0.7"/><circle cx="408.0" cy="540.0" r="0.6"/><circle cx="430.7" cy="390.3" r="0.8"/><circle cx="488.2" cy="378.0" r="0.8"/><circle cx="493.0" cy="379.3" r="0.8"/><circle cx="497.7" cy="381.8" r="0.8"/><circle cx="512.8" cy="388.8" r="0.8"/><circle cx="527.0" cy="324.8" r="0.9"/><circle cx="528.8" cy="340.0" r="1.0"/><circle cx="353.3" cy="413.0" r="0.7"/><circle cx="348.6" cy="413.0" r="0.7"/><circle cx="356.2" cy="427.0" r="0.7"/><circle cx="385.4" cy="442.2" r="0.7"/><circle cx="748.0" cy="414.0" r="0.8"/><circle cx="757.0" cy="425.0" r="0.7"/><circle cx="744.0" cy="436.0" r="0.7"/><circle cx="771.0" cy="457.0" r="0.7"/><circle cx="728.5" cy="481.0" r="0.7"/><circle cx="706.5" cy="464.0" r="0.6"/></g>
<g fill="none" stroke="#141414" stroke-linecap="round"><path d="M786.0 409.5L787.5 414.0L787.3 418.5L786.0 423.0" stroke-width="1.4" stroke-dasharray="0.1 2.4"/><path d="M767.5 432.2L769.0 431.0" stroke-width="1.3"/><path d="M772.0 429.3L774.0 428.6" stroke-width="1.3"/><path d="M777.0 428.4L779.0 428.8" stroke-width="1.3"/><path d="M783.5 431.6L785.0 430.8" stroke-width="1.3"/><path d="M787.5 430.3L789.5 429.5" stroke-width="1.4"/><path d="M792.3 431.0L794.0 430.4" stroke-width="1.3"/><path d="M796.5 430.0L798.5 432.5L800.0 434.5" stroke-width="1.3"/><path d="M806.0 433.5L808.5 434.2" stroke-width="1.4"/><path d="M811.0 433.0L813.0 433.8" stroke-width="1.3"/><path d="M815.5 435.0L817.0 436.0" stroke-width="1.3"/><path d="M821.0 424.5L823.5 427.0L826.5 430.5" stroke-width="1.6"/><path d="M827.5 423.5L829.0 427.5L831.0 433.5" stroke-width="1.6"/><path d="M824.5 433.0L826.0 435.0" stroke-width="1.5"/><path d="M826.0 421.0L827.0 422.5" stroke-width="1.2"/><path d="M833.0 439.5L835.0 443.0L838.5 448.5" stroke-width="1.7"/><path d="M840.5 455.5L842.5 457.5L844.3 459.5" stroke-width="1.3"/><path d="M801.5 452.0L806.0 455.0L810.0 458.0L814.0 461.0" stroke-width="2.6"/><path d="M805.0 452.5L809.0 455.0L812.5 457.5" stroke-width="1.8"/><path d="M808.5 459.5L812.0 462.5" stroke-width="1.8"/><path d="M791.5 459.2L795.0 460.5L798.5 462.3L801.5 463.8" stroke-width="2.4"/><path d="M795.0 463.5L799.0 465.5" stroke-width="1.6"/><path d="M821.6 461.5L823.0 465.0L824.0 469.0L826.0 473.0L828.0 477.0" stroke-width="2.3"/><path d="M824.5 462.5L825.5 466.0" stroke-width="1.6"/><path d="M840.5 472.5L844.5 472.8" stroke-width="2.6"/><path d="M840.8 475.0L844.0 475.3" stroke-width="2.6"/><path d="M845.0 470.5L846.0 469.5" stroke-width="1.5"/><path d="M815.0 475.5L818.0 478.0L821.5 480.5" stroke-width="2.4"/><path d="M664.9 425.5L665.0 445.5" stroke-width="1.5" stroke-dasharray="0.1 2.4"/><path d="M697.0 421.8L696.8 428.0" stroke-width="1.6"/><path d="M697.2 431.0L697.5 435.8" stroke-width="1.5"/><path d="M703.0 438.5L705.0 441.0" stroke-width="1.5"/><path d="M707.5 444.0L709.5 446.5" stroke-width="1.6"/><path d="M712.0 449.0L714.0 451.0" stroke-width="1.5"/><path d="M716.5 452.5L718.5 454.0" stroke-width="1.4"/><path d="M629.3 423.5L633.0 423.0" stroke-width="1.4"/><path d="M783.0 370.0L788.0 367.5L793.0 364.8L798.0 362.0L803.0 359.0" stroke-width="1.3" stroke-dasharray="0.1 2.4"/><path d="M821.6 351.6L825.4 352.8" stroke-width="1.4"/><path d="M832.3 354.7L836.0 355.5L840.5 356.5L845.5 357.2" stroke-width="1.3"/><path d="M476.8 535.5L479.5 536.0L482.1 537.0" stroke-width="1.7"/><path d="M494.5 539.5L495.8 542.3L495.2 545.0" stroke-width="1.2"/><path d="M510.9 396.9L514.0 397.2L517.5 397.8" stroke-width="1.6" stroke-dasharray="0.1 2.4"/><path d="M498.6 415.8L500.5 416.5" stroke-width="1.5"/><path d="M500.0 419.0L502.4 419.5" stroke-width="1.5"/><path d="M497.5 418.5L498.5 419.5" stroke-width="1.3"/><path d="M435.4 412.0L437.2 414.5L438.6 417.5L439.2 421.4" stroke-width="1.8"/><path d="M404.3 400.7L407.0 401.5" stroke-width="1.5"/><path d="M409.0 403.0L412.0 405.5" stroke-width="1.6"/><path d="M414.0 406.0L417.0 407.0" stroke-width="1.5"/><path d="M419.0 407.5L421.2 408.2" stroke-width="1.4"/><path d="M410.0 400.0L411.5 402.0" stroke-width="1.4"/><path d="M438.0 549.8L441.0 549.0L444.5 548.0" stroke-width="1.4"/><path d="M742.5 398.0L743.0 404.0" stroke-width="1.2"/><path d="M739.0 406.5L741.0 408.0" stroke-width="1.2"/></g>
</g></svg>

<!-- IDENTIFY -->
<div class="t" style="left:936.500px;top:204.500px">Identify Results</div>
<div class="view" style="left:933px;top:262px;width:270px;height:434px;border-color:#fcfcfc #bcbebf #bcbebf #bcbebf"></div>
<div class="a" style="left:934px;top:262px;width:266px;height:25px;background:linear-gradient(#fbfbfb,#f1f2f2);border-bottom:1px solid #bfc1c2"></div>
<div class="t" style="left:937.500px;top:267.500px">Feature</div>
<div class="t" style="left:1075.500px;top:267.500px">Value</div>
<div class="a" style="left:942.500px;top:232.500px;width:20.500px;height:20px;background:#e3edf8;border:1px solid #a9c6e8;box-sizing:border-box;border-radius:2px"></div>
<div class="sep" style="left:972px;top:232px;height:21px"></div>
<div class="sep" style="left:1069px;top:232px;height:21px"></div>
<div class="sep" style="left:1107px;top:232px;height:21px"></div>
<div class="t" style="left:937.500px;top:703.500px">Mode</div>
<div class="a" style="left:987px;top:699.500px;width:179px;height:25px;background:linear-gradient(#f6f7f7,#eceded);border:1px solid #bcbebf;border-radius:3px;box-sizing:border-box"></div>
<div class="t" style="left:991px;top:703.500px">Current layer</div>
<div class="a" style="left:1172px;top:703px;width:18.500px;height:18px;background:#fff;border:1px solid #d0d0d0;box-sizing:border-box"></div>
<div class="t" style="left:1196.500px;top:703.500px">A</div>
<div class="t" style="left:937.500px;top:729.500px;color:#9a9c9e">View</div>
<div class="a" style="left:982px;top:725.500px;width:96px;height:24px;background:#f0f1f2;border:1px solid #cfd1d2;border-radius:3px;box-sizing:border-box"></div>
<div class="t" style="left:985px;top:729.500px;color:#a4a6a8">Tree</div>
<svg width="1200" height="795" viewBox="0 0 1200 795">
<!-- form view -->
<g fill="#fff" stroke="#6a7a8a" stroke-width="1"><rect x="950.500" y="236.500" width="9" height="4.500"/><rect x="950.500" y="244.500" width="9" height="4.500"/></g><path d="M945.500 238.800H949M945.500 246.800H949" stroke="#333" stroke-width="1.600"/>
<!-- expand tree -->
<g id="extree"><path d="M982.500 235H1000.500M986.500 235V251.500M986.500 242.500H991M986.500 249.500H991" fill="none" stroke="#8a8a8a" stroke-width="1.300"/><rect x="987.500" y="240.500" width="3.500" height="3.500" fill="#f29a2e"/><rect x="987.500" y="247.500" width="3.500" height="3.500" fill="#f29a2e"/></g><path d="M995.500 252L1002.500 244H998.500V233H992.500V244H988.500Z" fill="#4f84c2" stroke="#2f5a94" stroke-width=".9"/>
<use href="#extree" x="29"/><path d="M1024.500 232L1031.500 240H1027.500V251.500H1021.500V240H1017.500Z" fill="#4f84c2" stroke="#2f5a94" stroke-width=".9"/>
<use href="#extree" x="58"/><path d="M1053.500 252L1060.500 244H1056.500V236H1050.500V244H1046.500Z" fill="#4f84c2" stroke="#2f5a94" stroke-width=".9"/><path d="M1047 231.500L1049.300 236.300L1054.500 237L1050.700 240.600L1051.700 245.800L1047 243.300L1042.300 245.800L1043.300 240.600L1039.500 237L1044.700 236.300Z" fill="#f6e04a" stroke="#d9b520" stroke-width=".8"/>
<!-- clear -->
<rect x="1078.500" y="233.500" width="15" height="14.500" fill="#f7dc4b" stroke="#e3c23a"/><rect x="1089.500" y="243.500" width="10" height="10" rx="1.500" fill="#c8232c"/><circle cx="1094.500" cy="248.500" r="3" fill="none" stroke="#fff" stroke-width="1.200"/><path d="M1092.500 250.500L1096.500 246.500" stroke="#fff" stroke-width="1.200"/>
<!-- copy -->
<g fill="#f3f3f3" stroke="#6a6a6a" stroke-width="1.100"><path d="M1123.500 233.500H1129.500L1133.500 237.500V247.500H1123.500Z"/><path d="M1118.500 238.500H1125L1129 242.500V252H1118.500Z"/></g><path d="M1120.500 244.500H1127M1120.500 247H1127M1120.500 249.500H1127" stroke="#6a6a6a" stroke-width=".9"/>
<!-- print disabled -->
<rect x="1150" y="234.500" width="11" height="6" fill="#e6e6e6" stroke="#d4d4d4"/><rect x="1146.500" y="239.500" width="18" height="8" rx="1.500" fill="#d6d6d6"/><rect x="1150" y="245" width="11" height="5.500" fill="#ececec" stroke="#d4d4d4"/>
<!-- identify select -->
<rect x="1174.500" y="234.500" width="20" height="16.500" fill="#e4e4e4" stroke="#333" stroke-width="1" stroke-dasharray="2 1.500"/><circle cx="1182.500" cy="239.500" r="6.300" fill="url(#gBlue)"/><text x="1182.500" y="243.500" text-anchor="middle" font-size="10.500" font-style="italic" font-weight="bold" fill="#fff" font-family="Liberation Serif,serif">i</text><g transform="translate(1185.500 241) scale(.72)"><use href="#curs"/></g>
<!-- combos -->
<use href="#dd" x="1151" y="712.500"/><use href="#dd" x="1064" y="737.500" opacity=".55"/>
<path d="M1175 712L1179.500 718.500L1187.500 705" fill="none" stroke="#111" stroke-width="2.300"/>
</svg>

<!-- CONSOLE -->
<div class="t" style="left:628px;top:619.500px;font-size:8px;color:#b0b2b3">.....</div>
<div class="t" style="left:932px;top:470px;font-size:8px;color:#b0b2b3;transform:rotate(90deg);transform-origin:0 0">.....</div>
<div class="a" style="left:342px;top:655px;width:583px;height:96px;background:#fff;border:1px solid #bcbebf;box-sizing:border-box;overflow:hidden">
<div style="position:absolute;left:1.600px;top:-19.500px;width:560px;font-size:18.720px;line-height:22.800px;color:#000;white-space:nowrap"><span style="position:absolute;left:57px;top:0">y</span><span style="position:absolute;left:374px;top:0">g</span><span style="position:absolute;left:429px;top:0">g</span><span style="position:absolute;left:536px;top:0">g</span></div>
<div style="position:absolute;left:1.600px;top:4.0px;font-size:18.720px;line-height:22.800px;color:#000;white-space:nowrap">core and gui Qgs* class members have a p_* equivalent</div>
<div style="position:absolute;left:1.600px;top:27.0px;font-size:18.720px;line-height:22.800px;color:#000;white-space:nowrap">property to ease class introspection with <b>TAB</b> completion.</div>
<div style="position:absolute;left:1.600px;top:50.0px;font-size:18.720px;line-height:22.800px;color:#000;white-space:nowrap">Don't forget that you have access to all your underlying</div>
<div style="position:absolute;left:1.600px;top:72.0px;font-size:18.720px;line-height:22.800px;color:#000;white-space:nowrap">shell commands too!</div>
<div style="position:absolute;left:562px;top:0;width:20px;height:94px;background:linear-gradient(90deg,#efefef,#fdfdfd 40%,#fafafa);border-left:1px solid #d4d4d4;box-sizing:border-box"></div>
<div style="position:absolute;left:563px;top:18.500px;width:19px;height:1px;background:#c4c4c4"></div>
<div style="position:absolute;left:563px;top:19.500px;width:19px;height:11px;background:#e2e2e2"></div>
<div style="position:absolute;left:563px;top:67px;width:19px;height:9px;background:#e2e2e2"></div>
</div>
<svg width="1200" height="795" viewBox="0 0 1200 795">
<g fill="#76787a"><path d="M909 668.500H920L914.500 662.500Z"/><path d="M909 737.500H920L914.500 743.500Z"/></g>
<g fill="none" stroke="#5a5c5e" stroke-width="1"><rect x="904.500" y="640.500" width="7.500" height="7.500" rx="1.500"/><path d="M906.500 645L908 643L909.500 645.500L910.500 643.500"/><rect x="915.500" y="640.500" width="7.500" height="7.500" rx="1.500"/><path d="M917.500 642.500L921 646M921 642.500L917.500 646" stroke-width="1.200"/></g>
</svg>

<!-- STATUS -->
<div class="a" style="left:10px;top:755px;width:342.500px;height:25px;background:#fcfcfc;border-left:1px solid #a9abad;border-top:1px solid #a9abad;border-radius:2px 0 0 0;box-sizing:border-box"></div>
<div class="t" style="left:44px;top:760.300px;font-size:16.500px;color:#7f8386">Type to locate (Ctrl+K)</div>
<div class="t" style="left:387.500px;top:761px;font-size:13.200px">rdii</div>
<div class="a" style="left:408.500px;top:757.500px;width:104px;height:20.500px;background:#fcfcfc;border-radius:2px"></div>
<div class="t" style="left:424.500px;top:761px;font-size:13.200px">-115.9,-4.9</div>
<div class="t" style="left:545.500px;top:761px;font-size:13.200px">a</div>
<div class="a" style="left:552.500px;top:755.500px;width:126.500px;height:24px;background:#fdfdfd;border:1px solid #e0e1e2;border-radius:3px;box-sizing:border-box"></div>
<div class="t" style="left:555px;top:761px;font-size:13.200px">1:270.069.582</div>
<div class="t" style="left:714.500px;top:761px;font-size:13.200px">n</div>
<div class="a" style="left:723px;top:754px;width:96px;height:28px;background:#fdfdfd;border:1px solid #d4d5d6;border-radius:3px;box-sizing:border-box"></div>
<div class="a" style="left:800px;top:755px;width:18px;height:26px;background:#f1f2f2;border-left:1px solid #d9dadb;border-radius:0 3px 3px 0"></div>
<div class="t" style="left:727.500px;top:760.500px;font-size:14.200px">100%</div>
<div class="t" style="left:824.500px;top:761px;font-size:13.200px">a</div>
<div class="a" style="left:835px;top:754px;width:93px;height:28px;background:#fdfdfd;border:1px solid #d4d5d6;border-radius:3px;box-sizing:border-box"></div>
<div class="a" style="left:908px;top:755px;width:19px;height:26px;background:#f1f2f2;border-radius:0 3px 3px 0"></div>
<div class="t" style="left:838.500px;top:760.500px;font-size:14.200px">0,0 °</div>
<div class="a" style="left:932.500px;top:758px;width:18.500px;height:18.500px;background:#fff;border:1px solid #d0d0d0;box-sizing:border-box"></div>
<div class="t" style="left:959.500px;top:761px;font-size:13.200px">Render</div>
<div class="t" style="left:1041px;top:761px;font-size:13.200px">EPSG:4326</div>
<svg width="1200" height="795" viewBox="0 0 1200 795">
<!-- search icon -->
<circle cx="27.500" cy="765.500" r="5.600" fill="none" stroke="#7f8386" stroke-width="1.600"/><path d="M31.500 769.500L36.500 774.500" stroke="#7f8386" stroke-width="1.800"/>
<!-- mouse extents icon -->
<g><ellipse cx="525.5" cy="765.5" rx="6.2" ry="8.3" transform="rotate(-25 525.5 765.5)" fill="#1a1a1a"/><path d="M521.5 759.5L523.5 766M526 758L528 764.5" stroke="#fff" stroke-width="1.3"/><circle cx="530" cy="772" r="3.6" fill="#fff" stroke="#111" stroke-width="1.6"/><circle cx="530" cy="772" r="1.2" fill="#111"/><path d="M534 758.500L536 757M533.500 762L536.500 761.500" stroke="#333" stroke-width="1"/></g>
<use href="#dd" x="664" y="768.500"/>
<!-- lock -->
<path d="M692.500 767V763.500C692.500 758 702.500 758 702.500 763.500V767" fill="none" stroke="#9a9a9a" stroke-width="2.400"/><rect x="689" y="766.500" width="17" height="11" rx="1.200" fill="#6e6e6e"/>
<!-- spin arrows -->
<g fill="#76787a"><path d="M803.500 764.500H814L808.700 758.500Z"/><path d="M803.500 771.500H814L808.700 777.500Z"/><path d="M912.300 764.500H922.800L917.500 758.500Z"/><path d="M912.300 771.500H922.800L917.500 777.500Z"/></g>
<path d="M935.500 767L940 773.500L948 760" fill="none" stroke="#111" stroke-width="2.300"/>
<!-- crs icon -->
<g fill="none" stroke="#555" stroke-width="1"><path d="M1019 767.500C1019 763 1023 760.500 1028 760.500C1033 760.500 1037 763 1037 767.500Z" fill="#fafafa"/><path d="M1028 760.500V775.500M1019 767.500H1037M1023 761.500Q1021.500 764.500 1022 767.500M1033 761.500Q1034.500 764.500 1034 767.500M1020 764H1036"/><path d="M1021 767.500Q1022 773 1028 775.500Q1034 773 1035 767.500M1022.500 771.500H1033.500M1024.500 767.500Q1025 772 1028 775.500M1031.500 767.500Q1031 772 1028 775.500"/></g>
<!-- messages bubble -->
<path d="M1134 767.500C1134 763 1138.500 760 1144 760C1149.500 760 1154 763 1154 767.500C1154 772 1149.500 774.500 1146 774.500L1149.500 778L1142 774.500C1137.500 774 1134 771.500 1134 767.500Z" fill="#555759"/><g fill="#fff"><circle cx="1139.500" cy="767.500" r="1.500"/><circle cx="1144" cy="767.500" r="1.500"/><circle cx="1148.500" cy="767.500" r="1.500"/></g>
<!-- blue ring -->
<circle cx="1178.800" cy="768.500" r="5" fill="none" stroke="#3b7fd6" stroke-width="3.200"/><path d="M1175 766A4.500 4.500 0 0 1 1180 763.500" fill="none" stroke="#cfe2f8" stroke-width="1.500"/>
<rect x="1196" y="762" width="6" height="13" fill="none" stroke="#e02a2a" stroke-width="1.600"/>
<!-- bottom marks -->
<path d="M155.500 792V795M175.500 792V795" stroke="#555" stroke-width="1"/>
</svg>

</body></html>
